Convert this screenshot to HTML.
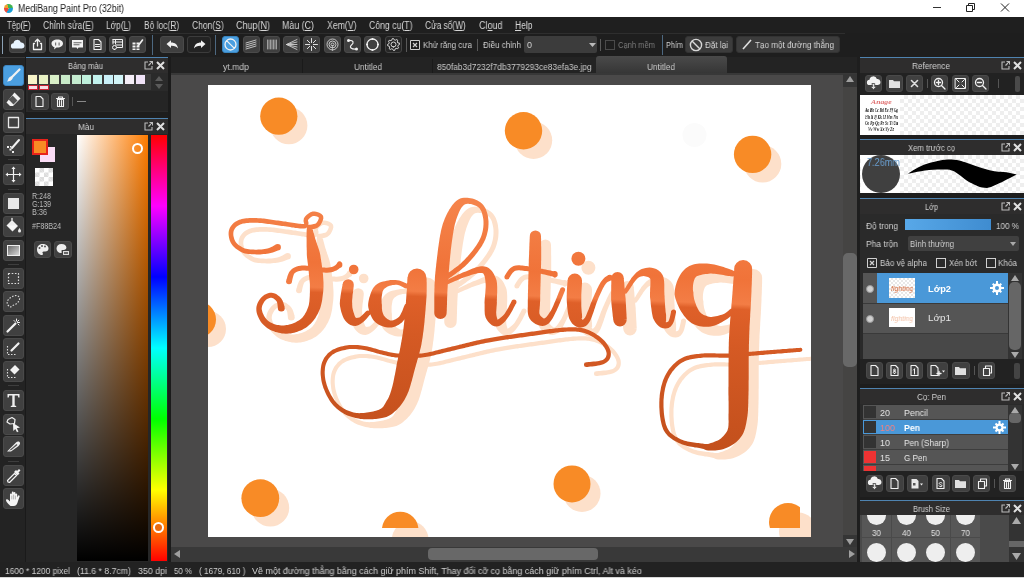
<!DOCTYPE html><html><head><meta charset="utf-8"><style>
html,body{margin:0;padding:0;width:1024px;height:578px;overflow:hidden;background:#232323}
body{position:relative;font-family:"Liberation Sans",sans-serif}
body>div,body>svg{position:absolute}
.tx{transform-origin:0 50%;will-change:transform}
</style></head><body>
<div style="left:0px;top:0px;width:1024px;height:17px;background:#ffffff;"></div>
<div style="left:4px;top:4px;width:9px;height:9px;border-radius:50%;background:conic-gradient(from 200deg,#e84c3d 0 22%,#f0a030 0 40%,#3fb34f 0 68%,#1b9fd6 0 100%)"></div>
<div id="t1" class="tx" style="transform:scaleX(0.883);left:18px;top:4.2px;font-size:10px;line-height:10px;color:#1a1a1a;font-weight:normal;white-space:nowrap;">MediBang Paint Pro (32bit)</div>
<div style="left:933px;top:7px;width:8px;height:1px;background:#333;"></div>
<svg style="left:966px;top:3px" width="9" height="9"><path d="M0.5 2.5H6.5V8.5H0.5Z M2.5 2.5V0.5H8.5V6.5H6.5" fill="none" stroke="#222" stroke-width="1"/></svg>
<svg style="left:1000px;top:3px" width="10" height="9"><path d="M1 0.5L9 8.5M9 0.5L1 8.5" stroke="#222" stroke-width="1"/></svg>
<div style="left:0px;top:17px;width:1024px;height:16px;background:#1f1f1f;"></div>
<div id="t2" class="tx" style="transform:scaleX(0.783);left:6.6px;top:21.4px;font-size:10px;line-height:10px;color:#d6d6d6;font-weight:normal;white-space:nowrap;">Tệp(<u>F</u>)</div>
<div id="t3" class="tx" style="transform:scaleX(0.852);left:43px;top:21.4px;font-size:10px;line-height:10px;color:#d6d6d6;font-weight:normal;white-space:nowrap;">Chỉnh sửa(<u>E</u>)</div>
<div id="t4" class="tx" style="transform:scaleX(0.836);left:105.5px;top:21.4px;font-size:10px;line-height:10px;color:#d6d6d6;font-weight:normal;white-space:nowrap;">Lớp(<u>L</u>)</div>
<div id="t5" class="tx" style="transform:scaleX(0.844);left:143.8px;top:21.4px;font-size:10px;line-height:10px;color:#d6d6d6;font-weight:normal;white-space:nowrap;">Bộ lọc(<u>R</u>)</div>
<div id="t6" class="tx" style="transform:scaleX(0.851);left:192px;top:21.4px;font-size:10px;line-height:10px;color:#d6d6d6;font-weight:normal;white-space:nowrap;">Chọn(<u>S</u>)</div>
<div id="t7" class="tx" style="transform:scaleX(0.899);left:236px;top:21.4px;font-size:10px;line-height:10px;color:#d6d6d6;font-weight:normal;white-space:nowrap;">Chụp(<u>N</u>)</div>
<div id="t8" class="tx" style="transform:scaleX(0.885);left:282px;top:21.4px;font-size:10px;line-height:10px;color:#d6d6d6;font-weight:normal;white-space:nowrap;">Màu (<u>C</u>)</div>
<div id="t9" class="tx" style="transform:scaleX(0.870);left:326.5px;top:21.4px;font-size:10px;line-height:10px;color:#d6d6d6;font-weight:normal;white-space:nowrap;">Xem(<u>V</u>)</div>
<div id="t10" class="tx" style="transform:scaleX(0.869);left:368.5px;top:21.4px;font-size:10px;line-height:10px;color:#d6d6d6;font-weight:normal;white-space:nowrap;">Công cụ(<u>T</u>)</div>
<div id="t11" class="tx" style="transform:scaleX(0.833);left:424.7px;top:21.4px;font-size:10px;line-height:10px;color:#d6d6d6;font-weight:normal;white-space:nowrap;">Cửa sổ(<u>W</u>)</div>
<div id="t12" class="tx" style="transform:scaleX(0.899);left:478.5px;top:21.4px;font-size:10px;line-height:10px;color:#d6d6d6;font-weight:normal;white-space:nowrap;">Cl<u>o</u>ud</div>
<div id="t13" class="tx" style="transform:scaleX(0.850);left:515px;top:21.4px;font-size:10px;line-height:10px;color:#d6d6d6;font-weight:normal;white-space:nowrap;"><u>H</u>elp</div>
<div style="left:0px;top:33px;width:1024px;height:24px;background:#1e1e1e;"></div>
<div style="left:0px;top:33px;width:845px;height:1px;background:#2e2e2e;"></div>
<div style="left:2px;top:36px;width:1px;height:18px;background:#8aa0b4;"></div>
<div style="left:9px;top:36px;width:15px;height:15px;background:#3f3f3f;border:1px solid #4a4a4a;border-radius:3px"></div>
<svg style="left:9px;top:36px" width="17" height="17" viewBox="0 0 17 17"><path d="M4.5 12.5a2.6 2.6 0 0 1 0-5.2 3.8 3.8 0 0 1 7.4-.8 2.9 2.9 0 0 1 1 6z" fill="#e8f4ff"/></svg>
<div style="left:29px;top:36px;width:15px;height:15px;background:#3f3f3f;border:1px solid #4a4a4a;border-radius:3px"></div>
<svg style="left:29px;top:36px" width="17" height="17" viewBox="0 0 17 17"><path d="M5.5 7.5H4.5V13.5H12.5V7.5H11.5" fill="none" stroke="#f2f2f2" stroke-width="1.3" stroke-linecap="round" stroke-linejoin="round"/><path d="M8.5 10V3.5M6.3 5.5L8.5 3.3 10.7 5.5" fill="none" stroke="#f2f2f2" stroke-width="1.3" stroke-linecap="round" stroke-linejoin="round"/></svg>
<div style="left:49px;top:36px;width:15px;height:15px;background:#3f3f3f;border:1px solid #4a4a4a;border-radius:3px"></div>
<svg style="left:49px;top:36px" width="17" height="17" viewBox="0 0 17 17"><path d="M8.5 3.5c3.3 0 5.5 1.8 5.5 4s-2.2 4-5.5 4l-1 .1-2.5 2 .5-2.3c-1.8-.6-3-2-3-3.8 0-2.2 2.2-4 6-4z" fill="#f2f2f2"/><path d="M6 6.5h1.2v3H6zM9.5 6.5h1.2v3H9.5z" fill="#777"/></svg>
<div style="left:69px;top:36px;width:15px;height:15px;background:#3f3f3f;border:1px solid #4a4a4a;border-radius:3px"></div>
<svg style="left:69px;top:36px" width="17" height="17" viewBox="0 0 17 17"><path d="M3 4h11v7.5H9.5L8.5 13 7.5 11.5H3z" fill="#f2f2f2"/><path d="M4.5 6.2h8v1h-8zM4.5 8.3h6v1h-6z" fill="#666"/></svg>
<div style="left:89px;top:36px;width:15px;height:15px;background:#3f3f3f;border:1px solid #4a4a4a;border-radius:3px"></div>
<svg style="left:89px;top:36px" width="17" height="17" viewBox="0 0 17 17"><path d="M5 3.5H9.5L12 6V13.5H5Z" fill="none" stroke="#f2f2f2" stroke-width="1.1" stroke-linecap="round" stroke-linejoin="round"/><path d="M6.5 8.5h4M6.5 10.5h4" fill="none" stroke="#f2f2f2" stroke-width="1.1" stroke-linecap="round" stroke-linejoin="round"/></svg>
<div style="left:109px;top:36px;width:15px;height:15px;background:#3f3f3f;border:1px solid #4a4a4a;border-radius:3px"></div>
<svg style="left:109px;top:36px" width="17" height="17" viewBox="0 0 17 17"><path d="M4 3.5H13.5V11.5H8M4 3.5V8M4 6H13.5M6.5 3.5V8M7 9H13.5" fill="none" stroke="#f2f2f2" stroke-width="1" stroke-linecap="round" stroke-linejoin="round"/><path d="M5.5 13.5a2 2 0 1 0 0-4 2 2 0 1 0 0 4z" fill="none" stroke="#f2f2f2" stroke-width="1" stroke-linecap="round" stroke-linejoin="round"/></svg>
<div style="left:129px;top:36px;width:15px;height:15px;background:#3f3f3f;border:1px solid #4a4a4a;border-radius:3px"></div>
<svg style="left:129px;top:36px" width="17" height="17" viewBox="0 0 17 17"><path d="M3.5 6.5h3v2h-3zM7.5 6.5h3v2h-3zM3.5 9.5h3v2h-3zM7.5 9.5h3v2h-3zM3.5 12.5h3v1.5h-3zM7.5 12.5h3v1.5h-3z" fill="#f2f2f2"/><path d="M9 10L13.5 4" fill="none" stroke="#f2f2f2" stroke-width="1.6" stroke-linecap="round" stroke-linejoin="round"/></svg>
<div style="left:152px;top:35px;width:1px;height:20px;background:#4d6880;"></div>
<div style="left:160px;top:36px;width:22px;height:15px;background:#3f3f3f;border:1px solid #4a4a4a;border-radius:3px"></div>
<svg style="left:163px;top:36px" width="19" height="17" viewBox="0 0 19 17"><path d="M3.5 8L8 4.2V6.5C12 6.5 14.5 8.5 15 12.5 13.5 10.3 11.5 9.6 8 9.7V12z" fill="#f2f2f2"/></svg>
<div style="left:187px;top:36px;width:22px;height:15px;background:#232323;border:1px solid #3c3c3c;border-radius:3px"></div>
<svg style="left:190px;top:36px" width="19" height="17" viewBox="0 0 19 17"><path d="M15.5 8L11 4.2V6.5C7 6.5 4.5 8.5 4 12.5 5.5 10.3 7.5 9.6 11 9.7V12z" fill="#f2f2f2"/></svg>
<div style="left:215px;top:35px;width:1px;height:20px;background:#4d6880;"></div>
<div style="left:222px;top:36px;width:15px;height:15px;background:#4b9fe0;border:1px solid #3a86c0;border-radius:3px"></div>
<svg style="left:222px;top:36px" width="17" height="17" viewBox="0 0 17 17"><path d="M8.5 14a5.5 5.5 0 1 0 0-11 5.5 5.5 0 1 0 0 11zM4.6 4.6L12.4 12.4" fill="none" stroke="#f2f2f2" stroke-width="1.3" stroke-linecap="round" stroke-linejoin="round"/></svg>
<div style="left:243px;top:36px;width:15px;height:15px;background:#3f3f3f;border:1px solid #4a4a4a;border-radius:3px"></div>
<svg style="left:243px;top:36px" width="17" height="17" viewBox="0 0 17 17"><path d="M3 7L13 4M3 9L13 6M3 11L13 8M3 13L13 10" fill="none" stroke="#cfcfcf" stroke-width="0.9" stroke-linecap="round" stroke-linejoin="round"/></svg>
<div style="left:263px;top:36px;width:15px;height:15px;background:#3f3f3f;border:1px solid #4a4a4a;border-radius:3px"></div>
<svg style="left:263px;top:36px" width="17" height="17" viewBox="0 0 17 17"><path d="M4.5 4V13M6 4V13M7.5 4V13M9 4V13M10.5 4V13M12 4V13M13.5 4V13" fill="none" stroke="#e0e0e0" stroke-width="0.6" stroke-linecap="round" stroke-linejoin="round"/></svg>
<div style="left:283px;top:36px;width:15px;height:15px;background:#3f3f3f;border:1px solid #4a4a4a;border-radius:3px"></div>
<svg style="left:283px;top:36px" width="17" height="17" viewBox="0 0 17 17"><path d="M3.5 8.5L14 3.5M3.5 8.5L14 6M3.5 8.5L14 8.5M3.5 8.5L14 11M3.5 8.5L14 13.5" fill="none" stroke="#d0d0d0" stroke-width="0.9" stroke-linecap="round" stroke-linejoin="round"/></svg>
<div style="left:303px;top:36px;width:15px;height:15px;background:#3f3f3f;border:1px solid #4a4a4a;border-radius:3px"></div>
<svg style="left:303px;top:36px" width="17" height="17" viewBox="0 0 17 17"><path d="M8.5 2.5V14.5M2.5 8.5H14.5M4.3 4.3L12.7 12.7M12.7 4.3L4.3 12.7" fill="none" stroke="#e0e0e0" stroke-width="1" stroke-linecap="round" stroke-linejoin="round"/><path d="M7 7h3v3H7z" fill="#404040"/></svg>
<div style="left:324px;top:36px;width:15px;height:15px;background:#3f3f3f;border:1px solid #4a4a4a;border-radius:3px"></div>
<svg style="left:324px;top:36px" width="17" height="17" viewBox="0 0 17 17"><path d="M8.5 14a5.5 5.5 0 1 0 0-11 5.5 5.5 0 1 0 0 11zM8.5 12a3.5 3.5 0 1 0 0-7 3.5 3.5 0 1 0 0 7zM8.5 10a1.5 1.5 0 1 0 0-3 1.5 1.5 0 1 0 0 3z" fill="none" stroke="#d8d8d8" stroke-width="0.9" stroke-linecap="round" stroke-linejoin="round"/></svg>
<div style="left:344px;top:36px;width:15px;height:15px;background:#3f3f3f;border:1px solid #4a4a4a;border-radius:3px"></div>
<svg style="left:344px;top:36px" width="17" height="17" viewBox="0 0 17 17"><path d="M4.5 4.5C10 4 10 7 7.5 9S7 13.5 12.5 13" fill="none" stroke="#f2f2f2" stroke-width="1.2" stroke-linecap="round" stroke-linejoin="round"/><path d="M3 4.5a1.5 1.5 0 1 0 3 0 1.5 1.5 0 1 0-3 0zM11 13a1.5 1.5 0 1 0 3 0 1.5 1.5 0 1 0-3 0z" fill="#f2f2f2"/></svg>
<div style="left:364px;top:36px;width:15px;height:15px;background:#3f3f3f;border:1px solid #4a4a4a;border-radius:3px"></div>
<svg style="left:364px;top:36px" width="17" height="17" viewBox="0 0 17 17"><path d="M8.5 14a5.5 5.5 0 1 0 0-11 5.5 5.5 0 1 0 0 11z" fill="none" stroke="#f2f2f2" stroke-width="1.3" stroke-linecap="round" stroke-linejoin="round"/><path d="M7.5 3a1 1 0 1 0 2 0 1 1 0 1 0-2 0zM13 8.5a1 1 0 1 0 2 0 1 1 0 1 0-2 0zM2 8.5a1 1 0 1 0 2 0 1 1 0 1 0-2 0zM7.5 14a1 1 0 1 0 2 0 1 1 0 1 0-2 0z" fill="#f2f2f2"/></svg>
<div style="left:385px;top:36px;width:15px;height:15px;background:#262626;border:1px solid #444;border-radius:3px"></div>
<svg style="left:385px;top:36px" width="17" height="17" viewBox="0 0 17 17"><path d="M14.38,7.31 14.50,8.48 13.01,9.38 12.76,10.24 13.50,11.82 12.76,12.73 11.07,12.32 10.28,12.74 9.69,14.38 8.52,14.50 7.62,13.01 6.76,12.76 5.18,13.50 4.27,12.76 4.68,11.07 4.26,10.28 2.62,9.69 2.50,8.52 3.99,7.62 4.24,6.76 3.50,5.18 4.24,4.27 5.93,4.68 6.72,4.26 7.31,2.62 8.48,2.50 9.38,3.99 10.24,4.24 11.82,3.50 12.73,4.24 12.32,5.93 12.74,6.72Z" fill="none" stroke="#d8d8d8" stroke-width="1" stroke-linecap="round" stroke-linejoin="round"/><path d="M8.5 11a2.5 2.5 0 1 0 0-5 2.5 2.5 0 1 0 0 5z" fill="none" stroke="#d8d8d8" stroke-width="1" stroke-linecap="round" stroke-linejoin="round"/></svg>
<div style="left:406px;top:38px;width:1px;height:14px;background:#5a5a5a;"></div>
<div style="left:477px;top:39px;width:1px;height:12px;background:#5a5a5a;"></div>
<div style="left:600px;top:39px;width:1px;height:12px;background:#5a5a5a;"></div>
<div style="left:662px;top:35px;width:1px;height:20px;background:#4d6880;"></div>
<svg style="left:410px;top:40px" width="10" height="10"><path d="M0.5 0.5H9.5V9.5H0.5Z" fill="none" stroke="#d0d0d0"/><path d="M3 3L7 7M7 3L3 7" stroke="#d0d0d0" stroke-width="1.2"/></svg>
<div id="t14" class="tx" style="transform:scaleX(0.882);left:423px;top:41.3px;font-size:9px;line-height:9px;color:#cfcfcf;font-weight:normal;white-space:nowrap;">Khử răng cưa</div>
<div id="t15" class="tx" style="transform:scaleX(0.893);left:483px;top:41.3px;font-size:9px;line-height:9px;color:#cfcfcf;font-weight:normal;white-space:nowrap;">Điều chỉnh</div>
<div style="left:524px;top:36px;width:73px;height:17px;background:#3c3c3c;border-radius:2px"></div>
<div id="t16" class="tx" style="transform:scaleX(0.997);left:527px;top:41.3px;font-size:9px;line-height:9px;color:#cfcfcf;font-weight:normal;white-space:nowrap;">0</div>
<svg style="left:589px;top:43px" width="7" height="4"><path d="M0 0H7L3.5 4Z" fill="#bbb"/></svg>
<div style="left:605px;top:40px;width:8px;height:8px;border:1px solid #4a4a4a"></div>
<div id="t17" class="tx" style="transform:scaleX(0.841);left:618px;top:41.3px;font-size:9px;line-height:9px;color:#7a7a7a;font-weight:normal;white-space:nowrap;">Cạnh mềm</div>
<div id="t18" class="tx" style="transform:scaleX(0.809);left:666px;top:41.3px;font-size:9px;line-height:9px;color:#d0d0d0;font-weight:normal;white-space:nowrap;">Phím</div>
<div style="left:685px;top:36px;width:46px;height:15px;background:#3c3c3c;border:1px solid #333;border-radius:3px"></div>
<svg style="left:689px;top:38px" width="14" height="14"><circle cx="7" cy="7" r="5.6" fill="none" stroke="#d8d8d8" stroke-width="1.4"/><path d="M3 3L11 11" stroke="#d8d8d8" stroke-width="1.4"/></svg>
<div id="t19" class="tx" style="transform:scaleX(0.901);left:705px;top:41.3px;font-size:9px;line-height:9px;color:#d6d6d6;font-weight:normal;white-space:nowrap;">Đặt lại</div>
<div style="left:736px;top:36px;width:102px;height:15px;background:#3c3c3c;border:1px solid #333;border-radius:3px"></div>
<svg style="left:742px;top:39px" width="10" height="11"><path d="M1 10L9 1" stroke="#e0e0e0" stroke-width="1.6"/></svg>
<div id="t20" class="tx" style="transform:scaleX(0.903);left:755px;top:41.3px;font-size:9px;line-height:9px;color:#d6d6d6;font-weight:normal;white-space:nowrap;">Tạo một đường thẳng</div>
<div style="left:0px;top:57px;width:26px;height:505px;background:#232323;"></div>
<div style="left:0px;top:57px;width:26px;height:1px;background:#3a3a3a;"></div>
<div style="left:25px;top:57px;width:1px;height:505px;background:#1a1a1a;"></div>
<div style="left:3px;top:65px;width:19px;height:19px;background:#4b9fe0;border:1px solid #3d86c2;border-radius:3px"></div>
<svg style="left:3px;top:65px" width="21" height="21" viewBox="0 0 21 21"><path d="M16.5 4.5L8.5 12.5" fill="none" stroke="#f2f2f2" stroke-width="2.2" stroke-linecap="round" stroke-linejoin="round"/><path d="M8.8 11.5C7 11.2 5.5 12.5 5 15L4 16.5C6.5 16.5 9.2 15.5 9.8 13z" fill="#f2f2f2"/></svg>
<div style="left:3px;top:89px;width:19px;height:19px;background:#404040;border:1px solid #4a4a4a;border-radius:3px"></div>
<svg style="left:3px;top:89px" width="21" height="21" viewBox="0 0 21 21"><path d="M11.5 3.5L17.5 9.5 10 17H7L3.5 13.5z" fill="#f2f2f2"/><path d="M9.6 6.5L14.5 11.4 10.5 15.4 5.6 10.5z" fill="#555"/></svg>
<div style="left:3px;top:112px;width:19px;height:19px;background:#404040;border:1px solid #4a4a4a;border-radius:3px"></div>
<svg style="left:3px;top:112px" width="21" height="21" viewBox="0 0 21 21"><path d="M5.5 5.5H15.5V15.5H5.5Z" fill="none" stroke="#e8e8e8" stroke-width="1.3" stroke-linecap="round" stroke-linejoin="round"/></svg>
<div style="left:3px;top:135px;width:19px;height:19px;background:#404040;border:1px solid #4a4a4a;border-radius:3px"></div>
<svg style="left:3px;top:135px" width="21" height="21" viewBox="0 0 21 21"><path d="M16 5L9 13" fill="none" stroke="#f2f2f2" stroke-width="2" stroke-linecap="round" stroke-linejoin="round"/><path d="M4 11h2v2H4zM6.5 13.5h2v2h-2zM9 16h2v2H9zM7 11h1.5v1.5H7z" fill="#eee"/></svg>
<div style="left:3px;top:164px;width:19px;height:19px;background:#404040;border:1px solid #4a4a4a;border-radius:3px"></div>
<svg style="left:3px;top:164px" width="21" height="21" viewBox="0 0 21 21"><path d="M10.5 3.5V17.5M3.5 10.5H17.5" fill="none" stroke="#f2f2f2" stroke-width="1.2" stroke-linecap="round" stroke-linejoin="round"/><path d="M10.5 2.5L12.5 5H8.5zM10.5 18.5L12.5 16H8.5zM2.5 10.5L5 8.5V12.5zM18.5 10.5L16 8.5V12.5z" fill="#f2f2f2"/></svg>
<div style="left:3px;top:193px;width:19px;height:19px;background:#404040;border:1px solid #4a4a4a;border-radius:3px"></div>
<svg style="left:3px;top:193px" width="21" height="21" viewBox="0 0 21 21"><path d="M5 5h11v11H5z" fill="#e8e8e8"/></svg>
<div style="left:3px;top:216px;width:19px;height:19px;background:#404040;border:1px solid #4a4a4a;border-radius:3px"></div>
<svg style="left:3px;top:216px" width="21" height="21" viewBox="0 0 21 21"><path d="M3.5 9.5L9 4 15 10l-5.5 5.5z" fill="#eee"/><path d="M4 9.5h10l-4.5 4.5z" fill="#f8f8f8"/><path d="M16.5 12c1 1.5 1.5 2.3 1.5 3a1.5 1.5 0 0 1-3 0c0-.7.5-1.5 1.5-3z" fill="#eee"/><path d="M9 4V2.5" fill="none" stroke="#f2f2f2" stroke-width="1.3" stroke-linecap="round" stroke-linejoin="round"/></svg>
<div style="left:3px;top:240px;width:19px;height:19px;background:#404040;border:1px solid #4a4a4a;border-radius:3px"></div>
<svg style="left:3px;top:240px" width="21" height="21" viewBox="0 0 21 21"><defs><linearGradient id="gg" x1="0" y1="0" x2="1" y2="1"><stop offset="0" stop-color="#666"/><stop offset="1" stop-color="#ddd"/></linearGradient></defs><rect x="4.5" y="5.5" width="12" height="10" fill="url(#gg)" stroke="#eee" stroke-width="1"/></svg>
<div style="left:3px;top:268px;width:19px;height:19px;background:#404040;border:1px solid #4a4a4a;border-radius:3px"></div>
<svg style="left:3px;top:268px" width="21" height="21" viewBox="0 0 21 21"><path d="M5.5 5.5H15.5V15.5H5.5Z" fill="none" stroke="#ddd" stroke-width="1.2" stroke-dasharray="1.6 1.6" stroke-linejoin="round"/></svg>
<div style="left:3px;top:291px;width:19px;height:19px;background:#404040;border:1px solid #4a4a4a;border-radius:3px"></div>
<svg style="left:3px;top:291px" width="21" height="21" viewBox="0 0 21 21"><path d="M6 15C3 13 4 9 7 7S14 3 16 6 14 13 11 14 8 17 6 15Z" fill="none" stroke="#ddd" stroke-width="1.1" stroke-dasharray="1.5 1.5" stroke-linejoin="round"/></svg>
<div style="left:3px;top:315px;width:19px;height:19px;background:#404040;border:1px solid #4a4a4a;border-radius:3px"></div>
<svg style="left:3px;top:315px" width="21" height="21" viewBox="0 0 21 21"><path d="M4.5 16.5L12.5 8.5" fill="none" stroke="#f2f2f2" stroke-width="2.2" stroke-linecap="round" stroke-linejoin="round"/><path d="M13.5 4V6M16.5 7.5H14.5M15.8 5.2L14.5 6.5M11 5.5L12 6.5M16 10L15 9" fill="none" stroke="#f2f2f2" stroke-width="1" stroke-linecap="round" stroke-linejoin="round"/></svg>
<div style="left:3px;top:338px;width:19px;height:19px;background:#404040;border:1px solid #4a4a4a;border-radius:3px"></div>
<svg style="left:3px;top:338px" width="21" height="21" viewBox="0 0 21 21"><path d="M4.5 8V16.5H13" fill="none" stroke="#ddd" stroke-width="1.1" stroke-dasharray="1.5 1.5" stroke-linejoin="round"/><path d="M8.5 12.5L15.5 5.5" fill="none" stroke="#f2f2f2" stroke-width="2.2" stroke-linecap="round" stroke-linejoin="round"/></svg>
<div style="left:3px;top:361px;width:19px;height:19px;background:#404040;border:1px solid #4a4a4a;border-radius:3px"></div>
<svg style="left:3px;top:361px" width="21" height="21" viewBox="0 0 21 21"><path d="M4.5 8V16.5H13" fill="none" stroke="#ddd" stroke-width="1.1" stroke-dasharray="1.5 1.5" stroke-linejoin="round"/><path d="M12 4l4.5 4.5-5 5-4.5-4.5z" fill="#f2f2f2"/></svg>
<div style="left:3px;top:390px;width:19px;height:19px;background:#404040;border:1px solid #4a4a4a;border-radius:3px"></div>
<svg style="left:3px;top:390px" width="21" height="21" viewBox="0 0 21 21"><path d="M4.5 4H16.5V7.5H15.3L14.8 5.5H11.7V15.5L13.2 16V17H7.8V16L9.3 15.5V5.5H6.2L5.7 7.5H4.5z" fill="#eee"/></svg>
<div style="left:3px;top:414px;width:19px;height:19px;background:#404040;border:1px solid #4a4a4a;border-radius:3px"></div>
<svg style="left:3px;top:414px" width="21" height="21" viewBox="0 0 21 21"><path d="M5 5.5L9 3.5 12 5.5 11.5 9.5 7 10 4 8Z" fill="none" stroke="#f2f2f2" stroke-width="1.2" stroke-linecap="round" stroke-linejoin="round"/><path d="M10 9L17 13.5 13.8 14.3 15.5 17.5 14 18.3 12.3 15 10.3 17z" fill="#f2f2f2"/></svg>
<div style="left:3px;top:436px;width:19px;height:19px;background:#404040;border:1px solid #4a4a4a;border-radius:3px"></div>
<svg style="left:3px;top:436px" width="21" height="21" viewBox="0 0 21 21"><path d="M4 15.5L13 6.5C14.5 5 16.5 5.5 17 6.8S16 9.5 15 10.5L8 15.5z" fill="#eee"/><path d="M6 14.5L13.5 8 14.5 9 8.5 14z" fill="#555"/></svg>
<div style="left:3px;top:465px;width:19px;height:19px;background:#404040;border:1px solid #4a4a4a;border-radius:3px"></div>
<svg style="left:3px;top:465px" width="21" height="21" viewBox="0 0 21 21"><path d="M5 17L4.5 15.5 11.5 8.5 13.5 10.5 6.5 17.5Z" fill="none" stroke="#f2f2f2" stroke-width="1.2" stroke-linecap="round" stroke-linejoin="round"/><path d="M11 7l2-2 1 1 2-2 1.5 1.5-2 2 1 1-2 2z" fill="#f2f2f2"/></svg>
<div style="left:3px;top:488px;width:19px;height:19px;background:#404040;border:1px solid #4a4a4a;border-radius:3px"></div>
<svg style="left:3px;top:488px" width="21" height="21" viewBox="0 0 21 21"><path d="M7.5 18C5.5 16.5 3 13.5 3 12.3S4.5 11 5.5 12L7 13.5V6.5a.9.9 0 0 1 1.8 0V11V4.5a.9.9 0 0 1 1.8 0V11V4.8a.9.9 0 0 1 1.8 0V11.2V6.5a.9.9 0 0 1 1.8 0V9.5L15 7.8a.9.9 0 0 1 1.6.8L15 13c-.6 3-2 5-4.5 5z" fill="#f5f5f5"/><path d="M8.8 11V8M10.6 11V7M12.4 11V8" fill="none" stroke="#777" stroke-width="0.5" stroke-linecap="round" stroke-linejoin="round"/></svg>
<div style="left:8px;top:159px;width:11px;height:1px;background:#3e3e3e;"></div>
<div style="left:8px;top:189px;width:11px;height:1px;background:#3e3e3e;"></div>
<div style="left:8px;top:264px;width:11px;height:1px;background:#3e3e3e;"></div>
<div style="left:8px;top:385px;width:11px;height:1px;background:#3e3e3e;"></div>
<div style="left:8px;top:461px;width:11px;height:1px;background:#3e3e3e;"></div>
<div style="left:26px;top:57px;width:145px;height:505px;background:#262626;"></div>
<div style="left:168px;top:57px;width:3px;height:505px;background:#1b1b1b;"></div>
<div style="left:26px;top:57px;width:142px;height:1px;background:#4f83b0;"></div>
<div style="left:26px;top:58px;width:142px;height:15px;background:#2e2d2d;"></div>
<div id="t21" class="tx" style="left:68.0px;transform:scaleX(0.853);top:61.8px;font-size:9px;line-height:9px;color:#cfcfcf;font-weight:normal;white-space:nowrap;">Bảng màu</div>
<svg style="left:144px;top:61px" width="9" height="9"><path d="M4 1H1V8H8V5" fill="none" stroke="#bbb" stroke-width="1.1"/><path d="M4.5 4.5L8.5 0.5M5.5 0.5H8.5V3.5" fill="none" stroke="#bbb" stroke-width="1.1"/></svg>
<svg style="left:156px;top:61px" width="9" height="9"><path d="M1 1L8 8M8 1L1 8" stroke="#e0e0e0" stroke-width="2"/></svg>
<div style="left:26px;top:73px;width:142px;height:39px;background:#2a2a2a;"></div>
<div style="left:28px;top:74px;width:123px;height:16px;background:#3a3a3a;"></div>
<div style="left:28px;top:75px;width:9px;height:9px;background:#f7f3c8;"></div>
<div style="left:39px;top:75px;width:9px;height:9px;background:#e9f2c4;"></div>
<div style="left:50px;top:75px;width:9px;height:9px;background:#d9f0c8;"></div>
<div style="left:61px;top:75px;width:9px;height:9px;background:#c9ebc9;"></div>
<div style="left:72px;top:75px;width:9px;height:9px;background:#c5ecd0;"></div>
<div style="left:82px;top:75px;width:9px;height:9px;background:#bff0dc;"></div>
<div style="left:93px;top:75px;width:9px;height:9px;background:#c2f2ee;"></div>
<div style="left:104px;top:75px;width:9px;height:9px;background:#c9f0f8;"></div>
<div style="left:114px;top:75px;width:9px;height:9px;background:#d2f5f8;"></div>
<div style="left:125px;top:75px;width:9px;height:9px;background:#f5eff8;"></div>
<div style="left:136px;top:75px;width:9px;height:9px;background:#f0e3f8;"></div>
<div style="left:28px;top:85px;width:10px;height:5px;background:#cc2233;"></div>
<div style="left:39px;top:85px;width:10px;height:5px;background:#cc2233;"></div>
<div style="left:29px;top:86px;width:8px;height:3px;background:#f6dde4;"></div>
<div style="left:40px;top:86px;width:8px;height:3px;background:#f6dde4;"></div>
<svg style="left:155px;top:76px" width="8" height="13"><path d="M0 5L4 0L8 5Z M0 8L4 13L8 8Z" fill="#5a5a5a"/></svg>
<div style="left:28px;top:91px;width:140px;height:20px;background:#252525;"></div>
<div style="left:31px;top:93px;width:16px;height:15px;background:#404040;border:1px solid #4a4a4a;border-radius:3px"></div>
<svg style="left:31px;top:93px" width="17" height="17" viewBox="0 0 17 17"><path d="M5 3.5H9.5L12 6V13.5H5Z" fill="none" stroke="#f2f2f2" stroke-width="1.1" stroke-linecap="round" stroke-linejoin="round"/></svg>
<div style="left:51px;top:93px;width:16px;height:15px;background:#404040;border:1px solid #4a4a4a;border-radius:3px"></div>
<svg style="left:52px;top:93px" width="17" height="17" viewBox="0 0 17 17"><path d="M4.5 5.5H12.5M6.5 5.5V4H10.5V5.5M5.5 6.5H11.5V13.5H5.5ZM7.5 7.5V12.5M9.5 7.5V12.5" fill="none" stroke="#f2f2f2" stroke-width="1.1" stroke-linecap="round" stroke-linejoin="round"/></svg>
<div style="left:72px;top:97px;width:1px;height:9px;background:#555;"></div>
<div style="left:77px;top:101px;width:9px;height:1px;background:#888;"></div>
<div style="left:26px;top:112px;width:142px;height:6px;background:#1d1d1d;"></div>
<div style="left:26px;top:118px;width:142px;height:1px;background:#4f83b0;"></div>
<div style="left:26px;top:119px;width:142px;height:15px;background:#2e2d2d;"></div>
<div id="t22" class="tx" style="left:77.5px;transform:scaleX(0.913);top:122.8px;font-size:9px;line-height:9px;color:#cfcfcf;font-weight:normal;white-space:nowrap;">Màu</div>
<svg style="left:144px;top:122px" width="9" height="9"><path d="M4 1H1V8H8V5" fill="none" stroke="#bbb" stroke-width="1.1"/><path d="M4.5 4.5L8.5 0.5M5.5 0.5H8.5V3.5" fill="none" stroke="#bbb" stroke-width="1.1"/></svg>
<svg style="left:156px;top:122px" width="9" height="9"><path d="M1 1L8 8M8 1L1 8" stroke="#e0e0e0" stroke-width="2"/></svg>
<div style="left:26px;top:135px;width:142px;height:427px;background:#262626;"></div>
<div style="left:40px;top:147px;width:15px;height:15px;background:#fadcf5;"></div>
<div style="left:32px;top:139px;width:12px;height:12px;background:#f88b24;border:2px solid #e8221a"></div>
<div style="left:35px;top:168px;width:18px;height:18px;background:#fff;background-image:linear-gradient(45deg,#ddd 25%,transparent 25%,transparent 75%,#ddd 75%),linear-gradient(45deg,#ddd 25%,transparent 25%,transparent 75%,#ddd 75%);background-size:9px 9px;background-position:0 0,4.5px 4.5px"></div>
<div id="t23" class="tx" style="transform:scaleX(0.791);left:32px;top:192.3px;font-size:9px;line-height:9px;color:#bdbdbd;font-weight:normal;white-space:nowrap;">R:248</div>
<div id="t24" class="tx" style="transform:scaleX(0.775);left:32px;top:200.3px;font-size:9px;line-height:9px;color:#bdbdbd;font-weight:normal;white-space:nowrap;">G:139</div>
<div id="t25" class="tx" style="transform:scaleX(0.810);left:32px;top:208.3px;font-size:9px;line-height:9px;color:#bdbdbd;font-weight:normal;white-space:nowrap;">B:36</div>
<div id="t26" class="tx" style="transform:scaleX(0.794);left:32px;top:222.3px;font-size:9px;line-height:9px;color:#bdbdbd;font-weight:normal;white-space:nowrap;">#F88B24</div>
<div style="left:34px;top:241px;width:15px;height:15px;background:#404040;border:1px solid #4a4a4a;border-radius:3px"></div>
<svg style="left:34px;top:241px" width="17" height="17" viewBox="0 0 17 17"><path d="M8.5 3C5 3 3 5.5 3 8.5S5 14 8 14c1.2 0 1.2-1.2.7-1.8-.6-.7 0-1.7 1-1.7h1.5c2 0 3.3-1.2 3.3-3C14.5 5 12 3 8.5 3z" fill="#eee"/><path d="M5.5 8a1 1 0 1 0 0-2 1 1 0 1 0 0 2zM8 6a1 1 0 1 0 0-2 1 1 0 1 0 0 2zM11 6.5a1 1 0 1 0 0-2 1 1 0 1 0 0 2z" fill="#555"/></svg>
<div style="left:54px;top:241px;width:16px;height:15px;background:#404040;border:1px solid #4a4a4a;border-radius:3px"></div>
<svg style="left:54px;top:241px" width="17" height="17" viewBox="0 0 17 17"><path d="M7.5 3C4.5 3 2.5 5 2.5 7.5S4.5 12 7 12c1 0 1-1 .6-1.5-.5-.6 0-1.4.8-1.4h1.2c1.7 0 2.8-1 2.8-2.5C12.4 4.8 10.5 3 7.5 3z" fill="#eee"/><path d="M9 10h6v4H9z" fill="#ddd"/><path d="M10 11h4v2h-4z" fill="#666"/></svg>
<div style="left:77px;top:135px;width:71px;height:426px;background:linear-gradient(to bottom,rgba(0,0,0,0),#000),linear-gradient(to right,#fff,#ff7c00)"></div>
<div style="left:151px;top:135px;width:16px;height:426px;background:linear-gradient(to bottom,#ff0000 0%,#ff00ff 16.67%,#0000ff 33.33%,#00ffff 50%,#00ff00 66.67%,#ffff00 83.33%,#ff0000 100%)"></div>
<div style="left:132px;top:143px;width:7px;height:7px;border:2px solid #fff;border-radius:50%"></div>
<div style="left:153px;top:522px;width:7px;height:7px;border:2px solid #fff;border-radius:50%;background:#e86a10"></div>
<div style="left:171px;top:57px;width:689px;height:17px;background:#232323;"></div>
<div style="left:171px;top:73px;width:686px;height:2px;background:#383838;"></div>
<div style="left:171px;top:75px;width:672px;height:472px;background:#4a4949;"></div>
<div style="left:302px;top:59px;width:1px;height:14px;background:#1a1a1a;"></div>
<div style="left:432px;top:59px;width:1px;height:14px;background:#1a1a1a;"></div>
<div style="left:596px;top:56px;width:131px;height:17px;background:linear-gradient(#4a4a4a,#363636);border-radius:3px 3px 0 0"></div>
<div id="t27" class="tx" style="left:223.0px;transform:scaleX(0.962);top:62.8px;font-size:9px;line-height:9px;color:#c8c8c8;font-weight:normal;white-space:nowrap;">yt.mdp</div>
<div id="t28" class="tx" style="left:354.0px;transform:scaleX(0.918);top:62.8px;font-size:9px;line-height:9px;color:#c8c8c8;font-weight:normal;white-space:nowrap;">Untitled</div>
<div id="t29" class="tx" style="left:436.8px;transform:scaleX(0.927);top:62.8px;font-size:9px;line-height:9px;color:#c8c8c8;font-weight:normal;white-space:nowrap;">850fab3d7232f7db3779293ce83efa3e.jpg</div>
<div id="t30" class="tx" style="left:647.0px;transform:scaleX(0.918);top:62.8px;font-size:9px;line-height:9px;color:#c8c8c8;font-weight:normal;white-space:nowrap;">Untitled</div>
<div style="left:208px;top:85px;width:603px;height:452px;background:#ffffff;"></div>
<svg style="left:208px;top:85px" width="603" height="452" viewBox="208 85 603 452"><defs><linearGradient id="lg" gradientUnits="userSpaceOnUse" x1="316" y1="200" x2="305.6" y2="460"><stop offset="0" stop-color="#f5834a"/><stop offset="0.24" stop-color="#f07339"/><stop offset="0.335" stop-color="#f37d45"/><stop offset="0.355" stop-color="#df6029"/><stop offset="0.5" stop-color="#d55a24"/><stop offset="0.8" stop-color="#c7521e"/><stop offset="1" stop-color="#bf4e1b"/></linearGradient><clipPath id="c5"><rect x="370" y="500" width="60" height="28"/></clipPath><clipPath id="c7"><rect x="760" y="490" width="40" height="38"/></clipPath></defs><circle cx="694.5" cy="135" r="12" fill="#fbfbfb"/><circle cx="288.8" cy="125.7" r="18.6" fill="#fde0ca"/><circle cx="533.5" cy="140.3" r="18.7" fill="#fde0ca"/><circle cx="762.6" cy="163.9" r="18.7" fill="#fde0ca"/><circle cx="270.3" cy="507.7" r="18.9" fill="#fde0ca"/><circle cx="582" cy="493.4" r="18.5" fill="#fde0ca"/><circle cx="208" cy="329.0" r="18" fill="#fde0ca"/><circle cx="410.2" cy="539.5" r="18.3" fill="#fde0ca"/><circle cx="798" cy="531.5" r="19" fill="#fde0ca"/><path transform="translate(10,9)" d="M276.4,244.2 275.4,244.8 274.1,245.6 272.5,246.4 270.8,247.2 269.1,248.0 267.4,248.6 266.1,248.8 264.6,249.1 263.1,249.3 261.5,249.4 259.9,249.6 258.2,249.6 256.6,249.7 255.1,249.7 253.5,249.6 251.9,249.5 250.4,249.4 248.9,249.3 247.4,249.1 246.1,248.8 244.8,248.4 243.6,248.0 242.3,247.3 241.1,246.6 239.8,245.8 238.6,244.9 237.5,243.9 236.5,242.9 235.7,241.9 235.1,240.9 234.5,239.8 234.1,238.5 233.7,237.1 233.4,235.7 233.3,234.3 233.3,232.9 233.5,231.8 233.7,230.8 234.2,229.7 234.9,228.6 235.7,227.5 236.7,226.6 237.9,225.7 239.2,224.9 240.8,224.2 241.8,223.9 242.9,223.6 244.1,223.4 245.3,223.2 246.7,223.0 248.1,222.9 249.6,222.8 251.1,222.8 252.7,222.7 254.4,222.7 256.1,222.8 257.9,222.8 259.2,222.9 260.5,223.0 261.9,223.1 263.3,223.3 264.8,223.5 266.3,223.7 267.9,223.9 269.5,224.1 271.1,224.3 272.7,224.6 274.2,224.8 275.8,225.0 277.4,225.3 278.9,225.5 280.4,225.7 281.9,225.9 283.3,226.1 285.0,226.3 286.7,226.5 288.4,226.8 290.2,227.1 291.9,227.4 293.6,227.6 295.3,227.9 297.0,228.1 298.5,228.3 300.0,228.5 301.5,228.6 302.8,228.6 304.0,228.6 305.8,228.2 308.4,226.0 308.5,222.7 308.0,220.7 308.1,219.8 308.7,219.2 309.8,218.1 311.1,217.1 312.3,216.3 313.2,216.0 314.4,216.0 316.1,216.3 317.6,216.8 318.7,217.4 318.9,217.6 318.9,217.9 318.6,219.1 317.9,220.7 316.9,222.2 316.1,223.2 315.2,223.7 313.7,224.1 311.9,224.4 310.2,224.7 308.9,224.8 309.9,229.8 311.0,229.5 312.8,229.2 314.9,228.7 317.1,227.9 319.1,226.6 320.6,224.9 321.8,222.8 322.8,220.6 323.4,218.3 323.1,215.8 321.5,213.9 319.4,212.7 317.2,211.9 314.8,211.5 312.6,211.6 310.4,212.2 308.5,213.4 306.8,214.7 305.3,216.2 303.9,218.2 303.5,221.0 304.0,223.3 304.2,223.9 303.6,224.0 303.6,223.9 302.8,223.9 301.7,223.9 300.5,223.8 299.1,223.7 297.6,223.5 296.0,223.2 294.4,223.0 292.7,222.7 290.9,222.4 289.1,222.2 287.4,221.9 285.6,221.6 283.9,221.4 282.5,221.2 281.1,221.1 279.6,220.8 278.1,220.6 276.5,220.4 274.9,220.2 273.3,219.9 271.7,219.7 270.1,219.4 268.5,219.2 267.0,219.0 265.4,218.8 263.9,218.6 262.4,218.5 260.9,218.3 259.5,218.2 258.1,218.2 256.3,218.1 254.5,218.1 252.7,218.0 251.0,218.1 249.4,218.1 247.8,218.2 246.2,218.3 244.7,218.5 243.2,218.7 241.8,219.0 240.5,219.4 239.2,219.8 237.2,220.7 235.3,221.7 233.6,223.0 232.2,224.4 231.0,225.9 230.0,227.5 229.3,229.2 228.8,230.9 228.6,232.7 228.6,234.5 228.8,236.3 229.1,238.1 229.6,239.9 230.2,241.6 230.9,243.1 231.9,244.6 233.0,246.0 234.3,247.3 235.6,248.5 237.1,249.6 238.6,250.6 240.1,251.5 241.6,252.2 243.3,252.9 244.9,253.4 246.6,253.7 248.3,254.0 250.0,254.1 251.7,254.2 253.3,254.3 254.9,254.3 256.6,254.4 258.3,254.4 260.1,254.4 261.9,254.3 263.6,254.1 265.3,254.0 266.9,253.7 268.6,253.4 270.7,253.0 272.8,252.4 274.8,251.7 276.6,251.0 278.0,250.5 279.0,250.2ZM274.4,247.2a3.2,3.2 0 1,0 6.5,0a3.2,3.2 0 1,0 -6.5,0ZM306.9,227.3a2.5,2.5 0 1,0 5.0,0a2.5,2.5 0 1,0 -5.0,0ZM306.9,227.6 306.8,228.6 306.7,229.9 306.6,231.4 306.6,233.1 306.6,235.0 306.5,236.9 306.6,238.8 306.6,240.7 306.6,242.1 306.6,243.6 306.6,245.1 306.6,246.5 306.7,248.0 306.7,249.5 306.8,251.1 306.8,252.6 306.8,254.3 306.9,256.0 307.0,257.3 307.2,258.8 307.4,260.3 307.6,261.9 307.8,263.5 308.0,265.1 308.2,266.7 308.3,268.3 308.5,269.9 308.7,271.4 308.8,272.9 308.9,274.3 309.0,275.6 309.2,277.3 309.4,278.9 309.5,280.3 309.7,281.7 309.8,283.0 309.9,284.3 309.9,285.5 309.9,286.8 309.9,288.2 309.9,289.6 309.9,291.0 309.9,292.5 309.8,293.9 309.8,295.4 309.7,296.9 309.6,298.3 309.5,299.8 309.4,301.2 309.2,302.5 309.0,303.7 308.8,304.9 308.5,306.0 308.1,307.3 307.6,308.5 307.1,309.8 306.6,311.0 306.0,312.2 305.3,313.3 304.7,314.4 304.0,315.5 303.2,316.5 302.5,317.4 301.7,318.2 300.8,319.0 299.9,319.7 298.8,320.4 297.7,321.1 296.5,321.8 295.3,322.4 294.0,323.0 292.8,323.5 291.5,323.9 290.3,324.3 289.2,324.6 287.9,324.9 286.6,325.1 285.3,325.3 283.9,325.4 282.6,325.4 281.2,325.4 279.8,325.3 278.5,325.1 277.2,324.9 276.1,324.7 274.6,324.2 273.2,323.7 271.9,323.1 270.6,322.4 269.4,321.7 268.3,320.9 267.2,320.0 266.3,319.1 265.5,318.0 264.6,316.8 263.9,315.5 263.2,314.1 262.6,312.7 262.2,311.3 261.9,310.0 261.7,309.0 261.8,307.8 262.0,306.5 262.4,305.2 263.0,304.0 263.7,302.7 264.4,301.6 265.1,300.7 266.0,299.8 267.1,299.1 268.3,298.4 269.5,298.0 270.6,297.7 271.4,297.7 272.4,298.0 273.6,298.6 274.8,299.5 275.9,300.6 276.7,301.6 277.1,302.6 277.4,304.1 277.6,305.8 277.8,307.5 277.9,308.7 284.7,307.3 284.4,306.3 283.9,304.6 283.3,302.6 282.5,300.4 281.3,298.4 279.8,296.8 278.1,295.4 276.2,294.1 274.1,293.2 271.8,292.7 269.9,292.8 268.0,293.2 266.2,293.9 264.5,294.8 262.9,296.0 261.5,297.3 260.4,298.5 259.3,300.0 258.4,301.5 257.5,303.2 256.9,305.1 256.4,307.0 256.3,309.0 256.4,310.9 256.7,312.7 257.2,314.5 257.9,316.3 258.7,318.1 259.6,319.8 260.6,321.4 261.7,322.9 262.9,324.3 264.2,325.6 265.6,326.8 267.1,327.9 268.7,328.9 270.4,329.9 272.2,330.7 273.9,331.3 275.4,331.9 277.0,332.3 278.6,332.7 280.2,333.1 281.9,333.4 283.7,333.5 285.4,333.7 287.2,333.7 289.1,333.6 290.8,333.4 292.5,333.1 294.1,332.7 295.7,332.3 297.4,331.7 299.0,331.1 300.7,330.4 302.3,329.7 303.9,328.8 305.4,327.9 306.9,326.9 308.3,325.8 309.7,324.6 310.9,323.4 312.2,322.1 313.3,320.7 314.4,319.3 315.4,317.9 316.3,316.3 317.2,314.8 318.1,313.2 318.8,311.6 319.5,310.0 320.2,308.3 320.7,306.6 321.1,304.9 321.5,303.2 321.9,301.5 322.2,299.8 322.4,298.1 322.6,296.5 322.8,294.8 323.0,293.3 323.2,291.8 323.3,290.4 323.4,288.7 323.5,287.0 323.5,285.4 323.5,283.8 323.5,282.3 323.4,280.7 323.3,279.2 323.2,277.7 323.1,276.1 323.0,274.4 322.8,272.9 322.6,271.4 322.4,269.8 322.2,268.2 322.0,266.6 321.8,265.0 321.6,263.3 321.3,261.7 321.1,260.0 320.8,258.4 320.6,256.9 320.4,255.4 320.1,254.0 319.7,252.3 319.2,250.6 318.7,249.0 318.2,247.5 317.7,246.1 317.2,244.7 316.8,243.3 316.3,242.0 315.9,240.6 315.4,239.3 314.9,237.6 314.5,235.9 314.0,234.0 313.5,232.3 313.1,230.6 312.6,229.2 312.2,227.9 311.9,227.0ZM306.9,227.3a2.5,2.5 0 1,0 5.0,0a2.5,2.5 0 1,0 -5.0,0ZM277.8,308.0a3.5,3.5 0 1,0 7.0,0a3.5,3.5 0 1,0 -7.0,0ZM291.9,282.1 292.1,281.0 292.4,279.4 292.8,277.7 293.3,276.0 293.8,274.6 294.3,273.6 295.0,272.9 295.9,272.3 297.0,271.8 298.2,271.3 299.6,271.0 301.1,270.7 302.2,270.6 303.4,270.5 304.8,270.6 306.3,270.7 307.8,270.8 309.5,271.0 311.1,271.1 312.8,271.3 314.3,271.4 315.8,271.6 317.4,271.8 319.1,272.0 320.8,272.2 322.4,272.4 324.0,272.6 325.6,272.7 327.1,272.7 329.4,272.5 331.5,272.2 333.3,271.7 334.9,271.1 336.5,270.4 338.7,269.1 340.4,267.6 341.5,266.6 337.5,262.8 336.7,263.8 335.6,265.0 334.1,266.0 333.1,266.4 331.8,266.9 330.4,267.3 328.8,267.6 326.9,267.7 325.8,267.7 324.4,267.6 323.0,267.5 321.4,267.3 319.7,267.1 318.1,266.9 316.4,266.6 314.8,266.5 313.2,266.3 311.6,266.2 310.0,266.0 308.3,265.8 306.7,265.7 305.1,265.6 303.5,265.5 301.9,265.6 300.3,265.7 298.5,266.1 296.7,266.6 295.0,267.2 293.4,268.0 291.9,269.1 290.5,270.4 289.2,272.1 288.3,274.1 287.5,276.1 287.0,278.0 286.5,279.5 286.1,280.5ZM286.0,281.3a3.0,3.0 0 1,0 6.0,0a3.0,3.0 0 1,0 -6.0,0ZM336.8,264.7a2.8,2.8 0 1,0 5.5,0a2.8,2.8 0 1,0 -5.5,0ZM342.6,284.1 342.5,284.9 342.3,286.1 342.0,287.4 341.7,289.0 341.4,290.7 341.1,292.5 340.8,294.4 340.5,296.3 340.3,298.2 340.0,300.1 339.9,301.9 339.8,303.7 340.0,305.9 340.4,308.1 340.8,310.1 341.3,312.0 341.9,313.8 342.5,315.4 343.1,316.9 343.8,318.4 345.1,320.4 346.7,322.2 348.4,323.8 350.4,325.0 352.8,325.8 355.6,325.9 358.2,325.2 360.5,324.0 362.6,322.6 364.1,321.3 365.6,319.8 367.0,318.3 368.2,316.8 369.2,315.6 369.8,314.7 366.2,311.3 365.3,312.1 364.2,313.2 362.9,314.5 361.6,315.8 360.4,316.8 359.4,317.4 357.9,317.8 356.5,317.9 355.7,317.6 355.2,317.2 355.2,316.9 355.0,316.5 354.7,315.8 354.4,314.9 354.0,313.6 353.7,312.7 353.3,311.6 353.0,310.4 352.7,309.1 352.4,307.8 352.3,306.4 352.2,304.9 352.2,303.3 352.1,302.3 352.1,301.0 352.2,299.4 352.4,297.7 352.5,296.0 352.7,294.2 353.0,292.4 353.2,290.8 353.4,289.2 353.5,287.8 353.7,286.5 353.8,285.5ZM342.6,284.8a5.6,5.6 0 1,0 11.2,0a5.6,5.6 0 1,0 -11.2,0ZM365.5,313.0a2.5,2.5 0 1,0 5.0,0a2.5,2.5 0 1,0 -5.0,0ZM407.0,283.7 406.1,283.3 404.8,282.7 403.2,282.0 401.3,281.2 399.3,280.6 397.3,280.3 395.6,280.1 393.8,280.0 392.0,280.0 390.2,280.1 388.4,280.4 386.6,280.7 384.9,281.2 383.1,281.6 381.2,282.1 379.3,282.8 377.2,283.9 375.3,285.6 373.6,287.5 372.6,289.1 371.8,290.7 371.1,292.3 370.5,294.1 369.9,295.9 369.3,297.7 368.9,299.6 368.5,301.5 368.2,303.4 368.1,305.2 368.3,307.2 368.7,309.1 369.2,311.0 369.8,312.9 370.5,314.8 371.3,316.5 372.2,318.3 373.3,319.9 374.6,321.5 376.3,322.9 378.1,324.2 379.9,325.2 381.9,326.1 383.9,326.8 385.9,327.3 387.9,327.5 389.8,327.5 391.8,327.4 393.6,327.0 395.4,326.4 397.2,325.6 398.8,324.7 400.4,323.6 401.9,322.4 403.2,321.0 404.3,319.5 405.3,317.8 406.2,316.0 406.9,314.1 407.6,312.3 408.1,310.6 408.6,309.1 409.0,307.8 409.3,306.9 404.7,305.1 404.2,306.0 403.7,307.3 403.1,308.8 402.5,310.4 401.8,312.0 401.0,313.6 400.3,315.0 399.5,316.2 398.8,317.0 397.9,317.8 396.8,318.5 395.6,319.2 394.4,319.7 393.3,320.2 392.1,320.4 391.1,320.5 390.2,320.5 389.3,320.1 388.3,319.6 387.3,318.9 386.2,318.1 385.3,317.2 384.5,316.3 383.8,315.4 383.4,314.5 383.1,313.8 382.8,313.0 382.5,312.0 382.2,310.9 382.1,309.7 381.9,308.5 381.9,307.2 381.9,306.0 381.9,304.8 381.7,303.7 381.6,302.5 381.6,301.1 381.6,299.7 381.6,298.2 381.7,296.8 381.9,295.5 382.1,294.2 382.3,293.2 382.4,292.5 382.7,291.3 383.1,290.4 383.7,289.5 384.6,288.6 385.8,287.7 387.1,286.8 388.3,286.3 389.6,285.8 391.0,285.4 392.5,285.1 394.0,284.9 395.5,284.8 396.7,284.7 398.1,285.0 399.7,285.6 401.2,286.3 402.7,287.1 404.0,287.8 405.0,288.3ZM403.5,286.0a2.5,2.5 0 1,0 5.0,0a2.5,2.5 0 1,0 -5.0,0ZM404.5,306.0a2.5,2.5 0 1,0 5.0,0a2.5,2.5 0 1,0 -5.0,0ZM407.5,277.8 407.4,278.7 407.3,279.8 407.3,281.0 407.2,282.3 407.1,283.7 407.1,285.2 407.0,286.9 406.9,288.6 406.8,290.5 406.6,292.4 406.4,294.4 406.4,295.6 406.3,296.8 406.2,298.2 406.1,299.6 406.0,301.1 405.9,302.6 405.7,304.2 405.6,305.8 405.5,307.4 405.4,309.0 405.2,310.6 405.1,312.2 404.9,313.8 404.8,315.4 404.7,317.0 404.5,318.5 404.4,319.9 404.3,321.3 404.1,322.7 404.0,323.9 403.8,325.7 403.6,327.4 403.4,329.1 403.2,330.6 403.0,332.1 402.8,333.5 402.5,334.9 402.3,336.3 402.1,337.6 401.9,339.0 401.6,340.3 401.4,341.7 401.1,343.1 400.9,344.5 400.6,345.9 400.4,347.2 400.1,348.5 399.9,349.9 399.6,351.2 399.3,352.6 399.0,354.0 398.6,355.5 398.2,357.1 397.9,358.9 397.5,360.7 397.2,362.1 396.9,363.6 396.6,365.1 396.4,366.6 396.1,368.2 395.8,369.8 395.5,371.4 395.2,373.0 394.9,374.7 394.5,376.3 394.2,377.9 393.9,379.4 393.6,380.9 393.3,382.4 393.0,383.7 392.7,385.0 392.4,386.2 392.1,387.2 391.6,388.9 391.2,390.5 390.7,391.9 390.3,393.2 389.9,394.5 389.4,395.6 389.0,396.7 388.5,397.7 388.0,398.7 387.4,399.7 386.7,400.8 385.9,402.2 385.2,403.5 384.6,404.6 384.0,405.6 383.4,406.4 382.7,407.2 381.9,408.0 380.8,408.8 379.4,409.5 378.4,409.9 377.3,410.3 376.0,410.7 374.7,411.1 373.2,411.4 371.7,411.8 370.2,412.1 368.6,412.3 367.0,412.6 365.4,412.8 363.8,412.9 362.2,413.1 360.7,413.1 359.2,413.2 357.8,413.1 356.5,413.0 355.0,412.8 353.5,412.4 352.0,412.0 350.6,411.6 349.2,411.1 347.8,410.5 346.4,409.9 345.1,409.2 343.7,408.4 342.5,407.7 341.2,406.8 340.0,406.0 338.9,405.1 337.8,404.1 336.9,403.2 335.9,402.1 335.0,401.0 334.2,399.9 333.3,398.6 332.5,397.3 331.7,396.0 330.9,394.7 330.2,393.3 329.6,391.9 328.9,390.6 328.3,389.2 327.8,387.9 327.3,386.5 326.8,385.3 326.4,383.8 326.0,382.3 325.6,380.8 325.3,379.3 325.1,377.7 324.9,376.2 324.8,374.7 324.7,373.2 324.7,371.8 324.8,370.4 324.9,369.1 325.0,367.8 325.2,366.6 325.6,365.1 326.0,363.7 326.5,362.4 327.2,361.1 327.9,359.8 328.7,358.6 329.6,357.5 330.5,356.5 331.6,355.5 332.6,354.6 333.7,353.9 334.9,353.2 336.2,352.6 337.5,352.0 339.0,351.5 340.5,351.0 342.1,350.6 343.6,350.2 345.2,349.9 346.7,349.6 348.2,349.3 349.7,349.1 351.3,349.0 352.8,349.0 354.4,349.0 356.0,349.1 357.6,349.2 359.2,349.4 360.8,349.6 362.4,349.8 364.0,350.0 365.4,350.3 366.8,350.6 368.3,350.9 369.7,351.3 371.2,351.7 372.7,352.1 374.2,352.6 375.7,353.0 377.2,353.4 378.7,353.8 380.2,354.2 381.7,354.5 383.1,354.9 384.5,355.2 385.9,355.6 387.3,355.9 388.7,356.3 390.2,356.6 391.8,356.9 393.4,357.1 395.2,357.4 397.0,357.5 398.4,357.6 399.8,357.7 401.2,357.8 402.7,357.9 404.3,358.0 405.8,358.0 407.5,358.0 409.1,358.1 410.7,358.1 412.4,358.1 414.0,358.0 415.7,358.0 417.3,357.9 418.9,357.8 420.5,357.7 422.0,357.5 423.7,357.3 425.3,357.1 427.0,356.8 428.7,356.5 430.3,356.2 432.0,355.8 433.6,355.4 435.2,355.0 436.8,354.6 438.3,354.3 439.8,353.9 441.3,353.5 442.7,353.2 444.0,352.8 445.3,352.5 447.2,352.1 448.8,351.7 450.2,351.4 451.5,351.1 452.8,350.8 454.2,350.4 455.8,350.0 457.6,349.6 459.8,349.1 460.9,348.8 462.1,348.5 463.3,348.2 464.6,347.9 465.9,347.6 467.2,347.3 468.6,346.9 470.0,346.6 471.4,346.2 472.9,345.9 474.4,345.5 476.0,345.2 477.5,344.8 479.1,344.4 480.7,344.1 482.3,343.7 484.0,343.4 485.6,343.1 487.3,342.7 489.0,342.4 490.3,342.2 491.7,341.9 493.0,341.7 494.4,341.5 495.9,341.2 497.3,341.0 498.8,340.8 500.2,340.5 501.7,340.3 503.3,340.1 504.8,339.8 506.3,339.6 507.9,339.4 509.4,339.1 511.0,338.9 512.5,338.7 514.1,338.5 515.7,338.2 517.2,338.0 518.8,337.8 520.3,337.6 521.9,337.4 523.4,337.2 525.0,336.9 526.5,336.7 528.0,336.5 529.5,336.3 531.1,336.1 532.6,335.9 534.2,335.7 535.8,335.4 537.4,335.2 539.0,335.0 540.7,334.7 542.3,334.5 543.9,334.3 545.5,334.0 547.1,333.8 548.7,333.6 550.3,333.4 551.9,333.2 553.4,333.0 554.9,332.8 556.4,332.6 557.8,332.4 559.3,332.3 560.6,332.1 562.0,332.0 563.3,331.9 564.5,331.8 565.7,331.7 566.8,331.6 568.9,331.6 570.9,331.5 572.6,331.5 574.2,331.5 575.7,331.6 577.1,331.7 578.3,331.8 579.5,332.0 580.7,332.2 581.9,332.5 583.1,332.8 584.3,333.1 585.5,333.5 586.9,334.0 588.3,334.6 589.7,335.3 591.0,336.0 592.4,336.8 593.7,337.6 595.0,338.4 596.2,339.3 597.4,340.2 598.5,341.1 599.5,341.9 600.4,342.8 601.5,343.9 602.6,345.1 603.5,346.4 604.3,347.6 605.1,348.9 605.7,350.1 606.1,351.2 606.4,352.3 606.6,353.1 606.6,354.5 606.3,355.8 605.9,356.9 605.2,358.0 604.2,359.0 602.8,359.9 601.9,360.2 600.6,360.6 599.0,360.9 597.3,361.2 595.4,361.4 593.5,361.6 591.6,361.8 589.9,361.9 588.3,362.1 586.9,362.2 585.9,362.3 586.6,367.1 587.5,366.9 588.8,366.8 590.3,366.6 592.1,366.4 594.0,366.2 596.0,365.9 598.0,365.6 599.9,365.2 601.7,364.8 603.3,364.3 604.8,363.6 606.8,362.3 608.5,360.8 609.7,358.9 610.5,357.0 610.8,354.9 610.8,352.9 610.6,351.3 610.2,349.9 609.6,348.4 608.9,346.9 608.0,345.4 607.0,343.9 605.9,342.4 604.7,341.0 603.4,339.7 602.3,338.7 601.2,337.8 600.0,336.8 598.8,335.8 597.4,334.9 596.0,334.0 594.6,333.1 593.1,332.2 591.6,331.4 590.1,330.7 588.5,330.0 587.0,329.5 585.6,329.0 584.2,328.6 582.9,328.3 581.6,328.0 580.3,327.7 578.9,327.5 577.4,327.4 575.9,327.3 574.3,327.2 572.6,327.2 570.8,327.2 568.8,327.3 566.6,327.4 565.4,327.4 564.2,327.5 562.9,327.6 561.6,327.7 560.2,327.9 558.8,328.0 557.4,328.2 555.9,328.3 554.4,328.5 552.9,328.7 551.3,328.9 549.7,329.1 548.1,329.3 546.5,329.5 544.9,329.8 543.3,330.0 541.7,330.2 540.0,330.5 538.4,330.7 536.8,330.9 535.2,331.2 533.6,331.4 532.0,331.6 530.5,331.8 528.9,332.1 527.4,332.3 525.9,332.5 524.4,332.7 522.8,332.9 521.3,333.1 519.7,333.3 518.2,333.5 516.6,333.8 515.1,334.0 513.5,334.2 511.9,334.4 510.4,334.7 508.8,334.9 507.2,335.1 505.7,335.3 504.1,335.6 502.6,335.8 501.1,336.0 499.6,336.3 498.1,336.5 496.6,336.7 495.2,337.0 493.7,337.2 492.3,337.5 490.9,337.7 489.5,337.9 488.2,338.2 486.5,338.5 484.8,338.8 483.1,339.2 481.4,339.5 479.8,339.9 478.2,340.3 476.6,340.6 475.0,341.0 473.4,341.3 471.9,341.7 470.4,342.1 469.0,342.4 467.6,342.8 466.2,343.1 464.8,343.4 463.5,343.8 462.3,344.1 461.1,344.4 459.9,344.6 458.8,344.9 456.6,345.4 454.7,345.9 453.2,346.3 451.8,346.6 450.5,347.0 449.2,347.3 447.8,347.6 446.2,348.0 444.3,348.5 443.0,348.8 441.7,349.1 440.3,349.5 438.8,349.8 437.3,350.2 435.8,350.6 434.2,351.0 432.7,351.4 431.1,351.8 429.5,352.1 427.9,352.5 426.3,352.8 424.7,353.0 423.1,353.3 421.6,353.5 420.1,353.6 418.6,353.7 417.1,353.8 415.5,353.9 413.9,353.9 412.3,354.0 410.7,354.0 409.1,354.0 407.5,353.9 406.0,353.9 404.4,353.9 402.9,353.8 401.4,353.7 400.0,353.6 398.7,353.6 397.4,353.5 395.6,353.3 394.0,353.1 392.5,352.8 391.0,352.6 389.6,352.3 388.2,352.0 386.9,351.6 385.5,351.3 384.1,350.9 382.6,350.6 381.2,350.2 379.7,349.9 378.3,349.5 376.8,349.1 375.3,348.6 373.8,348.2 372.3,347.8 370.8,347.3 369.3,346.9 367.7,346.6 366.2,346.2 364.6,346.0 362.9,345.7 361.3,345.5 359.6,345.3 357.9,345.1 356.2,345.0 354.5,344.9 352.8,344.9 351.1,344.9 349.3,345.1 347.6,345.3 346.0,345.5 344.4,345.8 342.7,346.2 341.0,346.6 339.4,347.1 337.7,347.6 336.0,348.2 334.5,348.9 332.9,349.6 331.5,350.4 330.2,351.4 328.8,352.4 327.6,353.6 326.5,354.9 325.4,356.2 324.4,357.6 323.6,359.1 322.8,360.7 322.1,362.3 321.6,364.0 321.2,365.8 321.0,367.2 320.8,368.7 320.7,370.2 320.6,371.8 320.6,373.4 320.7,375.0 320.9,376.6 321.1,378.3 321.3,380.0 321.6,381.6 322.0,383.3 322.5,384.9 323.0,386.5 323.4,387.9 324.0,389.3 324.6,390.8 325.2,392.2 325.9,393.7 326.6,395.2 327.3,396.6 328.2,398.1 329.0,399.5 329.9,400.9 330.8,402.2 331.8,403.6 332.8,404.8 333.9,406.0 335.0,407.1 336.2,408.2 337.4,409.3 338.7,410.3 340.0,411.3 341.4,412.2 342.9,413.1 344.3,413.9 345.9,414.7 347.4,415.4 349.0,416.0 350.6,416.6 352.2,417.1 353.9,417.6 355.5,418.0 357.1,418.3 358.7,418.6 360.4,418.9 362.1,419.1 363.8,419.2 365.6,419.3 367.4,419.3 369.2,419.3 370.9,419.3 372.7,419.2 374.4,419.1 376.0,418.9 377.6,418.8 379.1,418.6 380.6,418.3 382.0,418.1 384.3,417.6 386.4,416.9 388.4,416.0 390.3,415.0 391.9,413.9 393.4,412.7 394.7,411.5 396.0,410.4 397.3,409.2 398.3,408.1 399.4,406.9 400.4,405.7 401.5,404.3 402.4,403.0 403.4,401.5 404.4,400.0 405.3,398.3 406.2,396.6 407.1,394.7 407.9,392.8 408.5,391.4 409.0,389.9 409.5,388.4 410.0,386.9 410.5,385.3 410.9,383.7 411.4,382.0 411.9,380.4 412.3,378.7 412.8,377.0 413.2,375.4 413.6,373.8 414.0,372.2 414.4,370.7 414.8,369.2 415.2,367.8 415.6,366.5 415.9,365.3 416.4,363.5 416.9,361.9 417.3,360.3 417.8,358.8 418.2,357.4 418.6,355.9 419.0,354.5 419.4,353.1 419.8,351.6 420.1,350.1 420.5,348.5 420.9,346.9 421.2,345.4 421.5,343.9 421.7,342.5 422.0,341.0 422.2,339.5 422.5,338.0 422.7,336.5 422.9,334.9 423.1,333.3 423.4,331.6 423.6,329.9 423.8,328.0 424.0,326.1 424.2,324.8 424.3,323.4 424.5,321.9 424.6,320.4 424.7,318.8 424.9,317.2 425.0,315.6 425.2,314.0 425.3,312.3 425.5,310.6 425.6,309.0 425.7,307.3 425.8,305.7 426.0,304.1 426.1,302.6 426.2,301.1 426.3,299.6 426.4,298.2 426.5,296.9 426.6,295.6 426.6,293.4 426.7,291.3 426.7,289.3 426.7,287.4 426.7,285.6 426.7,284.0 426.7,282.5 426.6,281.2 426.6,280.0 426.6,279.0 426.5,278.2ZM407.5,278.0a9.5,9.5 0 1,0 19.0,0a9.5,9.5 0 1,0 -19.0,0ZM583.9,364.7a2.4,2.4 0 1,0 4.8,0a2.4,2.4 0 1,0 -4.8,0ZM446.7,312.2 446.7,311.3 446.8,310.4 446.8,309.3 446.8,308.2 446.9,307.0 446.9,305.7 447.0,304.3 447.0,302.9 447.0,301.4 447.1,299.9 447.1,298.3 447.2,296.6 447.3,295.0 447.3,293.2 447.4,291.5 447.5,289.7 447.6,288.0 447.7,286.2 447.8,284.4 447.9,282.6 448.1,280.9 448.2,279.1 448.4,277.4 448.5,276.0 448.6,274.6 448.7,273.2 448.8,271.8 448.9,270.3 449.1,268.7 449.2,267.2 449.3,265.6 449.5,264.0 449.6,262.4 449.8,260.8 449.9,259.1 450.1,257.5 450.2,255.9 450.4,254.2 450.6,252.6 450.7,251.0 450.9,249.3 451.1,247.7 451.3,246.2 451.5,244.6 451.7,243.1 451.9,241.6 452.1,240.2 452.3,238.7 452.5,237.4 452.7,236.0 452.9,234.8 453.1,233.5 453.3,232.4 453.5,231.3 453.9,229.3 454.2,227.4 454.6,225.5 455.0,223.8 455.5,222.2 455.9,220.7 456.3,219.3 456.8,217.9 457.3,216.6 457.7,215.4 458.2,214.2 458.7,213.1 459.1,212.1 459.6,211.1 460.1,210.1 460.5,209.3 461.4,207.8 462.2,206.7 462.9,205.9 463.6,205.3 464.3,204.8 465.1,204.3 466.2,204.0 467.4,203.8 468.4,203.8 469.6,203.9 471.0,204.1 472.4,204.5 473.8,204.9 475.1,205.5 476.5,206.1 477.6,206.8 478.7,207.5 479.5,208.3 480.1,209.2 480.7,210.2 481.3,211.3 481.8,212.6 482.2,214.0 482.6,215.4 482.9,216.9 483.2,218.4 483.4,220.0 483.5,221.5 483.5,223.0 483.5,224.4 483.4,225.8 483.3,227.2 483.1,228.6 482.9,230.0 482.6,231.5 482.2,233.0 481.8,234.4 481.3,235.9 480.7,237.4 480.0,239.0 479.2,240.5 478.6,241.7 477.9,242.8 477.2,244.0 476.4,245.2 475.5,246.5 474.6,247.7 473.7,249.0 472.8,250.2 471.8,251.5 470.7,252.8 469.7,254.0 468.6,255.2 467.6,256.5 466.5,257.6 465.4,258.8 464.3,259.9 463.2,261.0 462.1,262.1 461.0,263.2 459.7,264.2 458.4,265.4 457.0,266.5 455.6,267.5 454.1,268.6 452.7,269.7 451.3,270.7 449.9,271.7 448.6,272.6 447.3,273.5 446.2,274.4 445.1,275.1 444.1,275.8 443.2,276.5 442.5,277.0 445.5,281.0 446.2,280.5 447.0,279.9 448.0,279.2 449.0,278.4 450.2,277.6 451.5,276.7 452.8,275.8 454.2,274.8 455.7,273.7 457.1,272.6 458.6,271.5 460.1,270.4 461.5,269.2 462.9,268.1 464.3,266.9 465.6,265.7 466.8,264.6 467.9,263.4 469.0,262.2 470.2,261.0 471.3,259.8 472.4,258.5 473.5,257.2 474.6,255.9 475.7,254.6 476.7,253.3 477.7,252.0 478.7,250.6 479.6,249.3 480.5,248.0 481.4,246.7 482.2,245.4 482.9,244.1 483.6,242.9 484.5,241.1 485.3,239.4 485.9,237.7 486.5,236.0 487.0,234.3 487.4,232.6 487.8,231.0 488.1,229.3 488.3,227.7 488.4,226.1 488.5,224.5 488.5,223.0 488.5,221.3 488.3,219.5 488.1,217.8 487.9,216.0 487.5,214.3 487.0,212.6 486.5,210.9 485.9,209.3 485.1,207.8 484.3,206.4 483.3,205.1 482.1,203.7 480.7,202.5 479.1,201.5 477.5,200.6 475.8,199.8 474.0,199.1 472.3,198.6 470.6,198.2 469.0,197.9 467.4,197.8 465.7,197.7 463.9,197.7 462.0,198.0 460.2,198.6 458.3,199.5 456.5,200.8 454.8,202.3 453.3,204.1 452.4,205.1 451.7,206.1 450.9,207.2 450.1,208.4 449.3,209.6 448.6,210.9 447.8,212.2 447.0,213.7 446.3,215.2 445.5,216.9 444.8,218.6 444.1,220.4 443.4,222.3 442.7,224.3 442.1,226.5 441.5,228.7 441.2,229.9 440.9,231.2 440.7,232.5 440.4,233.9 440.1,235.3 439.9,236.8 439.6,238.3 439.4,239.8 439.2,241.3 438.9,242.9 438.7,244.5 438.5,246.1 438.2,247.8 438.0,249.4 437.8,251.1 437.6,252.8 437.4,254.4 437.2,256.1 437.0,257.8 436.8,259.4 436.6,261.1 436.4,262.7 436.2,264.3 436.1,265.9 435.9,267.5 435.7,269.0 435.6,270.6 435.4,272.0 435.3,273.5 435.1,274.9 435.0,276.2 434.9,278.1 434.8,279.9 434.7,281.8 434.6,283.7 434.5,285.6 434.5,287.4 434.4,289.3 434.4,291.1 434.3,292.9 434.3,294.6 434.3,296.3 434.3,298.0 434.3,299.7 434.3,301.2 434.3,302.7 434.3,304.2 434.3,305.5 434.3,306.8 434.3,308.0 434.3,309.1 434.3,310.1 434.3,311.0 434.3,311.8ZM434.3,312.0a6.2,6.2 0 1,0 12.3,0a6.2,6.2 0 1,0 -12.3,0ZM441.5,279.0a2.5,2.5 0 1,0 5.0,0a2.5,2.5 0 1,0 -5.0,0ZM444.8,285.6 445.7,285.3 446.6,284.8 447.8,284.3 449.1,283.8 450.5,283.1 451.9,282.5 453.5,281.8 455.1,281.1 456.7,280.4 458.3,279.7 460.0,279.0 461.5,278.3 463.1,277.7 464.5,277.2 465.9,276.7 467.6,276.2 469.3,275.7 471.0,275.1 472.8,274.6 474.5,274.1 476.1,273.7 477.6,273.3 479.0,273.1 480.3,272.9 481.4,272.9 482.2,273.0 482.7,273.2 483.3,273.6 483.7,274.2 484.1,274.9 484.4,275.7 484.7,276.7 485.0,278.0 485.2,279.4 485.4,280.9 485.5,282.5 485.6,283.4 485.7,284.4 485.7,285.6 485.7,287.0 485.6,288.4 485.5,289.9 485.4,291.5 485.3,293.1 485.1,294.7 485.0,296.3 484.8,297.9 484.7,299.5 484.6,301.0 484.5,302.4 484.6,304.2 484.6,305.9 484.6,307.6 484.6,309.2 484.6,310.8 484.7,312.5 484.8,314.2 485.2,315.9 485.7,317.7 486.8,319.8 488.2,321.8 489.9,323.6 491.9,325.2 494.2,326.3 496.9,326.5 499.2,326.0 501.0,325.0 502.5,323.8 504.0,322.4 505.4,320.9 506.7,319.2 508.0,317.6 508.9,316.2 509.9,314.8 510.9,313.1 511.8,311.4 512.8,309.7 513.6,308.1 514.4,306.5 515.1,305.2 515.7,304.0 516.2,303.2 511.8,300.8 511.3,301.7 510.7,302.9 510.0,304.2 509.2,305.8 508.4,307.4 507.5,309.0 506.6,310.6 505.7,312.1 504.8,313.4 504.0,314.4 502.8,315.7 501.4,317.0 500.1,318.0 498.9,318.9 497.8,319.4 497.1,319.6 497.1,319.5 497.3,319.2 497.3,318.7 497.0,317.9 496.7,316.8 496.4,315.6 496.3,314.3 496.3,313.8 496.2,313.0 496.2,312.1 496.3,310.9 496.4,309.6 496.5,308.1 496.6,306.4 496.8,304.5 496.9,302.6 496.8,301.4 496.9,300.1 496.9,298.7 497.0,297.1 497.0,295.5 497.1,293.9 497.2,292.2 497.2,290.4 497.2,288.7 497.2,287.0 497.1,285.2 497.0,283.5 496.8,281.9 496.5,280.3 495.8,278.3 495.0,276.4 494.1,274.5 493.1,272.7 491.9,270.9 490.4,269.4 488.7,268.0 486.8,267.0 484.7,266.4 482.9,266.2 481.1,266.2 479.5,266.5 477.8,266.9 476.1,267.3 474.3,267.9 472.6,268.6 470.9,269.2 469.2,269.9 467.5,270.7 465.8,271.4 464.1,272.1 462.7,272.6 461.2,273.2 459.7,273.9 458.1,274.6 456.4,275.4 454.8,276.2 453.2,277.0 451.6,277.7 450.1,278.5 448.6,279.2 447.2,279.9 446.0,280.5 444.9,281.1 443.9,281.6 443.2,282.0ZM442.0,283.8a2.0,2.0 0 1,0 4.0,0a2.0,2.0 0 1,0 -4.0,0ZM511.5,302.0a2.5,2.5 0 1,0 5.0,0a2.5,2.5 0 1,0 -5.0,0ZM529.8,235.9 529.8,236.7 529.7,237.7 529.7,238.7 529.6,239.9 529.6,241.1 529.5,242.5 529.4,243.9 529.4,245.4 529.3,247.0 529.3,248.7 529.2,250.4 529.1,252.2 529.1,254.1 529.0,256.0 528.9,257.9 528.8,259.9 528.8,261.1 528.8,262.5 528.7,263.9 528.7,265.3 528.7,266.9 528.6,268.5 528.6,270.1 528.5,271.7 528.5,273.4 528.4,275.1 528.4,276.9 528.3,278.6 528.3,280.3 528.2,282.1 528.2,283.8 528.1,285.5 528.1,287.1 528.1,288.8 528.0,290.4 528.0,291.9 527.9,293.4 527.9,294.9 527.9,296.3 527.9,297.6 527.9,298.8 527.8,299.9 527.8,302.4 527.8,304.6 527.8,306.5 527.7,308.3 527.7,309.9 527.7,311.6 527.9,313.2 528.2,315.0 528.7,316.7 529.6,318.6 531.2,320.7 533.3,322.6 535.5,324.0 537.9,325.0 540.3,325.7 542.7,325.9 545.1,325.4 547.1,324.6 548.7,323.5 550.0,322.1 551.1,320.6 552.2,319.0 553.2,317.2 554.2,315.3 555.2,313.2 555.8,312.1 556.5,310.8 557.1,309.3 557.8,307.8 558.5,306.2 559.2,304.6 559.9,302.9 560.6,301.2 561.3,299.6 562.0,298.0 562.6,296.4 563.2,295.0 563.7,293.7 564.2,292.5 564.6,291.6 564.9,290.8 560.3,288.8 560.0,289.6 559.5,290.7 559.1,291.8 558.5,293.1 558.0,294.6 557.3,296.1 556.7,297.7 556.0,299.3 555.3,301.0 554.6,302.6 553.9,304.2 553.3,305.8 552.6,307.2 552.0,308.6 551.4,309.8 550.8,310.8 549.6,312.6 548.5,314.3 547.4,315.7 546.4,316.9 545.5,317.8 544.7,318.3 544.1,318.6 543.9,318.6 543.4,318.3 542.7,317.8 541.8,317.1 540.9,316.3 540.1,315.3 539.7,314.3 539.4,313.4 539.4,313.1 539.4,312.7 539.3,312.1 539.4,311.4 539.4,310.3 539.6,308.9 539.7,307.2 539.9,305.2 540.0,302.8 540.2,300.1 540.2,299.0 540.2,297.8 540.2,296.5 540.2,295.1 540.3,293.7 540.3,292.2 540.3,290.7 540.4,289.1 540.4,287.5 540.5,285.8 540.5,284.1 540.6,282.4 540.6,280.7 540.7,278.9 540.7,277.2 540.7,275.5 540.8,273.8 540.8,272.1 540.9,270.4 540.9,268.8 541.0,267.2 541.0,265.7 541.1,264.2 541.1,262.8 541.1,261.4 541.2,260.1 541.2,258.1 541.2,256.2 541.2,254.3 541.2,252.4 541.2,250.6 541.2,248.9 541.2,247.2 541.1,245.6 541.1,244.1 541.1,242.6 541.1,241.3 541.1,240.0 541.1,238.9 541.0,237.8 541.0,236.9 541.0,236.1ZM529.8,236.0a5.6,5.6 0 1,0 11.2,0a5.6,5.6 0 1,0 -11.2,0ZM560.1,289.8a2.5,2.5 0 1,0 5.0,0a2.5,2.5 0 1,0 -5.0,0ZM509.0,278.3 509.7,277.2 510.6,275.8 511.6,274.2 512.7,272.8 513.6,271.9 514.7,271.1 515.4,270.7 516.5,270.4 518.6,270.3 519.5,270.3 520.7,270.4 521.9,270.5 523.3,270.7 524.8,270.9 526.3,271.1 527.9,271.3 529.6,271.6 531.2,271.9 532.9,272.2 534.6,272.5 536.0,272.7 537.6,273.1 539.2,273.4 541.0,273.8 542.8,274.2 544.5,274.6 546.3,275.1 548.0,275.5 549.5,275.8 551.0,276.2 552.3,276.5 553.4,276.8 554.3,277.0 555.5,271.6 554.6,271.4 553.5,271.2 552.2,270.9 550.7,270.6 549.1,270.3 547.4,269.9 545.7,269.5 543.9,269.2 542.1,268.8 540.3,268.4 538.6,268.1 536.9,267.8 535.4,267.5 533.8,267.2 532.1,266.9 530.4,266.7 528.7,266.4 527.1,266.1 525.5,265.9 523.9,265.7 522.4,265.5 521.0,265.4 519.7,265.3 518.4,265.3 515.8,265.5 513.6,266.0 511.9,266.9 510.4,268.1 508.9,269.6 507.6,271.3 506.4,273.0 505.5,274.5 504.8,275.5ZM504.4,276.9a2.5,2.5 0 1,0 5.0,0a2.5,2.5 0 1,0 -5.0,0ZM552.1,274.3a2.8,2.8 0 1,0 5.5,0a2.8,2.8 0 1,0 -5.5,0ZM567.5,280.4 567.5,281.3 567.4,282.4 567.3,283.7 567.2,285.3 567.1,286.9 567.0,288.7 566.9,290.5 566.8,292.4 566.8,294.3 566.7,296.1 566.7,297.9 566.7,299.6 566.8,301.4 566.9,303.1 567.1,304.9 567.2,306.7 567.4,308.5 567.6,310.3 567.8,312.0 568.1,313.7 568.4,315.3 568.7,316.8 569.2,318.5 570.5,321.0 572.1,323.4 574.1,325.3 576.5,326.7 578.8,327.3 581.0,327.4 583.4,327.1 585.9,326.0 588.0,324.0 589.7,321.4 590.4,320.2 590.9,318.9 591.5,317.6 592.1,316.1 592.6,314.6 593.2,313.0 593.8,311.3 594.3,309.6 594.9,308.0 595.4,306.3 596.0,304.6 596.5,303.1 597.1,301.6 597.6,300.2 598.1,298.9 598.8,297.2 599.6,295.6 600.3,294.0 601.0,292.4 601.7,290.9 602.4,289.5 603.1,288.1 603.8,286.9 604.4,285.7 605.1,284.7 605.6,283.9 606.9,282.5 608.0,281.7 609.2,281.2 610.3,280.7 611.3,280.3 608.3,275.1 607.6,275.6 606.5,276.3 604.9,277.3 603.2,278.9 601.6,280.9 600.8,282.0 600.1,283.2 599.4,284.5 598.7,285.8 598.0,287.2 597.2,288.7 596.5,290.3 595.8,291.9 595.0,293.5 594.3,295.2 593.5,296.9 592.9,298.2 592.3,299.7 591.7,301.2 591.0,302.8 590.4,304.5 589.8,306.2 589.2,307.8 588.6,309.4 587.9,311.0 587.3,312.6 586.7,314.0 586.2,315.3 585.6,316.4 585.1,317.4 584.7,318.0 583.3,319.4 582.5,319.7 582.1,319.4 581.9,319.1 581.6,318.7 581.7,318.3 582.0,318.0 582.1,317.4 582.1,316.4 582.0,314.7 582.0,314.1 581.8,313.0 581.7,311.8 581.6,310.5 581.5,309.0 581.4,307.4 581.3,305.8 581.3,304.2 581.3,302.6 581.3,300.9 581.3,299.4 581.3,297.9 581.3,296.4 581.3,294.7 581.4,293.0 581.5,291.2 581.6,289.5 581.7,287.8 581.8,286.2 581.9,284.7 582.0,283.3 582.0,282.1 582.1,281.2ZM567.5,280.8a7.3,7.3 0 1,0 14.6,0a7.3,7.3 0 1,0 -14.6,0ZM606.8,277.7a3.0,3.0 0 1,0 6.0,0a3.0,3.0 0 1,0 -6.0,0ZM611.4,279.2 611.4,280.1 611.3,281.2 611.3,282.5 611.3,284.0 611.2,285.6 611.2,287.3 611.2,289.1 611.2,291.0 611.1,292.8 611.1,294.7 611.1,296.5 611.1,298.3 611.1,299.9 611.3,301.6 611.4,303.3 611.6,305.1 611.8,307.0 612.0,308.8 612.2,310.6 612.4,312.3 612.6,314.0 612.7,315.6 612.9,317.0 613.1,318.3 613.2,319.4 613.3,320.2 626.7,319.2 626.7,318.2 626.6,317.1 626.5,315.8 626.5,314.4 626.4,312.8 626.3,311.2 626.2,309.4 626.1,307.6 626.0,305.8 625.9,304.1 625.8,302.3 625.7,300.6 625.7,299.1 625.5,297.5 625.3,295.8 625.2,294.1 625.0,292.3 624.8,290.4 624.7,288.6 624.5,286.9 624.4,285.2 624.3,283.6 624.1,282.1 624.0,280.8 623.9,279.7 623.8,278.8ZM611.4,279.0a6.2,6.2 0 1,0 12.3,0a6.2,6.2 0 1,0 -12.3,0ZM613.3,319.7a6.7,6.7 0 1,0 13.4,0a6.7,6.7 0 1,0 -13.4,0ZM627.1,292.8 627.6,292.0 628.4,291.0 629.2,289.7 630.1,288.4 631.0,286.9 632.1,285.4 633.1,283.8 634.2,282.3 635.2,281.0 636.2,279.7 637.2,278.7 637.9,278.0 639.5,277.1 640.9,276.6 642.3,276.2 643.6,276.1 644.8,276.2 645.9,276.4 646.9,276.7 647.9,277.1 648.9,277.6 649.7,278.2 650.2,278.8 650.4,279.4 650.4,279.8 650.4,280.5 650.3,280.5 650.4,281.1 650.4,282.0 650.4,283.1 650.4,284.5 650.3,286.0 650.2,287.6 650.1,289.4 650.1,291.2 650.0,293.1 650.0,295.0 650.0,296.9 650.2,298.5 650.4,300.1 650.6,301.8 650.7,303.5 650.9,305.2 651.1,307.0 651.4,308.7 651.6,310.4 651.8,312.1 652.1,313.7 652.4,315.3 652.7,316.8 653.1,318.3 654.4,320.7 655.8,322.9 657.3,324.8 658.9,326.3 660.7,327.4 662.9,328.2 665.7,328.6 668.5,327.9 670.8,326.4 672.5,324.3 673.4,322.6 674.1,320.7 674.6,318.8 675.1,316.8 675.5,315.0 675.8,313.5 676.0,312.5 671.2,311.3 670.9,312.4 670.6,314.0 670.2,315.7 669.8,317.5 669.3,319.3 668.8,320.6 668.5,321.3 667.5,322.0 666.5,322.3 665.9,322.2 665.7,321.8 666.1,321.3 666.1,320.6 666.1,319.6 666.1,318.4 666.1,316.9 666.1,314.9 666.0,314.1 665.8,313.0 665.6,311.7 665.5,310.3 665.4,308.8 665.2,307.3 665.1,305.6 665.0,304.0 664.9,302.3 664.8,300.6 664.7,299.0 664.6,297.4 664.6,295.9 664.4,294.5 664.4,293.0 664.3,291.4 664.3,289.8 664.3,288.0 664.3,286.3 664.3,284.5 664.2,282.7 664.1,280.9 663.8,279.0 663.4,277.1 662.6,274.9 660.9,272.4 658.6,270.4 656.2,269.0 653.8,268.2 651.6,267.8 649.5,267.6 647.5,267.7 645.6,268.0 643.7,268.4 641.7,269.1 639.8,270.0 638.0,271.2 636.3,272.6 634.7,274.2 633.6,275.4 632.5,276.7 631.4,278.1 630.4,279.7 629.3,281.3 628.3,282.9 627.3,284.5 626.4,286.1 625.6,287.5 624.8,288.8 624.2,289.8 623.7,290.6ZM623.4,291.7a2.0,2.0 0 1,0 4.0,0a2.0,2.0 0 1,0 -4.0,0ZM671.1,311.9a2.5,2.5 0 1,0 5.0,0a2.5,2.5 0 1,0 -5.0,0ZM732.9,270.5 732.1,270.1 731.1,269.8 729.9,269.3 728.5,268.8 727.0,268.3 725.3,267.7 723.6,267.1 721.8,266.6 719.9,266.0 718.1,265.5 716.2,265.0 714.3,264.5 712.5,264.2 710.7,263.9 709.0,263.7 707.0,263.5 705.2,263.4 703.2,263.4 701.3,263.4 699.3,263.5 697.3,263.7 695.3,264.1 693.3,264.5 691.3,265.2 689.3,266.1 687.3,267.2 685.5,268.6 684.0,270.0 682.6,271.5 681.4,273.0 680.3,274.7 679.3,276.4 678.4,278.2 677.6,280.1 676.8,282.0 676.2,284.0 675.6,286.0 675.2,288.0 674.8,290.1 674.6,292.2 674.5,294.3 674.9,296.4 675.4,298.4 676.0,300.3 676.7,302.3 677.5,304.2 678.3,306.0 679.2,307.9 680.1,309.7 681.1,311.4 682.2,313.1 683.3,314.7 684.4,316.2 685.5,317.6 686.7,319.0 688.0,320.3 689.8,321.8 691.7,323.2 693.7,324.2 695.7,325.1 697.7,325.8 699.7,326.2 701.6,326.6 703.5,326.7 705.3,326.8 707.0,326.8 708.8,326.7 710.8,326.5 712.9,326.1 714.8,325.5 716.7,324.7 718.5,323.9 720.2,323.1 721.8,322.2 723.3,321.3 724.6,320.5 725.9,319.7 727.9,318.4 729.7,317.0 731.2,315.6 732.4,314.3 733.3,313.3 734.0,312.5 730.6,308.9 729.7,309.6 728.7,310.5 727.5,311.5 726.2,312.6 724.8,313.5 723.1,314.3 721.9,314.7 720.5,315.1 719.0,315.6 717.4,316.0 715.8,316.3 714.3,316.6 712.8,316.8 711.4,316.9 710.2,316.9 709.0,316.7 707.9,316.4 706.7,316.0 705.5,315.6 704.4,315.2 703.3,314.7 702.3,314.1 701.4,313.5 700.6,312.8 699.9,312.1 699.4,311.4 698.8,310.5 698.4,309.8 697.9,308.9 697.4,307.8 696.8,306.7 696.3,305.4 695.8,304.1 695.3,302.7 694.8,301.3 694.4,299.9 694.0,298.5 693.8,297.1 693.6,295.9 693.5,294.7 693.4,293.7 693.5,292.9 693.3,291.9 693.1,290.9 692.9,289.7 692.9,288.5 692.9,287.3 693.0,286.0 693.1,284.8 693.3,283.6 693.5,282.4 693.8,281.3 694.1,280.3 694.4,279.5 694.7,278.7 694.9,278.2 695.3,277.7 695.8,277.2 696.5,276.6 697.4,276.1 698.4,275.7 699.6,275.3 701.0,274.9 702.4,274.6 704.0,274.3 705.6,274.1 707.2,273.9 708.8,273.7 710.1,273.6 711.4,273.6 713.0,273.7 714.6,273.8 716.4,274.0 718.1,274.3 719.9,274.5 721.7,274.8 723.5,275.1 725.1,275.4 726.7,275.7 728.2,275.9 729.5,276.1 730.7,276.3 731.7,276.3ZM729.3,273.4a3.0,3.0 0 1,0 6.0,0a3.0,3.0 0 1,0 -6.0,0ZM729.8,310.7a2.5,2.5 0 1,0 5.0,0a2.5,2.5 0 1,0 -5.0,0ZM734.3,269.5 734.2,270.4 734.1,271.3 734.0,272.4 733.9,273.6 733.8,274.9 733.7,276.3 733.6,277.8 733.5,279.3 733.3,281.0 733.2,282.7 733.1,284.5 732.9,286.3 732.8,288.2 732.7,290.1 732.5,292.1 732.4,294.1 732.2,296.1 732.1,297.4 732.0,298.6 731.9,300.0 731.8,301.3 731.7,302.7 731.5,304.1 731.4,305.5 731.3,307.0 731.2,308.5 731.0,310.0 730.9,311.5 730.8,313.0 730.6,314.6 730.5,316.2 730.4,317.8 730.2,319.4 730.1,321.1 730.0,322.7 729.9,324.4 729.7,326.1 729.6,327.7 729.5,329.4 729.4,331.1 729.3,332.8 729.2,334.5 729.1,336.2 729.0,337.9 728.9,339.7 728.9,341.1 728.8,342.6 728.8,344.1 728.8,345.7 728.7,347.3 728.7,348.8 728.7,350.5 728.6,352.1 728.6,353.7 728.6,355.4 728.6,357.0 728.6,358.7 728.6,360.3 728.6,362.0 728.5,363.6 728.5,365.3 728.5,366.9 728.5,368.6 728.5,370.2 728.5,371.8 728.5,373.4 728.5,374.9 728.5,376.4 728.5,378.0 728.5,379.4 728.5,380.9 728.5,382.3 728.5,383.7 728.5,385.0 728.5,386.3 728.4,387.5 728.4,388.7 728.4,389.9 728.4,392.2 728.4,394.3 728.5,396.3 728.5,398.2 728.5,399.9 728.6,401.5 728.6,403.0 728.6,404.5 728.6,405.8 728.6,407.1 728.6,408.4 728.6,409.5 728.6,410.7 728.6,411.9 728.6,413.0 728.5,414.3 728.5,416.1 728.5,417.9 728.5,419.6 728.6,421.1 728.6,422.5 728.5,423.8 728.5,424.9 728.4,425.9 728.3,426.9 728.2,427.7 728.0,428.5 727.7,429.4 727.4,430.4 726.9,431.4 726.2,432.4 725.5,433.5 724.7,434.5 723.9,435.5 723.0,436.4 722.1,437.3 721.2,438.2 720.2,438.9 719.1,439.7 717.8,440.4 716.4,441.0 715.0,441.6 713.5,442.2 712.1,442.7 710.8,443.1 709.6,443.5 708.1,443.9 707.3,444.0 706.4,444.1 704.8,443.9 702.4,443.5 701.2,443.4 699.9,443.2 698.5,443.1 697.0,442.9 695.5,442.7 693.9,442.5 692.3,442.3 690.7,442.1 689.1,441.8 687.5,441.5 686.0,441.1 684.6,440.7 683.2,440.3 682.0,439.8 680.6,439.2 679.2,438.5 677.9,437.8 676.6,437.1 675.3,436.4 674.1,435.6 673.0,434.7 671.9,433.8 670.8,432.9 669.9,431.9 669.0,430.8 668.2,429.6 667.5,428.2 667.0,427.2 666.6,426.1 666.1,424.9 665.7,423.6 665.4,422.2 665.1,420.8 664.8,419.3 664.5,417.8 664.3,416.2 664.1,414.7 663.9,413.1 663.8,411.5 663.7,409.9 663.6,408.3 663.5,406.8 663.5,405.3 663.5,403.8 663.5,402.3 663.5,400.8 663.6,399.2 663.8,397.6 663.9,396.0 664.1,394.4 664.3,392.8 664.6,391.2 664.9,389.6 665.2,388.1 665.6,386.6 666.0,385.1 666.4,383.6 666.9,382.2 667.4,380.9 667.9,379.6 668.5,378.3 669.2,376.9 669.9,375.5 670.8,374.2 671.6,372.9 672.5,371.6 673.5,370.4 674.5,369.2 675.5,368.1 676.5,367.0 677.6,366.0 678.7,365.0 679.9,364.1 681.0,363.3 682.2,362.5 683.4,361.9 684.6,361.3 685.8,360.7 687.1,360.3 688.4,359.9 689.8,359.5 691.2,359.2 692.6,358.9 694.1,358.7 695.6,358.4 697.2,358.2 698.8,358.1 700.4,357.9 702.1,357.7 703.4,357.6 704.7,357.5 706.1,357.4 707.4,357.4 708.8,357.4 710.3,357.4 711.7,357.4 713.2,357.5 714.7,357.5 716.2,357.6 717.7,357.6 719.3,357.7 720.9,357.7 722.5,357.8 724.1,357.8 725.7,357.8 727.3,357.8 729.0,357.7 730.5,357.6 731.9,357.5 733.4,357.5 734.9,357.4 736.3,357.2 737.8,357.1 739.3,357.0 740.8,356.9 742.3,356.7 743.8,356.6 745.3,356.4 746.9,356.3 748.5,356.1 750.1,356.0 751.7,355.8 753.3,355.7 755.0,355.5 756.7,355.4 758.4,355.2 760.2,355.1 761.5,355.0 763.0,354.9 764.5,354.7 766.0,354.6 767.6,354.5 769.3,354.3 771.0,354.2 772.7,354.1 774.4,353.9 776.2,353.8 777.9,353.6 779.7,353.5 781.4,353.4 783.2,353.2 784.9,353.1 786.5,352.9 788.2,352.8 789.7,352.7 791.3,352.6 792.7,352.4 794.1,352.3 795.4,352.2 796.7,352.1 797.8,352.0 798.8,351.9 799.7,351.9 800.6,351.8 800.2,347.8 799.4,347.9 798.5,347.9 797.5,348.0 796.3,348.1 795.1,348.2 793.8,348.3 792.4,348.4 790.9,348.5 789.4,348.6 787.8,348.7 786.2,348.9 784.5,349.0 782.8,349.1 781.1,349.3 779.4,349.4 777.6,349.5 775.9,349.7 774.1,349.8 772.4,349.9 770.7,350.1 769.0,350.2 767.3,350.3 765.7,350.4 764.1,350.6 762.6,350.7 761.2,350.8 759.8,350.9 758.1,351.1 756.3,351.2 754.6,351.4 752.9,351.5 751.3,351.7 749.7,351.8 748.1,352.0 746.5,352.1 744.9,352.3 743.4,352.4 741.9,352.5 740.4,352.7 738.9,352.8 737.5,352.9 736.0,353.1 734.6,353.2 733.1,353.3 731.7,353.4 730.2,353.4 728.8,353.5 727.2,353.6 725.7,353.6 724.1,353.6 722.5,353.6 721.0,353.5 719.4,353.5 717.9,353.5 716.4,353.4 714.8,353.3 713.3,353.3 711.8,353.2 710.3,353.2 708.8,353.2 707.4,353.2 705.9,353.2 704.5,353.3 703.1,353.4 701.7,353.5 700.0,353.7 698.3,353.9 696.7,354.1 695.0,354.3 693.4,354.5 691.8,354.8 690.3,355.1 688.7,355.4 687.2,355.8 685.7,356.3 684.3,356.8 682.8,357.5 681.4,358.2 680.0,359.0 678.7,359.8 677.4,360.8 676.1,361.8 674.8,362.9 673.6,364.0 672.4,365.2 671.3,366.5 670.2,367.8 669.1,369.1 668.1,370.5 667.2,372.0 666.3,373.4 665.5,375.0 664.7,376.5 664.1,377.9 663.5,379.3 662.9,380.8 662.4,382.4 662.0,383.9 661.5,385.5 661.1,387.1 660.8,388.8 660.5,390.5 660.2,392.1 659.9,393.8 659.7,395.5 659.6,397.2 659.4,398.9 659.4,400.6 659.3,402.3 659.3,403.8 659.3,405.3 659.3,406.9 659.4,408.5 659.5,410.2 659.6,411.8 659.7,413.5 659.9,415.2 660.1,416.8 660.4,418.5 660.6,420.1 661.0,421.7 661.3,423.2 661.7,424.7 662.1,426.2 662.6,427.6 663.1,428.9 663.7,430.2 664.6,431.8 665.6,433.2 666.7,434.6 667.9,435.9 669.1,437.0 670.4,438.1 671.8,439.0 673.1,439.9 674.5,440.8 676.0,441.5 677.4,442.3 678.8,442.9 680.2,443.6 681.7,444.3 683.2,444.8 684.9,445.3 686.5,445.8 688.2,446.2 689.9,446.5 691.6,446.8 693.3,447.1 694.9,447.4 696.4,447.6 697.9,447.8 699.2,448.0 700.4,448.3 701.4,448.5 703.6,449.1 705.1,449.7 706.6,450.2 708.3,450.5 710.4,450.5 711.9,450.5 713.4,450.5 715.2,450.4 717.0,450.3 718.9,450.0 720.8,449.7 722.9,449.2 724.9,448.6 726.8,447.8 728.5,447.1 730.0,446.3 731.7,445.3 733.3,444.3 734.8,443.2 736.4,441.9 737.9,440.5 739.4,439.0 740.7,437.3 742.0,435.5 743.0,433.7 743.8,431.9 744.5,430.1 745.1,428.3 745.5,426.5 745.9,424.7 746.3,422.9 746.6,421.1 746.9,419.4 747.2,417.6 747.5,415.7 747.6,414.4 747.8,413.0 747.9,411.6 748.0,410.2 748.0,408.9 748.1,407.5 748.2,406.1 748.2,404.6 748.3,403.2 748.3,401.6 748.3,400.0 748.4,398.2 748.4,396.4 748.5,394.5 748.5,392.4 748.6,390.1 748.6,389.0 748.6,387.7 748.6,386.4 748.6,385.1 748.6,383.8 748.6,382.4 748.6,381.0 748.7,379.5 748.7,378.0 748.7,376.5 748.7,375.0 748.7,373.4 748.7,371.8 748.7,370.2 748.7,368.6 748.7,367.0 748.7,365.4 748.7,363.7 748.7,362.1 748.7,360.5 748.7,358.8 748.7,357.2 748.8,355.6 748.8,354.0 748.8,352.3 748.8,350.8 748.9,349.2 748.9,347.7 748.9,346.1 748.9,344.6 749.0,343.2 749.0,341.7 749.1,340.3 749.1,338.7 749.2,337.1 749.2,335.4 749.3,333.8 749.3,332.2 749.4,330.5 749.5,328.9 749.5,327.3 749.6,325.6 749.7,324.0 749.8,322.4 749.9,320.8 750.0,319.2 750.1,317.6 750.2,316.0 750.2,314.4 750.3,312.9 750.4,311.4 750.5,309.9 750.6,308.4 750.7,306.9 750.8,305.4 750.9,304.0 750.9,302.6 751.0,301.2 751.1,299.9 751.1,298.6 751.2,297.3 751.3,295.2 751.4,293.2 751.5,291.2 751.5,289.2 751.6,287.3 751.7,285.5 751.8,283.7 751.8,282.0 751.9,280.3 751.9,278.8 752.0,277.3 752.0,275.9 752.1,274.6 752.1,273.4 752.1,272.3 752.1,271.3 752.1,270.5ZM734.2,270.0a9.0,9.0 0 1,0 17.9,0a9.0,9.0 0 1,0 -17.9,0ZM798.4,349.8a2.0,2.0 0 1,0 4.0,0a2.0,2.0 0 1,0 -4.0,0ZM348.9,269.5a4.8,4.8 0 1,0 9.6,0a4.8,4.8 0 1,0 -9.6,0ZM571.4,258.7a7,7 0 1,0 14,0a7,7 0 1,0 -14,0Z" fill="#fde0ca"/><circle cx="278.8" cy="116.2" r="18.6" fill="#f88b26"/><circle cx="523.5" cy="130.8" r="18.7" fill="#f88b26"/><circle cx="752.6" cy="154.4" r="18.7" fill="#f88b26"/><circle cx="260.3" cy="498.2" r="18.9" fill="#f88b26"/><circle cx="572" cy="483.9" r="18.5" fill="#f88b26"/><circle cx="198" cy="319.5" r="18" fill="#f88b26"/><circle cx="400.2" cy="530" r="18.3" fill="#f88b26" clip-path="url(#c5)"/><circle cx="788" cy="522" r="19" fill="#f88b26" clip-path="url(#c7)"/><path d="M276.4,244.2 275.4,244.8 274.1,245.6 272.5,246.4 270.8,247.2 269.1,248.0 267.4,248.6 266.1,248.8 264.6,249.1 263.1,249.3 261.5,249.4 259.9,249.6 258.2,249.6 256.6,249.7 255.1,249.7 253.5,249.6 251.9,249.5 250.4,249.4 248.9,249.3 247.4,249.1 246.1,248.8 244.8,248.4 243.6,248.0 242.3,247.3 241.1,246.6 239.8,245.8 238.6,244.9 237.5,243.9 236.5,242.9 235.7,241.9 235.1,240.9 234.5,239.8 234.1,238.5 233.7,237.1 233.4,235.7 233.3,234.3 233.3,232.9 233.5,231.8 233.7,230.8 234.2,229.7 234.9,228.6 235.7,227.5 236.7,226.6 237.9,225.7 239.2,224.9 240.8,224.2 241.8,223.9 242.9,223.6 244.1,223.4 245.3,223.2 246.7,223.0 248.1,222.9 249.6,222.8 251.1,222.8 252.7,222.7 254.4,222.7 256.1,222.8 257.9,222.8 259.2,222.9 260.5,223.0 261.9,223.1 263.3,223.3 264.8,223.5 266.3,223.7 267.9,223.9 269.5,224.1 271.1,224.3 272.7,224.6 274.2,224.8 275.8,225.0 277.4,225.3 278.9,225.5 280.4,225.7 281.9,225.9 283.3,226.1 285.0,226.3 286.7,226.5 288.4,226.8 290.2,227.1 291.9,227.4 293.6,227.6 295.3,227.9 297.0,228.1 298.5,228.3 300.0,228.5 301.5,228.6 302.8,228.6 304.0,228.6 305.8,228.2 308.4,226.0 308.5,222.7 308.0,220.7 308.1,219.8 308.7,219.2 309.8,218.1 311.1,217.1 312.3,216.3 313.2,216.0 314.4,216.0 316.1,216.3 317.6,216.8 318.7,217.4 318.9,217.6 318.9,217.9 318.6,219.1 317.9,220.7 316.9,222.2 316.1,223.2 315.2,223.7 313.7,224.1 311.9,224.4 310.2,224.7 308.9,224.8 309.9,229.8 311.0,229.5 312.8,229.2 314.9,228.7 317.1,227.9 319.1,226.6 320.6,224.9 321.8,222.8 322.8,220.6 323.4,218.3 323.1,215.8 321.5,213.9 319.4,212.7 317.2,211.9 314.8,211.5 312.6,211.6 310.4,212.2 308.5,213.4 306.8,214.7 305.3,216.2 303.9,218.2 303.5,221.0 304.0,223.3 304.2,223.9 303.6,224.0 303.6,223.9 302.8,223.9 301.7,223.9 300.5,223.8 299.1,223.7 297.6,223.5 296.0,223.2 294.4,223.0 292.7,222.7 290.9,222.4 289.1,222.2 287.4,221.9 285.6,221.6 283.9,221.4 282.5,221.2 281.1,221.1 279.6,220.8 278.1,220.6 276.5,220.4 274.9,220.2 273.3,219.9 271.7,219.7 270.1,219.4 268.5,219.2 267.0,219.0 265.4,218.8 263.9,218.6 262.4,218.5 260.9,218.3 259.5,218.2 258.1,218.2 256.3,218.1 254.5,218.1 252.7,218.0 251.0,218.1 249.4,218.1 247.8,218.2 246.2,218.3 244.7,218.5 243.2,218.7 241.8,219.0 240.5,219.4 239.2,219.8 237.2,220.7 235.3,221.7 233.6,223.0 232.2,224.4 231.0,225.9 230.0,227.5 229.3,229.2 228.8,230.9 228.6,232.7 228.6,234.5 228.8,236.3 229.1,238.1 229.6,239.9 230.2,241.6 230.9,243.1 231.9,244.6 233.0,246.0 234.3,247.3 235.6,248.5 237.1,249.6 238.6,250.6 240.1,251.5 241.6,252.2 243.3,252.9 244.9,253.4 246.6,253.7 248.3,254.0 250.0,254.1 251.7,254.2 253.3,254.3 254.9,254.3 256.6,254.4 258.3,254.4 260.1,254.4 261.9,254.3 263.6,254.1 265.3,254.0 266.9,253.7 268.6,253.4 270.7,253.0 272.8,252.4 274.8,251.7 276.6,251.0 278.0,250.5 279.0,250.2ZM274.4,247.2a3.2,3.2 0 1,0 6.5,0a3.2,3.2 0 1,0 -6.5,0ZM306.9,227.3a2.5,2.5 0 1,0 5.0,0a2.5,2.5 0 1,0 -5.0,0ZM306.9,227.6 306.8,228.6 306.7,229.9 306.6,231.4 306.6,233.1 306.6,235.0 306.5,236.9 306.6,238.8 306.6,240.7 306.6,242.1 306.6,243.6 306.6,245.1 306.6,246.5 306.7,248.0 306.7,249.5 306.8,251.1 306.8,252.6 306.8,254.3 306.9,256.0 307.0,257.3 307.2,258.8 307.4,260.3 307.6,261.9 307.8,263.5 308.0,265.1 308.2,266.7 308.3,268.3 308.5,269.9 308.7,271.4 308.8,272.9 308.9,274.3 309.0,275.6 309.2,277.3 309.4,278.9 309.5,280.3 309.7,281.7 309.8,283.0 309.9,284.3 309.9,285.5 309.9,286.8 309.9,288.2 309.9,289.6 309.9,291.0 309.9,292.5 309.8,293.9 309.8,295.4 309.7,296.9 309.6,298.3 309.5,299.8 309.4,301.2 309.2,302.5 309.0,303.7 308.8,304.9 308.5,306.0 308.1,307.3 307.6,308.5 307.1,309.8 306.6,311.0 306.0,312.2 305.3,313.3 304.7,314.4 304.0,315.5 303.2,316.5 302.5,317.4 301.7,318.2 300.8,319.0 299.9,319.7 298.8,320.4 297.7,321.1 296.5,321.8 295.3,322.4 294.0,323.0 292.8,323.5 291.5,323.9 290.3,324.3 289.2,324.6 287.9,324.9 286.6,325.1 285.3,325.3 283.9,325.4 282.6,325.4 281.2,325.4 279.8,325.3 278.5,325.1 277.2,324.9 276.1,324.7 274.6,324.2 273.2,323.7 271.9,323.1 270.6,322.4 269.4,321.7 268.3,320.9 267.2,320.0 266.3,319.1 265.5,318.0 264.6,316.8 263.9,315.5 263.2,314.1 262.6,312.7 262.2,311.3 261.9,310.0 261.7,309.0 261.8,307.8 262.0,306.5 262.4,305.2 263.0,304.0 263.7,302.7 264.4,301.6 265.1,300.7 266.0,299.8 267.1,299.1 268.3,298.4 269.5,298.0 270.6,297.7 271.4,297.7 272.4,298.0 273.6,298.6 274.8,299.5 275.9,300.6 276.7,301.6 277.1,302.6 277.4,304.1 277.6,305.8 277.8,307.5 277.9,308.7 284.7,307.3 284.4,306.3 283.9,304.6 283.3,302.6 282.5,300.4 281.3,298.4 279.8,296.8 278.1,295.4 276.2,294.1 274.1,293.2 271.8,292.7 269.9,292.8 268.0,293.2 266.2,293.9 264.5,294.8 262.9,296.0 261.5,297.3 260.4,298.5 259.3,300.0 258.4,301.5 257.5,303.2 256.9,305.1 256.4,307.0 256.3,309.0 256.4,310.9 256.7,312.7 257.2,314.5 257.9,316.3 258.7,318.1 259.6,319.8 260.6,321.4 261.7,322.9 262.9,324.3 264.2,325.6 265.6,326.8 267.1,327.9 268.7,328.9 270.4,329.9 272.2,330.7 273.9,331.3 275.4,331.9 277.0,332.3 278.6,332.7 280.2,333.1 281.9,333.4 283.7,333.5 285.4,333.7 287.2,333.7 289.1,333.6 290.8,333.4 292.5,333.1 294.1,332.7 295.7,332.3 297.4,331.7 299.0,331.1 300.7,330.4 302.3,329.7 303.9,328.8 305.4,327.9 306.9,326.9 308.3,325.8 309.7,324.6 310.9,323.4 312.2,322.1 313.3,320.7 314.4,319.3 315.4,317.9 316.3,316.3 317.2,314.8 318.1,313.2 318.8,311.6 319.5,310.0 320.2,308.3 320.7,306.6 321.1,304.9 321.5,303.2 321.9,301.5 322.2,299.8 322.4,298.1 322.6,296.5 322.8,294.8 323.0,293.3 323.2,291.8 323.3,290.4 323.4,288.7 323.5,287.0 323.5,285.4 323.5,283.8 323.5,282.3 323.4,280.7 323.3,279.2 323.2,277.7 323.1,276.1 323.0,274.4 322.8,272.9 322.6,271.4 322.4,269.8 322.2,268.2 322.0,266.6 321.8,265.0 321.6,263.3 321.3,261.7 321.1,260.0 320.8,258.4 320.6,256.9 320.4,255.4 320.1,254.0 319.7,252.3 319.2,250.6 318.7,249.0 318.2,247.5 317.7,246.1 317.2,244.7 316.8,243.3 316.3,242.0 315.9,240.6 315.4,239.3 314.9,237.6 314.5,235.9 314.0,234.0 313.5,232.3 313.1,230.6 312.6,229.2 312.2,227.9 311.9,227.0ZM306.9,227.3a2.5,2.5 0 1,0 5.0,0a2.5,2.5 0 1,0 -5.0,0ZM277.8,308.0a3.5,3.5 0 1,0 7.0,0a3.5,3.5 0 1,0 -7.0,0ZM291.9,282.1 292.1,281.0 292.4,279.4 292.8,277.7 293.3,276.0 293.8,274.6 294.3,273.6 295.0,272.9 295.9,272.3 297.0,271.8 298.2,271.3 299.6,271.0 301.1,270.7 302.2,270.6 303.4,270.5 304.8,270.6 306.3,270.7 307.8,270.8 309.5,271.0 311.1,271.1 312.8,271.3 314.3,271.4 315.8,271.6 317.4,271.8 319.1,272.0 320.8,272.2 322.4,272.4 324.0,272.6 325.6,272.7 327.1,272.7 329.4,272.5 331.5,272.2 333.3,271.7 334.9,271.1 336.5,270.4 338.7,269.1 340.4,267.6 341.5,266.6 337.5,262.8 336.7,263.8 335.6,265.0 334.1,266.0 333.1,266.4 331.8,266.9 330.4,267.3 328.8,267.6 326.9,267.7 325.8,267.7 324.4,267.6 323.0,267.5 321.4,267.3 319.7,267.1 318.1,266.9 316.4,266.6 314.8,266.5 313.2,266.3 311.6,266.2 310.0,266.0 308.3,265.8 306.7,265.7 305.1,265.6 303.5,265.5 301.9,265.6 300.3,265.7 298.5,266.1 296.7,266.6 295.0,267.2 293.4,268.0 291.9,269.1 290.5,270.4 289.2,272.1 288.3,274.1 287.5,276.1 287.0,278.0 286.5,279.5 286.1,280.5ZM286.0,281.3a3.0,3.0 0 1,0 6.0,0a3.0,3.0 0 1,0 -6.0,0ZM336.8,264.7a2.8,2.8 0 1,0 5.5,0a2.8,2.8 0 1,0 -5.5,0ZM342.6,284.1 342.5,284.9 342.3,286.1 342.0,287.4 341.7,289.0 341.4,290.7 341.1,292.5 340.8,294.4 340.5,296.3 340.3,298.2 340.0,300.1 339.9,301.9 339.8,303.7 340.0,305.9 340.4,308.1 340.8,310.1 341.3,312.0 341.9,313.8 342.5,315.4 343.1,316.9 343.8,318.4 345.1,320.4 346.7,322.2 348.4,323.8 350.4,325.0 352.8,325.8 355.6,325.9 358.2,325.2 360.5,324.0 362.6,322.6 364.1,321.3 365.6,319.8 367.0,318.3 368.2,316.8 369.2,315.6 369.8,314.7 366.2,311.3 365.3,312.1 364.2,313.2 362.9,314.5 361.6,315.8 360.4,316.8 359.4,317.4 357.9,317.8 356.5,317.9 355.7,317.6 355.2,317.2 355.2,316.9 355.0,316.5 354.7,315.8 354.4,314.9 354.0,313.6 353.7,312.7 353.3,311.6 353.0,310.4 352.7,309.1 352.4,307.8 352.3,306.4 352.2,304.9 352.2,303.3 352.1,302.3 352.1,301.0 352.2,299.4 352.4,297.7 352.5,296.0 352.7,294.2 353.0,292.4 353.2,290.8 353.4,289.2 353.5,287.8 353.7,286.5 353.8,285.5ZM342.6,284.8a5.6,5.6 0 1,0 11.2,0a5.6,5.6 0 1,0 -11.2,0ZM365.5,313.0a2.5,2.5 0 1,0 5.0,0a2.5,2.5 0 1,0 -5.0,0ZM407.0,283.7 406.1,283.3 404.8,282.7 403.2,282.0 401.3,281.2 399.3,280.6 397.3,280.3 395.6,280.1 393.8,280.0 392.0,280.0 390.2,280.1 388.4,280.4 386.6,280.7 384.9,281.2 383.1,281.6 381.2,282.1 379.3,282.8 377.2,283.9 375.3,285.6 373.6,287.5 372.6,289.1 371.8,290.7 371.1,292.3 370.5,294.1 369.9,295.9 369.3,297.7 368.9,299.6 368.5,301.5 368.2,303.4 368.1,305.2 368.3,307.2 368.7,309.1 369.2,311.0 369.8,312.9 370.5,314.8 371.3,316.5 372.2,318.3 373.3,319.9 374.6,321.5 376.3,322.9 378.1,324.2 379.9,325.2 381.9,326.1 383.9,326.8 385.9,327.3 387.9,327.5 389.8,327.5 391.8,327.4 393.6,327.0 395.4,326.4 397.2,325.6 398.8,324.7 400.4,323.6 401.9,322.4 403.2,321.0 404.3,319.5 405.3,317.8 406.2,316.0 406.9,314.1 407.6,312.3 408.1,310.6 408.6,309.1 409.0,307.8 409.3,306.9 404.7,305.1 404.2,306.0 403.7,307.3 403.1,308.8 402.5,310.4 401.8,312.0 401.0,313.6 400.3,315.0 399.5,316.2 398.8,317.0 397.9,317.8 396.8,318.5 395.6,319.2 394.4,319.7 393.3,320.2 392.1,320.4 391.1,320.5 390.2,320.5 389.3,320.1 388.3,319.6 387.3,318.9 386.2,318.1 385.3,317.2 384.5,316.3 383.8,315.4 383.4,314.5 383.1,313.8 382.8,313.0 382.5,312.0 382.2,310.9 382.1,309.7 381.9,308.5 381.9,307.2 381.9,306.0 381.9,304.8 381.7,303.7 381.6,302.5 381.6,301.1 381.6,299.7 381.6,298.2 381.7,296.8 381.9,295.5 382.1,294.2 382.3,293.2 382.4,292.5 382.7,291.3 383.1,290.4 383.7,289.5 384.6,288.6 385.8,287.7 387.1,286.8 388.3,286.3 389.6,285.8 391.0,285.4 392.5,285.1 394.0,284.9 395.5,284.8 396.7,284.7 398.1,285.0 399.7,285.6 401.2,286.3 402.7,287.1 404.0,287.8 405.0,288.3ZM403.5,286.0a2.5,2.5 0 1,0 5.0,0a2.5,2.5 0 1,0 -5.0,0ZM404.5,306.0a2.5,2.5 0 1,0 5.0,0a2.5,2.5 0 1,0 -5.0,0ZM407.5,277.8 407.4,278.7 407.3,279.8 407.3,281.0 407.2,282.3 407.1,283.7 407.1,285.2 407.0,286.9 406.9,288.6 406.8,290.5 406.6,292.4 406.4,294.4 406.4,295.6 406.3,296.8 406.2,298.2 406.1,299.6 406.0,301.1 405.9,302.6 405.7,304.2 405.6,305.8 405.5,307.4 405.4,309.0 405.2,310.6 405.1,312.2 404.9,313.8 404.8,315.4 404.7,317.0 404.5,318.5 404.4,319.9 404.3,321.3 404.1,322.7 404.0,323.9 403.8,325.7 403.6,327.4 403.4,329.1 403.2,330.6 403.0,332.1 402.8,333.5 402.5,334.9 402.3,336.3 402.1,337.6 401.9,339.0 401.6,340.3 401.4,341.7 401.1,343.1 400.9,344.5 400.6,345.9 400.4,347.2 400.1,348.5 399.9,349.9 399.6,351.2 399.3,352.6 399.0,354.0 398.6,355.5 398.2,357.1 397.9,358.9 397.5,360.7 397.2,362.1 396.9,363.6 396.6,365.1 396.4,366.6 396.1,368.2 395.8,369.8 395.5,371.4 395.2,373.0 394.9,374.7 394.5,376.3 394.2,377.9 393.9,379.4 393.6,380.9 393.3,382.4 393.0,383.7 392.7,385.0 392.4,386.2 392.1,387.2 391.6,388.9 391.2,390.5 390.7,391.9 390.3,393.2 389.9,394.5 389.4,395.6 389.0,396.7 388.5,397.7 388.0,398.7 387.4,399.7 386.7,400.8 385.9,402.2 385.2,403.5 384.6,404.6 384.0,405.6 383.4,406.4 382.7,407.2 381.9,408.0 380.8,408.8 379.4,409.5 378.4,409.9 377.3,410.3 376.0,410.7 374.7,411.1 373.2,411.4 371.7,411.8 370.2,412.1 368.6,412.3 367.0,412.6 365.4,412.8 363.8,412.9 362.2,413.1 360.7,413.1 359.2,413.2 357.8,413.1 356.5,413.0 355.0,412.8 353.5,412.4 352.0,412.0 350.6,411.6 349.2,411.1 347.8,410.5 346.4,409.9 345.1,409.2 343.7,408.4 342.5,407.7 341.2,406.8 340.0,406.0 338.9,405.1 337.8,404.1 336.9,403.2 335.9,402.1 335.0,401.0 334.2,399.9 333.3,398.6 332.5,397.3 331.7,396.0 330.9,394.7 330.2,393.3 329.6,391.9 328.9,390.6 328.3,389.2 327.8,387.9 327.3,386.5 326.8,385.3 326.4,383.8 326.0,382.3 325.6,380.8 325.3,379.3 325.1,377.7 324.9,376.2 324.8,374.7 324.7,373.2 324.7,371.8 324.8,370.4 324.9,369.1 325.0,367.8 325.2,366.6 325.6,365.1 326.0,363.7 326.5,362.4 327.2,361.1 327.9,359.8 328.7,358.6 329.6,357.5 330.5,356.5 331.6,355.5 332.6,354.6 333.7,353.9 334.9,353.2 336.2,352.6 337.5,352.0 339.0,351.5 340.5,351.0 342.1,350.6 343.6,350.2 345.2,349.9 346.7,349.6 348.2,349.3 349.7,349.1 351.3,349.0 352.8,349.0 354.4,349.0 356.0,349.1 357.6,349.2 359.2,349.4 360.8,349.6 362.4,349.8 364.0,350.0 365.4,350.3 366.8,350.6 368.3,350.9 369.7,351.3 371.2,351.7 372.7,352.1 374.2,352.6 375.7,353.0 377.2,353.4 378.7,353.8 380.2,354.2 381.7,354.5 383.1,354.9 384.5,355.2 385.9,355.6 387.3,355.9 388.7,356.3 390.2,356.6 391.8,356.9 393.4,357.1 395.2,357.4 397.0,357.5 398.4,357.6 399.8,357.7 401.2,357.8 402.7,357.9 404.3,358.0 405.8,358.0 407.5,358.0 409.1,358.1 410.7,358.1 412.4,358.1 414.0,358.0 415.7,358.0 417.3,357.9 418.9,357.8 420.5,357.7 422.0,357.5 423.7,357.3 425.3,357.1 427.0,356.8 428.7,356.5 430.3,356.2 432.0,355.8 433.6,355.4 435.2,355.0 436.8,354.6 438.3,354.3 439.8,353.9 441.3,353.5 442.7,353.2 444.0,352.8 445.3,352.5 447.2,352.1 448.8,351.7 450.2,351.4 451.5,351.1 452.8,350.8 454.2,350.4 455.8,350.0 457.6,349.6 459.8,349.1 460.9,348.8 462.1,348.5 463.3,348.2 464.6,347.9 465.9,347.6 467.2,347.3 468.6,346.9 470.0,346.6 471.4,346.2 472.9,345.9 474.4,345.5 476.0,345.2 477.5,344.8 479.1,344.4 480.7,344.1 482.3,343.7 484.0,343.4 485.6,343.1 487.3,342.7 489.0,342.4 490.3,342.2 491.7,341.9 493.0,341.7 494.4,341.5 495.9,341.2 497.3,341.0 498.8,340.8 500.2,340.5 501.7,340.3 503.3,340.1 504.8,339.8 506.3,339.6 507.9,339.4 509.4,339.1 511.0,338.9 512.5,338.7 514.1,338.5 515.7,338.2 517.2,338.0 518.8,337.8 520.3,337.6 521.9,337.4 523.4,337.2 525.0,336.9 526.5,336.7 528.0,336.5 529.5,336.3 531.1,336.1 532.6,335.9 534.2,335.7 535.8,335.4 537.4,335.2 539.0,335.0 540.7,334.7 542.3,334.5 543.9,334.3 545.5,334.0 547.1,333.8 548.7,333.6 550.3,333.4 551.9,333.2 553.4,333.0 554.9,332.8 556.4,332.6 557.8,332.4 559.3,332.3 560.6,332.1 562.0,332.0 563.3,331.9 564.5,331.8 565.7,331.7 566.8,331.6 568.9,331.6 570.9,331.5 572.6,331.5 574.2,331.5 575.7,331.6 577.1,331.7 578.3,331.8 579.5,332.0 580.7,332.2 581.9,332.5 583.1,332.8 584.3,333.1 585.5,333.5 586.9,334.0 588.3,334.6 589.7,335.3 591.0,336.0 592.4,336.8 593.7,337.6 595.0,338.4 596.2,339.3 597.4,340.2 598.5,341.1 599.5,341.9 600.4,342.8 601.5,343.9 602.6,345.1 603.5,346.4 604.3,347.6 605.1,348.9 605.7,350.1 606.1,351.2 606.4,352.3 606.6,353.1 606.6,354.5 606.3,355.8 605.9,356.9 605.2,358.0 604.2,359.0 602.8,359.9 601.9,360.2 600.6,360.6 599.0,360.9 597.3,361.2 595.4,361.4 593.5,361.6 591.6,361.8 589.9,361.9 588.3,362.1 586.9,362.2 585.9,362.3 586.6,367.1 587.5,366.9 588.8,366.8 590.3,366.6 592.1,366.4 594.0,366.2 596.0,365.9 598.0,365.6 599.9,365.2 601.7,364.8 603.3,364.3 604.8,363.6 606.8,362.3 608.5,360.8 609.7,358.9 610.5,357.0 610.8,354.9 610.8,352.9 610.6,351.3 610.2,349.9 609.6,348.4 608.9,346.9 608.0,345.4 607.0,343.9 605.9,342.4 604.7,341.0 603.4,339.7 602.3,338.7 601.2,337.8 600.0,336.8 598.8,335.8 597.4,334.9 596.0,334.0 594.6,333.1 593.1,332.2 591.6,331.4 590.1,330.7 588.5,330.0 587.0,329.5 585.6,329.0 584.2,328.6 582.9,328.3 581.6,328.0 580.3,327.7 578.9,327.5 577.4,327.4 575.9,327.3 574.3,327.2 572.6,327.2 570.8,327.2 568.8,327.3 566.6,327.4 565.4,327.4 564.2,327.5 562.9,327.6 561.6,327.7 560.2,327.9 558.8,328.0 557.4,328.2 555.9,328.3 554.4,328.5 552.9,328.7 551.3,328.9 549.7,329.1 548.1,329.3 546.5,329.5 544.9,329.8 543.3,330.0 541.7,330.2 540.0,330.5 538.4,330.7 536.8,330.9 535.2,331.2 533.6,331.4 532.0,331.6 530.5,331.8 528.9,332.1 527.4,332.3 525.9,332.5 524.4,332.7 522.8,332.9 521.3,333.1 519.7,333.3 518.2,333.5 516.6,333.8 515.1,334.0 513.5,334.2 511.9,334.4 510.4,334.7 508.8,334.9 507.2,335.1 505.7,335.3 504.1,335.6 502.6,335.8 501.1,336.0 499.6,336.3 498.1,336.5 496.6,336.7 495.2,337.0 493.7,337.2 492.3,337.5 490.9,337.7 489.5,337.9 488.2,338.2 486.5,338.5 484.8,338.8 483.1,339.2 481.4,339.5 479.8,339.9 478.2,340.3 476.6,340.6 475.0,341.0 473.4,341.3 471.9,341.7 470.4,342.1 469.0,342.4 467.6,342.8 466.2,343.1 464.8,343.4 463.5,343.8 462.3,344.1 461.1,344.4 459.9,344.6 458.8,344.9 456.6,345.4 454.7,345.9 453.2,346.3 451.8,346.6 450.5,347.0 449.2,347.3 447.8,347.6 446.2,348.0 444.3,348.5 443.0,348.8 441.7,349.1 440.3,349.5 438.8,349.8 437.3,350.2 435.8,350.6 434.2,351.0 432.7,351.4 431.1,351.8 429.5,352.1 427.9,352.5 426.3,352.8 424.7,353.0 423.1,353.3 421.6,353.5 420.1,353.6 418.6,353.7 417.1,353.8 415.5,353.9 413.9,353.9 412.3,354.0 410.7,354.0 409.1,354.0 407.5,353.9 406.0,353.9 404.4,353.9 402.9,353.8 401.4,353.7 400.0,353.6 398.7,353.6 397.4,353.5 395.6,353.3 394.0,353.1 392.5,352.8 391.0,352.6 389.6,352.3 388.2,352.0 386.9,351.6 385.5,351.3 384.1,350.9 382.6,350.6 381.2,350.2 379.7,349.9 378.3,349.5 376.8,349.1 375.3,348.6 373.8,348.2 372.3,347.8 370.8,347.3 369.3,346.9 367.7,346.6 366.2,346.2 364.6,346.0 362.9,345.7 361.3,345.5 359.6,345.3 357.9,345.1 356.2,345.0 354.5,344.9 352.8,344.9 351.1,344.9 349.3,345.1 347.6,345.3 346.0,345.5 344.4,345.8 342.7,346.2 341.0,346.6 339.4,347.1 337.7,347.6 336.0,348.2 334.5,348.9 332.9,349.6 331.5,350.4 330.2,351.4 328.8,352.4 327.6,353.6 326.5,354.9 325.4,356.2 324.4,357.6 323.6,359.1 322.8,360.7 322.1,362.3 321.6,364.0 321.2,365.8 321.0,367.2 320.8,368.7 320.7,370.2 320.6,371.8 320.6,373.4 320.7,375.0 320.9,376.6 321.1,378.3 321.3,380.0 321.6,381.6 322.0,383.3 322.5,384.9 323.0,386.5 323.4,387.9 324.0,389.3 324.6,390.8 325.2,392.2 325.9,393.7 326.6,395.2 327.3,396.6 328.2,398.1 329.0,399.5 329.9,400.9 330.8,402.2 331.8,403.6 332.8,404.8 333.9,406.0 335.0,407.1 336.2,408.2 337.4,409.3 338.7,410.3 340.0,411.3 341.4,412.2 342.9,413.1 344.3,413.9 345.9,414.7 347.4,415.4 349.0,416.0 350.6,416.6 352.2,417.1 353.9,417.6 355.5,418.0 357.1,418.3 358.7,418.6 360.4,418.9 362.1,419.1 363.8,419.2 365.6,419.3 367.4,419.3 369.2,419.3 370.9,419.3 372.7,419.2 374.4,419.1 376.0,418.9 377.6,418.8 379.1,418.6 380.6,418.3 382.0,418.1 384.3,417.6 386.4,416.9 388.4,416.0 390.3,415.0 391.9,413.9 393.4,412.7 394.7,411.5 396.0,410.4 397.3,409.2 398.3,408.1 399.4,406.9 400.4,405.7 401.5,404.3 402.4,403.0 403.4,401.5 404.4,400.0 405.3,398.3 406.2,396.6 407.1,394.7 407.9,392.8 408.5,391.4 409.0,389.9 409.5,388.4 410.0,386.9 410.5,385.3 410.9,383.7 411.4,382.0 411.9,380.4 412.3,378.7 412.8,377.0 413.2,375.4 413.6,373.8 414.0,372.2 414.4,370.7 414.8,369.2 415.2,367.8 415.6,366.5 415.9,365.3 416.4,363.5 416.9,361.9 417.3,360.3 417.8,358.8 418.2,357.4 418.6,355.9 419.0,354.5 419.4,353.1 419.8,351.6 420.1,350.1 420.5,348.5 420.9,346.9 421.2,345.4 421.5,343.9 421.7,342.5 422.0,341.0 422.2,339.5 422.5,338.0 422.7,336.5 422.9,334.9 423.1,333.3 423.4,331.6 423.6,329.9 423.8,328.0 424.0,326.1 424.2,324.8 424.3,323.4 424.5,321.9 424.6,320.4 424.7,318.8 424.9,317.2 425.0,315.6 425.2,314.0 425.3,312.3 425.5,310.6 425.6,309.0 425.7,307.3 425.8,305.7 426.0,304.1 426.1,302.6 426.2,301.1 426.3,299.6 426.4,298.2 426.5,296.9 426.6,295.6 426.6,293.4 426.7,291.3 426.7,289.3 426.7,287.4 426.7,285.6 426.7,284.0 426.7,282.5 426.6,281.2 426.6,280.0 426.6,279.0 426.5,278.2ZM407.5,278.0a9.5,9.5 0 1,0 19.0,0a9.5,9.5 0 1,0 -19.0,0ZM583.9,364.7a2.4,2.4 0 1,0 4.8,0a2.4,2.4 0 1,0 -4.8,0ZM446.7,312.2 446.7,311.3 446.8,310.4 446.8,309.3 446.8,308.2 446.9,307.0 446.9,305.7 447.0,304.3 447.0,302.9 447.0,301.4 447.1,299.9 447.1,298.3 447.2,296.6 447.3,295.0 447.3,293.2 447.4,291.5 447.5,289.7 447.6,288.0 447.7,286.2 447.8,284.4 447.9,282.6 448.1,280.9 448.2,279.1 448.4,277.4 448.5,276.0 448.6,274.6 448.7,273.2 448.8,271.8 448.9,270.3 449.1,268.7 449.2,267.2 449.3,265.6 449.5,264.0 449.6,262.4 449.8,260.8 449.9,259.1 450.1,257.5 450.2,255.9 450.4,254.2 450.6,252.6 450.7,251.0 450.9,249.3 451.1,247.7 451.3,246.2 451.5,244.6 451.7,243.1 451.9,241.6 452.1,240.2 452.3,238.7 452.5,237.4 452.7,236.0 452.9,234.8 453.1,233.5 453.3,232.4 453.5,231.3 453.9,229.3 454.2,227.4 454.6,225.5 455.0,223.8 455.5,222.2 455.9,220.7 456.3,219.3 456.8,217.9 457.3,216.6 457.7,215.4 458.2,214.2 458.7,213.1 459.1,212.1 459.6,211.1 460.1,210.1 460.5,209.3 461.4,207.8 462.2,206.7 462.9,205.9 463.6,205.3 464.3,204.8 465.1,204.3 466.2,204.0 467.4,203.8 468.4,203.8 469.6,203.9 471.0,204.1 472.4,204.5 473.8,204.9 475.1,205.5 476.5,206.1 477.6,206.8 478.7,207.5 479.5,208.3 480.1,209.2 480.7,210.2 481.3,211.3 481.8,212.6 482.2,214.0 482.6,215.4 482.9,216.9 483.2,218.4 483.4,220.0 483.5,221.5 483.5,223.0 483.5,224.4 483.4,225.8 483.3,227.2 483.1,228.6 482.9,230.0 482.6,231.5 482.2,233.0 481.8,234.4 481.3,235.9 480.7,237.4 480.0,239.0 479.2,240.5 478.6,241.7 477.9,242.8 477.2,244.0 476.4,245.2 475.5,246.5 474.6,247.7 473.7,249.0 472.8,250.2 471.8,251.5 470.7,252.8 469.7,254.0 468.6,255.2 467.6,256.5 466.5,257.6 465.4,258.8 464.3,259.9 463.2,261.0 462.1,262.1 461.0,263.2 459.7,264.2 458.4,265.4 457.0,266.5 455.6,267.5 454.1,268.6 452.7,269.7 451.3,270.7 449.9,271.7 448.6,272.6 447.3,273.5 446.2,274.4 445.1,275.1 444.1,275.8 443.2,276.5 442.5,277.0 445.5,281.0 446.2,280.5 447.0,279.9 448.0,279.2 449.0,278.4 450.2,277.6 451.5,276.7 452.8,275.8 454.2,274.8 455.7,273.7 457.1,272.6 458.6,271.5 460.1,270.4 461.5,269.2 462.9,268.1 464.3,266.9 465.6,265.7 466.8,264.6 467.9,263.4 469.0,262.2 470.2,261.0 471.3,259.8 472.4,258.5 473.5,257.2 474.6,255.9 475.7,254.6 476.7,253.3 477.7,252.0 478.7,250.6 479.6,249.3 480.5,248.0 481.4,246.7 482.2,245.4 482.9,244.1 483.6,242.9 484.5,241.1 485.3,239.4 485.9,237.7 486.5,236.0 487.0,234.3 487.4,232.6 487.8,231.0 488.1,229.3 488.3,227.7 488.4,226.1 488.5,224.5 488.5,223.0 488.5,221.3 488.3,219.5 488.1,217.8 487.9,216.0 487.5,214.3 487.0,212.6 486.5,210.9 485.9,209.3 485.1,207.8 484.3,206.4 483.3,205.1 482.1,203.7 480.7,202.5 479.1,201.5 477.5,200.6 475.8,199.8 474.0,199.1 472.3,198.6 470.6,198.2 469.0,197.9 467.4,197.8 465.7,197.7 463.9,197.7 462.0,198.0 460.2,198.6 458.3,199.5 456.5,200.8 454.8,202.3 453.3,204.1 452.4,205.1 451.7,206.1 450.9,207.2 450.1,208.4 449.3,209.6 448.6,210.9 447.8,212.2 447.0,213.7 446.3,215.2 445.5,216.9 444.8,218.6 444.1,220.4 443.4,222.3 442.7,224.3 442.1,226.5 441.5,228.7 441.2,229.9 440.9,231.2 440.7,232.5 440.4,233.9 440.1,235.3 439.9,236.8 439.6,238.3 439.4,239.8 439.2,241.3 438.9,242.9 438.7,244.5 438.5,246.1 438.2,247.8 438.0,249.4 437.8,251.1 437.6,252.8 437.4,254.4 437.2,256.1 437.0,257.8 436.8,259.4 436.6,261.1 436.4,262.7 436.2,264.3 436.1,265.9 435.9,267.5 435.7,269.0 435.6,270.6 435.4,272.0 435.3,273.5 435.1,274.9 435.0,276.2 434.9,278.1 434.8,279.9 434.7,281.8 434.6,283.7 434.5,285.6 434.5,287.4 434.4,289.3 434.4,291.1 434.3,292.9 434.3,294.6 434.3,296.3 434.3,298.0 434.3,299.7 434.3,301.2 434.3,302.7 434.3,304.2 434.3,305.5 434.3,306.8 434.3,308.0 434.3,309.1 434.3,310.1 434.3,311.0 434.3,311.8ZM434.3,312.0a6.2,6.2 0 1,0 12.3,0a6.2,6.2 0 1,0 -12.3,0ZM441.5,279.0a2.5,2.5 0 1,0 5.0,0a2.5,2.5 0 1,0 -5.0,0ZM444.8,285.6 445.7,285.3 446.6,284.8 447.8,284.3 449.1,283.8 450.5,283.1 451.9,282.5 453.5,281.8 455.1,281.1 456.7,280.4 458.3,279.7 460.0,279.0 461.5,278.3 463.1,277.7 464.5,277.2 465.9,276.7 467.6,276.2 469.3,275.7 471.0,275.1 472.8,274.6 474.5,274.1 476.1,273.7 477.6,273.3 479.0,273.1 480.3,272.9 481.4,272.9 482.2,273.0 482.7,273.2 483.3,273.6 483.7,274.2 484.1,274.9 484.4,275.7 484.7,276.7 485.0,278.0 485.2,279.4 485.4,280.9 485.5,282.5 485.6,283.4 485.7,284.4 485.7,285.6 485.7,287.0 485.6,288.4 485.5,289.9 485.4,291.5 485.3,293.1 485.1,294.7 485.0,296.3 484.8,297.9 484.7,299.5 484.6,301.0 484.5,302.4 484.6,304.2 484.6,305.9 484.6,307.6 484.6,309.2 484.6,310.8 484.7,312.5 484.8,314.2 485.2,315.9 485.7,317.7 486.8,319.8 488.2,321.8 489.9,323.6 491.9,325.2 494.2,326.3 496.9,326.5 499.2,326.0 501.0,325.0 502.5,323.8 504.0,322.4 505.4,320.9 506.7,319.2 508.0,317.6 508.9,316.2 509.9,314.8 510.9,313.1 511.8,311.4 512.8,309.7 513.6,308.1 514.4,306.5 515.1,305.2 515.7,304.0 516.2,303.2 511.8,300.8 511.3,301.7 510.7,302.9 510.0,304.2 509.2,305.8 508.4,307.4 507.5,309.0 506.6,310.6 505.7,312.1 504.8,313.4 504.0,314.4 502.8,315.7 501.4,317.0 500.1,318.0 498.9,318.9 497.8,319.4 497.1,319.6 497.1,319.5 497.3,319.2 497.3,318.7 497.0,317.9 496.7,316.8 496.4,315.6 496.3,314.3 496.3,313.8 496.2,313.0 496.2,312.1 496.3,310.9 496.4,309.6 496.5,308.1 496.6,306.4 496.8,304.5 496.9,302.6 496.8,301.4 496.9,300.1 496.9,298.7 497.0,297.1 497.0,295.5 497.1,293.9 497.2,292.2 497.2,290.4 497.2,288.7 497.2,287.0 497.1,285.2 497.0,283.5 496.8,281.9 496.5,280.3 495.8,278.3 495.0,276.4 494.1,274.5 493.1,272.7 491.9,270.9 490.4,269.4 488.7,268.0 486.8,267.0 484.7,266.4 482.9,266.2 481.1,266.2 479.5,266.5 477.8,266.9 476.1,267.3 474.3,267.9 472.6,268.6 470.9,269.2 469.2,269.9 467.5,270.7 465.8,271.4 464.1,272.1 462.7,272.6 461.2,273.2 459.7,273.9 458.1,274.6 456.4,275.4 454.8,276.2 453.2,277.0 451.6,277.7 450.1,278.5 448.6,279.2 447.2,279.9 446.0,280.5 444.9,281.1 443.9,281.6 443.2,282.0ZM442.0,283.8a2.0,2.0 0 1,0 4.0,0a2.0,2.0 0 1,0 -4.0,0ZM511.5,302.0a2.5,2.5 0 1,0 5.0,0a2.5,2.5 0 1,0 -5.0,0ZM529.8,235.9 529.8,236.7 529.7,237.7 529.7,238.7 529.6,239.9 529.6,241.1 529.5,242.5 529.4,243.9 529.4,245.4 529.3,247.0 529.3,248.7 529.2,250.4 529.1,252.2 529.1,254.1 529.0,256.0 528.9,257.9 528.8,259.9 528.8,261.1 528.8,262.5 528.7,263.9 528.7,265.3 528.7,266.9 528.6,268.5 528.6,270.1 528.5,271.7 528.5,273.4 528.4,275.1 528.4,276.9 528.3,278.6 528.3,280.3 528.2,282.1 528.2,283.8 528.1,285.5 528.1,287.1 528.1,288.8 528.0,290.4 528.0,291.9 527.9,293.4 527.9,294.9 527.9,296.3 527.9,297.6 527.9,298.8 527.8,299.9 527.8,302.4 527.8,304.6 527.8,306.5 527.7,308.3 527.7,309.9 527.7,311.6 527.9,313.2 528.2,315.0 528.7,316.7 529.6,318.6 531.2,320.7 533.3,322.6 535.5,324.0 537.9,325.0 540.3,325.7 542.7,325.9 545.1,325.4 547.1,324.6 548.7,323.5 550.0,322.1 551.1,320.6 552.2,319.0 553.2,317.2 554.2,315.3 555.2,313.2 555.8,312.1 556.5,310.8 557.1,309.3 557.8,307.8 558.5,306.2 559.2,304.6 559.9,302.9 560.6,301.2 561.3,299.6 562.0,298.0 562.6,296.4 563.2,295.0 563.7,293.7 564.2,292.5 564.6,291.6 564.9,290.8 560.3,288.8 560.0,289.6 559.5,290.7 559.1,291.8 558.5,293.1 558.0,294.6 557.3,296.1 556.7,297.7 556.0,299.3 555.3,301.0 554.6,302.6 553.9,304.2 553.3,305.8 552.6,307.2 552.0,308.6 551.4,309.8 550.8,310.8 549.6,312.6 548.5,314.3 547.4,315.7 546.4,316.9 545.5,317.8 544.7,318.3 544.1,318.6 543.9,318.6 543.4,318.3 542.7,317.8 541.8,317.1 540.9,316.3 540.1,315.3 539.7,314.3 539.4,313.4 539.4,313.1 539.4,312.7 539.3,312.1 539.4,311.4 539.4,310.3 539.6,308.9 539.7,307.2 539.9,305.2 540.0,302.8 540.2,300.1 540.2,299.0 540.2,297.8 540.2,296.5 540.2,295.1 540.3,293.7 540.3,292.2 540.3,290.7 540.4,289.1 540.4,287.5 540.5,285.8 540.5,284.1 540.6,282.4 540.6,280.7 540.7,278.9 540.7,277.2 540.7,275.5 540.8,273.8 540.8,272.1 540.9,270.4 540.9,268.8 541.0,267.2 541.0,265.7 541.1,264.2 541.1,262.8 541.1,261.4 541.2,260.1 541.2,258.1 541.2,256.2 541.2,254.3 541.2,252.4 541.2,250.6 541.2,248.9 541.2,247.2 541.1,245.6 541.1,244.1 541.1,242.6 541.1,241.3 541.1,240.0 541.1,238.9 541.0,237.8 541.0,236.9 541.0,236.1ZM529.8,236.0a5.6,5.6 0 1,0 11.2,0a5.6,5.6 0 1,0 -11.2,0ZM560.1,289.8a2.5,2.5 0 1,0 5.0,0a2.5,2.5 0 1,0 -5.0,0ZM509.0,278.3 509.7,277.2 510.6,275.8 511.6,274.2 512.7,272.8 513.6,271.9 514.7,271.1 515.4,270.7 516.5,270.4 518.6,270.3 519.5,270.3 520.7,270.4 521.9,270.5 523.3,270.7 524.8,270.9 526.3,271.1 527.9,271.3 529.6,271.6 531.2,271.9 532.9,272.2 534.6,272.5 536.0,272.7 537.6,273.1 539.2,273.4 541.0,273.8 542.8,274.2 544.5,274.6 546.3,275.1 548.0,275.5 549.5,275.8 551.0,276.2 552.3,276.5 553.4,276.8 554.3,277.0 555.5,271.6 554.6,271.4 553.5,271.2 552.2,270.9 550.7,270.6 549.1,270.3 547.4,269.9 545.7,269.5 543.9,269.2 542.1,268.8 540.3,268.4 538.6,268.1 536.9,267.8 535.4,267.5 533.8,267.2 532.1,266.9 530.4,266.7 528.7,266.4 527.1,266.1 525.5,265.9 523.9,265.7 522.4,265.5 521.0,265.4 519.7,265.3 518.4,265.3 515.8,265.5 513.6,266.0 511.9,266.9 510.4,268.1 508.9,269.6 507.6,271.3 506.4,273.0 505.5,274.5 504.8,275.5ZM504.4,276.9a2.5,2.5 0 1,0 5.0,0a2.5,2.5 0 1,0 -5.0,0ZM552.1,274.3a2.8,2.8 0 1,0 5.5,0a2.8,2.8 0 1,0 -5.5,0ZM567.5,280.4 567.5,281.3 567.4,282.4 567.3,283.7 567.2,285.3 567.1,286.9 567.0,288.7 566.9,290.5 566.8,292.4 566.8,294.3 566.7,296.1 566.7,297.9 566.7,299.6 566.8,301.4 566.9,303.1 567.1,304.9 567.2,306.7 567.4,308.5 567.6,310.3 567.8,312.0 568.1,313.7 568.4,315.3 568.7,316.8 569.2,318.5 570.5,321.0 572.1,323.4 574.1,325.3 576.5,326.7 578.8,327.3 581.0,327.4 583.4,327.1 585.9,326.0 588.0,324.0 589.7,321.4 590.4,320.2 590.9,318.9 591.5,317.6 592.1,316.1 592.6,314.6 593.2,313.0 593.8,311.3 594.3,309.6 594.9,308.0 595.4,306.3 596.0,304.6 596.5,303.1 597.1,301.6 597.6,300.2 598.1,298.9 598.8,297.2 599.6,295.6 600.3,294.0 601.0,292.4 601.7,290.9 602.4,289.5 603.1,288.1 603.8,286.9 604.4,285.7 605.1,284.7 605.6,283.9 606.9,282.5 608.0,281.7 609.2,281.2 610.3,280.7 611.3,280.3 608.3,275.1 607.6,275.6 606.5,276.3 604.9,277.3 603.2,278.9 601.6,280.9 600.8,282.0 600.1,283.2 599.4,284.5 598.7,285.8 598.0,287.2 597.2,288.7 596.5,290.3 595.8,291.9 595.0,293.5 594.3,295.2 593.5,296.9 592.9,298.2 592.3,299.7 591.7,301.2 591.0,302.8 590.4,304.5 589.8,306.2 589.2,307.8 588.6,309.4 587.9,311.0 587.3,312.6 586.7,314.0 586.2,315.3 585.6,316.4 585.1,317.4 584.7,318.0 583.3,319.4 582.5,319.7 582.1,319.4 581.9,319.1 581.6,318.7 581.7,318.3 582.0,318.0 582.1,317.4 582.1,316.4 582.0,314.7 582.0,314.1 581.8,313.0 581.7,311.8 581.6,310.5 581.5,309.0 581.4,307.4 581.3,305.8 581.3,304.2 581.3,302.6 581.3,300.9 581.3,299.4 581.3,297.9 581.3,296.4 581.3,294.7 581.4,293.0 581.5,291.2 581.6,289.5 581.7,287.8 581.8,286.2 581.9,284.7 582.0,283.3 582.0,282.1 582.1,281.2ZM567.5,280.8a7.3,7.3 0 1,0 14.6,0a7.3,7.3 0 1,0 -14.6,0ZM606.8,277.7a3.0,3.0 0 1,0 6.0,0a3.0,3.0 0 1,0 -6.0,0ZM611.4,279.2 611.4,280.1 611.3,281.2 611.3,282.5 611.3,284.0 611.2,285.6 611.2,287.3 611.2,289.1 611.2,291.0 611.1,292.8 611.1,294.7 611.1,296.5 611.1,298.3 611.1,299.9 611.3,301.6 611.4,303.3 611.6,305.1 611.8,307.0 612.0,308.8 612.2,310.6 612.4,312.3 612.6,314.0 612.7,315.6 612.9,317.0 613.1,318.3 613.2,319.4 613.3,320.2 626.7,319.2 626.7,318.2 626.6,317.1 626.5,315.8 626.5,314.4 626.4,312.8 626.3,311.2 626.2,309.4 626.1,307.6 626.0,305.8 625.9,304.1 625.8,302.3 625.7,300.6 625.7,299.1 625.5,297.5 625.3,295.8 625.2,294.1 625.0,292.3 624.8,290.4 624.7,288.6 624.5,286.9 624.4,285.2 624.3,283.6 624.1,282.1 624.0,280.8 623.9,279.7 623.8,278.8ZM611.4,279.0a6.2,6.2 0 1,0 12.3,0a6.2,6.2 0 1,0 -12.3,0ZM613.3,319.7a6.7,6.7 0 1,0 13.4,0a6.7,6.7 0 1,0 -13.4,0ZM627.1,292.8 627.6,292.0 628.4,291.0 629.2,289.7 630.1,288.4 631.0,286.9 632.1,285.4 633.1,283.8 634.2,282.3 635.2,281.0 636.2,279.7 637.2,278.7 637.9,278.0 639.5,277.1 640.9,276.6 642.3,276.2 643.6,276.1 644.8,276.2 645.9,276.4 646.9,276.7 647.9,277.1 648.9,277.6 649.7,278.2 650.2,278.8 650.4,279.4 650.4,279.8 650.4,280.5 650.3,280.5 650.4,281.1 650.4,282.0 650.4,283.1 650.4,284.5 650.3,286.0 650.2,287.6 650.1,289.4 650.1,291.2 650.0,293.1 650.0,295.0 650.0,296.9 650.2,298.5 650.4,300.1 650.6,301.8 650.7,303.5 650.9,305.2 651.1,307.0 651.4,308.7 651.6,310.4 651.8,312.1 652.1,313.7 652.4,315.3 652.7,316.8 653.1,318.3 654.4,320.7 655.8,322.9 657.3,324.8 658.9,326.3 660.7,327.4 662.9,328.2 665.7,328.6 668.5,327.9 670.8,326.4 672.5,324.3 673.4,322.6 674.1,320.7 674.6,318.8 675.1,316.8 675.5,315.0 675.8,313.5 676.0,312.5 671.2,311.3 670.9,312.4 670.6,314.0 670.2,315.7 669.8,317.5 669.3,319.3 668.8,320.6 668.5,321.3 667.5,322.0 666.5,322.3 665.9,322.2 665.7,321.8 666.1,321.3 666.1,320.6 666.1,319.6 666.1,318.4 666.1,316.9 666.1,314.9 666.0,314.1 665.8,313.0 665.6,311.7 665.5,310.3 665.4,308.8 665.2,307.3 665.1,305.6 665.0,304.0 664.9,302.3 664.8,300.6 664.7,299.0 664.6,297.4 664.6,295.9 664.4,294.5 664.4,293.0 664.3,291.4 664.3,289.8 664.3,288.0 664.3,286.3 664.3,284.5 664.2,282.7 664.1,280.9 663.8,279.0 663.4,277.1 662.6,274.9 660.9,272.4 658.6,270.4 656.2,269.0 653.8,268.2 651.6,267.8 649.5,267.6 647.5,267.7 645.6,268.0 643.7,268.4 641.7,269.1 639.8,270.0 638.0,271.2 636.3,272.6 634.7,274.2 633.6,275.4 632.5,276.7 631.4,278.1 630.4,279.7 629.3,281.3 628.3,282.9 627.3,284.5 626.4,286.1 625.6,287.5 624.8,288.8 624.2,289.8 623.7,290.6ZM623.4,291.7a2.0,2.0 0 1,0 4.0,0a2.0,2.0 0 1,0 -4.0,0ZM671.1,311.9a2.5,2.5 0 1,0 5.0,0a2.5,2.5 0 1,0 -5.0,0ZM732.9,270.5 732.1,270.1 731.1,269.8 729.9,269.3 728.5,268.8 727.0,268.3 725.3,267.7 723.6,267.1 721.8,266.6 719.9,266.0 718.1,265.5 716.2,265.0 714.3,264.5 712.5,264.2 710.7,263.9 709.0,263.7 707.0,263.5 705.2,263.4 703.2,263.4 701.3,263.4 699.3,263.5 697.3,263.7 695.3,264.1 693.3,264.5 691.3,265.2 689.3,266.1 687.3,267.2 685.5,268.6 684.0,270.0 682.6,271.5 681.4,273.0 680.3,274.7 679.3,276.4 678.4,278.2 677.6,280.1 676.8,282.0 676.2,284.0 675.6,286.0 675.2,288.0 674.8,290.1 674.6,292.2 674.5,294.3 674.9,296.4 675.4,298.4 676.0,300.3 676.7,302.3 677.5,304.2 678.3,306.0 679.2,307.9 680.1,309.7 681.1,311.4 682.2,313.1 683.3,314.7 684.4,316.2 685.5,317.6 686.7,319.0 688.0,320.3 689.8,321.8 691.7,323.2 693.7,324.2 695.7,325.1 697.7,325.8 699.7,326.2 701.6,326.6 703.5,326.7 705.3,326.8 707.0,326.8 708.8,326.7 710.8,326.5 712.9,326.1 714.8,325.5 716.7,324.7 718.5,323.9 720.2,323.1 721.8,322.2 723.3,321.3 724.6,320.5 725.9,319.7 727.9,318.4 729.7,317.0 731.2,315.6 732.4,314.3 733.3,313.3 734.0,312.5 730.6,308.9 729.7,309.6 728.7,310.5 727.5,311.5 726.2,312.6 724.8,313.5 723.1,314.3 721.9,314.7 720.5,315.1 719.0,315.6 717.4,316.0 715.8,316.3 714.3,316.6 712.8,316.8 711.4,316.9 710.2,316.9 709.0,316.7 707.9,316.4 706.7,316.0 705.5,315.6 704.4,315.2 703.3,314.7 702.3,314.1 701.4,313.5 700.6,312.8 699.9,312.1 699.4,311.4 698.8,310.5 698.4,309.8 697.9,308.9 697.4,307.8 696.8,306.7 696.3,305.4 695.8,304.1 695.3,302.7 694.8,301.3 694.4,299.9 694.0,298.5 693.8,297.1 693.6,295.9 693.5,294.7 693.4,293.7 693.5,292.9 693.3,291.9 693.1,290.9 692.9,289.7 692.9,288.5 692.9,287.3 693.0,286.0 693.1,284.8 693.3,283.6 693.5,282.4 693.8,281.3 694.1,280.3 694.4,279.5 694.7,278.7 694.9,278.2 695.3,277.7 695.8,277.2 696.5,276.6 697.4,276.1 698.4,275.7 699.6,275.3 701.0,274.9 702.4,274.6 704.0,274.3 705.6,274.1 707.2,273.9 708.8,273.7 710.1,273.6 711.4,273.6 713.0,273.7 714.6,273.8 716.4,274.0 718.1,274.3 719.9,274.5 721.7,274.8 723.5,275.1 725.1,275.4 726.7,275.7 728.2,275.9 729.5,276.1 730.7,276.3 731.7,276.3ZM729.3,273.4a3.0,3.0 0 1,0 6.0,0a3.0,3.0 0 1,0 -6.0,0ZM729.8,310.7a2.5,2.5 0 1,0 5.0,0a2.5,2.5 0 1,0 -5.0,0ZM734.3,269.5 734.2,270.4 734.1,271.3 734.0,272.4 733.9,273.6 733.8,274.9 733.7,276.3 733.6,277.8 733.5,279.3 733.3,281.0 733.2,282.7 733.1,284.5 732.9,286.3 732.8,288.2 732.7,290.1 732.5,292.1 732.4,294.1 732.2,296.1 732.1,297.4 732.0,298.6 731.9,300.0 731.8,301.3 731.7,302.7 731.5,304.1 731.4,305.5 731.3,307.0 731.2,308.5 731.0,310.0 730.9,311.5 730.8,313.0 730.6,314.6 730.5,316.2 730.4,317.8 730.2,319.4 730.1,321.1 730.0,322.7 729.9,324.4 729.7,326.1 729.6,327.7 729.5,329.4 729.4,331.1 729.3,332.8 729.2,334.5 729.1,336.2 729.0,337.9 728.9,339.7 728.9,341.1 728.8,342.6 728.8,344.1 728.8,345.7 728.7,347.3 728.7,348.8 728.7,350.5 728.6,352.1 728.6,353.7 728.6,355.4 728.6,357.0 728.6,358.7 728.6,360.3 728.6,362.0 728.5,363.6 728.5,365.3 728.5,366.9 728.5,368.6 728.5,370.2 728.5,371.8 728.5,373.4 728.5,374.9 728.5,376.4 728.5,378.0 728.5,379.4 728.5,380.9 728.5,382.3 728.5,383.7 728.5,385.0 728.5,386.3 728.4,387.5 728.4,388.7 728.4,389.9 728.4,392.2 728.4,394.3 728.5,396.3 728.5,398.2 728.5,399.9 728.6,401.5 728.6,403.0 728.6,404.5 728.6,405.8 728.6,407.1 728.6,408.4 728.6,409.5 728.6,410.7 728.6,411.9 728.6,413.0 728.5,414.3 728.5,416.1 728.5,417.9 728.5,419.6 728.6,421.1 728.6,422.5 728.5,423.8 728.5,424.9 728.4,425.9 728.3,426.9 728.2,427.7 728.0,428.5 727.7,429.4 727.4,430.4 726.9,431.4 726.2,432.4 725.5,433.5 724.7,434.5 723.9,435.5 723.0,436.4 722.1,437.3 721.2,438.2 720.2,438.9 719.1,439.7 717.8,440.4 716.4,441.0 715.0,441.6 713.5,442.2 712.1,442.7 710.8,443.1 709.6,443.5 708.1,443.9 707.3,444.0 706.4,444.1 704.8,443.9 702.4,443.5 701.2,443.4 699.9,443.2 698.5,443.1 697.0,442.9 695.5,442.7 693.9,442.5 692.3,442.3 690.7,442.1 689.1,441.8 687.5,441.5 686.0,441.1 684.6,440.7 683.2,440.3 682.0,439.8 680.6,439.2 679.2,438.5 677.9,437.8 676.6,437.1 675.3,436.4 674.1,435.6 673.0,434.7 671.9,433.8 670.8,432.9 669.9,431.9 669.0,430.8 668.2,429.6 667.5,428.2 667.0,427.2 666.6,426.1 666.1,424.9 665.7,423.6 665.4,422.2 665.1,420.8 664.8,419.3 664.5,417.8 664.3,416.2 664.1,414.7 663.9,413.1 663.8,411.5 663.7,409.9 663.6,408.3 663.5,406.8 663.5,405.3 663.5,403.8 663.5,402.3 663.5,400.8 663.6,399.2 663.8,397.6 663.9,396.0 664.1,394.4 664.3,392.8 664.6,391.2 664.9,389.6 665.2,388.1 665.6,386.6 666.0,385.1 666.4,383.6 666.9,382.2 667.4,380.9 667.9,379.6 668.5,378.3 669.2,376.9 669.9,375.5 670.8,374.2 671.6,372.9 672.5,371.6 673.5,370.4 674.5,369.2 675.5,368.1 676.5,367.0 677.6,366.0 678.7,365.0 679.9,364.1 681.0,363.3 682.2,362.5 683.4,361.9 684.6,361.3 685.8,360.7 687.1,360.3 688.4,359.9 689.8,359.5 691.2,359.2 692.6,358.9 694.1,358.7 695.6,358.4 697.2,358.2 698.8,358.1 700.4,357.9 702.1,357.7 703.4,357.6 704.7,357.5 706.1,357.4 707.4,357.4 708.8,357.4 710.3,357.4 711.7,357.4 713.2,357.5 714.7,357.5 716.2,357.6 717.7,357.6 719.3,357.7 720.9,357.7 722.5,357.8 724.1,357.8 725.7,357.8 727.3,357.8 729.0,357.7 730.5,357.6 731.9,357.5 733.4,357.5 734.9,357.4 736.3,357.2 737.8,357.1 739.3,357.0 740.8,356.9 742.3,356.7 743.8,356.6 745.3,356.4 746.9,356.3 748.5,356.1 750.1,356.0 751.7,355.8 753.3,355.7 755.0,355.5 756.7,355.4 758.4,355.2 760.2,355.1 761.5,355.0 763.0,354.9 764.5,354.7 766.0,354.6 767.6,354.5 769.3,354.3 771.0,354.2 772.7,354.1 774.4,353.9 776.2,353.8 777.9,353.6 779.7,353.5 781.4,353.4 783.2,353.2 784.9,353.1 786.5,352.9 788.2,352.8 789.7,352.7 791.3,352.6 792.7,352.4 794.1,352.3 795.4,352.2 796.7,352.1 797.8,352.0 798.8,351.9 799.7,351.9 800.6,351.8 800.2,347.8 799.4,347.9 798.5,347.9 797.5,348.0 796.3,348.1 795.1,348.2 793.8,348.3 792.4,348.4 790.9,348.5 789.4,348.6 787.8,348.7 786.2,348.9 784.5,349.0 782.8,349.1 781.1,349.3 779.4,349.4 777.6,349.5 775.9,349.7 774.1,349.8 772.4,349.9 770.7,350.1 769.0,350.2 767.3,350.3 765.7,350.4 764.1,350.6 762.6,350.7 761.2,350.8 759.8,350.9 758.1,351.1 756.3,351.2 754.6,351.4 752.9,351.5 751.3,351.7 749.7,351.8 748.1,352.0 746.5,352.1 744.9,352.3 743.4,352.4 741.9,352.5 740.4,352.7 738.9,352.8 737.5,352.9 736.0,353.1 734.6,353.2 733.1,353.3 731.7,353.4 730.2,353.4 728.8,353.5 727.2,353.6 725.7,353.6 724.1,353.6 722.5,353.6 721.0,353.5 719.4,353.5 717.9,353.5 716.4,353.4 714.8,353.3 713.3,353.3 711.8,353.2 710.3,353.2 708.8,353.2 707.4,353.2 705.9,353.2 704.5,353.3 703.1,353.4 701.7,353.5 700.0,353.7 698.3,353.9 696.7,354.1 695.0,354.3 693.4,354.5 691.8,354.8 690.3,355.1 688.7,355.4 687.2,355.8 685.7,356.3 684.3,356.8 682.8,357.5 681.4,358.2 680.0,359.0 678.7,359.8 677.4,360.8 676.1,361.8 674.8,362.9 673.6,364.0 672.4,365.2 671.3,366.5 670.2,367.8 669.1,369.1 668.1,370.5 667.2,372.0 666.3,373.4 665.5,375.0 664.7,376.5 664.1,377.9 663.5,379.3 662.9,380.8 662.4,382.4 662.0,383.9 661.5,385.5 661.1,387.1 660.8,388.8 660.5,390.5 660.2,392.1 659.9,393.8 659.7,395.5 659.6,397.2 659.4,398.9 659.4,400.6 659.3,402.3 659.3,403.8 659.3,405.3 659.3,406.9 659.4,408.5 659.5,410.2 659.6,411.8 659.7,413.5 659.9,415.2 660.1,416.8 660.4,418.5 660.6,420.1 661.0,421.7 661.3,423.2 661.7,424.7 662.1,426.2 662.6,427.6 663.1,428.9 663.7,430.2 664.6,431.8 665.6,433.2 666.7,434.6 667.9,435.9 669.1,437.0 670.4,438.1 671.8,439.0 673.1,439.9 674.5,440.8 676.0,441.5 677.4,442.3 678.8,442.9 680.2,443.6 681.7,444.3 683.2,444.8 684.9,445.3 686.5,445.8 688.2,446.2 689.9,446.5 691.6,446.8 693.3,447.1 694.9,447.4 696.4,447.6 697.9,447.8 699.2,448.0 700.4,448.3 701.4,448.5 703.6,449.1 705.1,449.7 706.6,450.2 708.3,450.5 710.4,450.5 711.9,450.5 713.4,450.5 715.2,450.4 717.0,450.3 718.9,450.0 720.8,449.7 722.9,449.2 724.9,448.6 726.8,447.8 728.5,447.1 730.0,446.3 731.7,445.3 733.3,444.3 734.8,443.2 736.4,441.9 737.9,440.5 739.4,439.0 740.7,437.3 742.0,435.5 743.0,433.7 743.8,431.9 744.5,430.1 745.1,428.3 745.5,426.5 745.9,424.7 746.3,422.9 746.6,421.1 746.9,419.4 747.2,417.6 747.5,415.7 747.6,414.4 747.8,413.0 747.9,411.6 748.0,410.2 748.0,408.9 748.1,407.5 748.2,406.1 748.2,404.6 748.3,403.2 748.3,401.6 748.3,400.0 748.4,398.2 748.4,396.4 748.5,394.5 748.5,392.4 748.6,390.1 748.6,389.0 748.6,387.7 748.6,386.4 748.6,385.1 748.6,383.8 748.6,382.4 748.6,381.0 748.7,379.5 748.7,378.0 748.7,376.5 748.7,375.0 748.7,373.4 748.7,371.8 748.7,370.2 748.7,368.6 748.7,367.0 748.7,365.4 748.7,363.7 748.7,362.1 748.7,360.5 748.7,358.8 748.7,357.2 748.8,355.6 748.8,354.0 748.8,352.3 748.8,350.8 748.9,349.2 748.9,347.7 748.9,346.1 748.9,344.6 749.0,343.2 749.0,341.7 749.1,340.3 749.1,338.7 749.2,337.1 749.2,335.4 749.3,333.8 749.3,332.2 749.4,330.5 749.5,328.9 749.5,327.3 749.6,325.6 749.7,324.0 749.8,322.4 749.9,320.8 750.0,319.2 750.1,317.6 750.2,316.0 750.2,314.4 750.3,312.9 750.4,311.4 750.5,309.9 750.6,308.4 750.7,306.9 750.8,305.4 750.9,304.0 750.9,302.6 751.0,301.2 751.1,299.9 751.1,298.6 751.2,297.3 751.3,295.2 751.4,293.2 751.5,291.2 751.5,289.2 751.6,287.3 751.7,285.5 751.8,283.7 751.8,282.0 751.9,280.3 751.9,278.8 752.0,277.3 752.0,275.9 752.1,274.6 752.1,273.4 752.1,272.3 752.1,271.3 752.1,270.5ZM734.2,270.0a9.0,9.0 0 1,0 17.9,0a9.0,9.0 0 1,0 -17.9,0ZM798.4,349.8a2.0,2.0 0 1,0 4.0,0a2.0,2.0 0 1,0 -4.0,0ZM348.9,269.5a4.8,4.8 0 1,0 9.6,0a4.8,4.8 0 1,0 -9.6,0ZM571.4,258.7a7,7 0 1,0 14,0a7,7 0 1,0 -14,0Z" fill="url(#lg)"/></svg>
<div style="left:843px;top:74px;width:15px;height:473px;background:#454443;"></div>
<div style="left:843px;top:74px;width:15px;height:13px;background:#353535;"></div>
<div style="left:843px;top:535px;width:15px;height:12px;background:#353535;"></div>
<svg style="left:846px;top:76px" width="8" height="6"><path d="M0 6L4 0L8 6Z" fill="#a0a0a0"/></svg>
<svg style="left:846px;top:539px" width="8" height="6"><path d="M0 0L4 6L8 0Z" fill="#a0a0a0"/></svg>
<div style="left:843px;top:253px;width:14px;height:114px;background:#686868;border-radius:5px"></div>
<div style="left:171px;top:547px;width:686px;height:15px;background:#393939;"></div>
<svg style="left:174px;top:550px" width="6" height="8"><path d="M6 0L0 4L6 8Z" fill="#a0a0a0"/></svg>
<svg style="left:849px;top:550px" width="6" height="8"><path d="M0 0L6 4L0 8Z" fill="#a0a0a0"/></svg>
<div style="left:428px;top:548px;width:170px;height:12px;background:#686868;border-radius:4px"></div>
<div style="left:857px;top:57px;width:3px;height:505px;background:#1e1e1e;"></div>
<div style="left:0px;top:562px;width:1024px;height:15px;background:#222222;"></div>
<div style="left:0px;top:577px;width:1024px;height:1px;background:#d8d8d8;"></div>
<div id="t31" class="tx" style="transform:scaleX(0.934);left:4.6px;top:566.8px;font-size:9px;line-height:9px;color:#d0d0d0;font-weight:normal;white-space:nowrap;">1600 * 1200 pixel</div>
<div id="t32" class="tx" style="transform:scaleX(0.967);left:77px;top:566.8px;font-size:9px;line-height:9px;color:#d0d0d0;font-weight:normal;white-space:nowrap;">(11.6 * 8.7cm)</div>
<div id="t33" class="tx" style="transform:scaleX(0.982);left:138px;top:566.8px;font-size:9px;line-height:9px;color:#d0d0d0;font-weight:normal;white-space:nowrap;">350 dpi</div>
<div id="t34" class="tx" style="transform:scaleX(0.877);left:173.8px;top:566.8px;font-size:9px;line-height:9px;color:#d0d0d0;font-weight:normal;white-space:nowrap;">50 %</div>
<div id="t35" class="tx" style="transform:scaleX(0.911);left:198.5px;top:566.8px;font-size:9px;line-height:9px;color:#d0d0d0;font-weight:normal;white-space:nowrap;">( 1679, 610 )</div>
<div id="t36" class="tx" style="transform:scaleX(0.993);left:251.5px;top:566.8px;font-size:9px;line-height:9px;color:#d0d0d0;font-weight:normal;white-space:nowrap;">Vẽ một đường thẳng bằng cách giữ phím Shift, Thay đổi cỡ cọ bằng cách giữ phím Ctrl, Alt và kéo</div>
<div style="left:860px;top:57px;width:164px;height:505px;background:#262626;"></div>
<div style="left:860px;top:57px;width:164px;height:1px;background:#4f83b0;"></div>
<div style="left:860px;top:58px;width:164px;height:15px;background:#2e2d2d;"></div>
<div id="t37" class="tx" style="left:912.0px;transform:scaleX(0.915);top:61.8px;font-size:9px;line-height:9px;color:#cfcfcf;font-weight:normal;white-space:nowrap;">Reference</div>
<svg style="left:1001px;top:61px" width="9" height="9"><path d="M4 1H1V8H8V5" fill="none" stroke="#bbb" stroke-width="1.1"/><path d="M4.5 4.5L8.5 0.5M5.5 0.5H8.5V3.5" fill="none" stroke="#bbb" stroke-width="1.1"/></svg>
<svg style="left:1013px;top:61px" width="9" height="9"><path d="M1 1L8 8M8 1L1 8" stroke="#e0e0e0" stroke-width="2"/></svg>
<div style="left:860px;top:73px;width:164px;height:22px;background:#222;"></div>
<div style="left:865px;top:75px;width:15px;height:15px;background:#404040;border:1px solid #4a4a4a;border-radius:3px"></div>
<svg style="left:865px;top:75px" width="17" height="17" viewBox="0 0 17 17"><path d="M4.5 10a2.6 2.6 0 0 1 0-5.2 3.8 3.8 0 0 1 7.4-.8 2.9 2.9 0 0 1 1 6z" fill="#f2f2f2"/><path d="M7.3 8.5h2.4v3h2L8.5 14.5 5.3 11.5h2z" fill="#ddd"/><path d="M7.3 8.5h2.4v3h2L8.5 14.5 5.3 11.5h2z" fill="none" stroke="#444" stroke-width="0.8" stroke-linecap="round" stroke-linejoin="round"/></svg>
<div style="left:886px;top:75px;width:15px;height:15px;background:#404040;border:1px solid #4a4a4a;border-radius:3px"></div>
<svg style="left:886px;top:75px" width="17" height="17" viewBox="0 0 17 17"><path d="M3 5h4l1 1.3h6V13H3z" fill="#e0e0e0"/></svg>
<div style="left:906px;top:75px;width:15px;height:15px;background:#404040;border:1px solid #4a4a4a;border-radius:3px"></div>
<svg style="left:906px;top:75px" width="17" height="17" viewBox="0 0 17 17"><path d="M5.5 5.5L11.5 11.5M11.5 5.5L5.5 11.5" fill="none" stroke="#e0e0e0" stroke-width="1.6" stroke-linecap="round" stroke-linejoin="round"/></svg>
<div style="left:927px;top:79px;width:1px;height:9px;background:#555;"></div>
<div style="left:931px;top:75px;width:15px;height:15px;background:#404040;border:1px solid #4a4a4a;border-radius:3px"></div>
<svg style="left:931px;top:75px" width="17" height="17" viewBox="0 0 17 17"><path d="M7.5 11.5a4 4 0 1 0 0-8 4 4 0 1 0 0 8zM10.5 10.5L14 14M5.5 7.5h4M7.5 5.5v4" fill="none" stroke="#f2f2f2" stroke-width="1.3" stroke-linecap="round" stroke-linejoin="round"/></svg>
<div style="left:952px;top:75px;width:15px;height:15px;background:#404040;border:1px solid #4a4a4a;border-radius:3px"></div>
<svg style="left:952px;top:75px" width="17" height="17" viewBox="0 0 17 17"><path d="M3.5 3.5H13.5V13.5H3.5Z" fill="none" stroke="#f2f2f2" stroke-width="1" stroke-linecap="round" stroke-linejoin="round"/><path d="M4.5 4.5L7 7M12.5 4.5L10 7M4.5 12.5L7 10M12.5 12.5L10 10" fill="none" stroke="#f2f2f2" stroke-width="1" stroke-linecap="round" stroke-linejoin="round"/></svg>
<div style="left:972px;top:75px;width:15px;height:15px;background:#404040;border:1px solid #4a4a4a;border-radius:3px"></div>
<svg style="left:972px;top:75px" width="17" height="17" viewBox="0 0 17 17"><path d="M7.5 11.5a4 4 0 1 0 0-8 4 4 0 1 0 0 8zM10.5 10.5L14 14M5.5 7.5h4" fill="none" stroke="#f2f2f2" stroke-width="1.3" stroke-linecap="round" stroke-linejoin="round"/></svg>
<div style="left:998px;top:79px;width:1px;height:9px;background:#555;"></div>
<div style="left:1015px;top:76px;width:5px;height:16px;background:#4a4a4a;border-radius:2px"></div>
<div style="left:860px;top:95px;width:164px;height:40px;background:#fff;background-image:linear-gradient(45deg,#eee 25%,transparent 25%,transparent 75%,#eee 75%),linear-gradient(45deg,#eee 25%,transparent 25%,transparent 75%,#eee 75%);background-size:8px 8px;background-position:0 0,4px 4px"></div>
<div style="left:860px;top:95px;width:40px;height:40px;background:#ffffff;"></div>
<div id="t38" class="tx" style="transform:scaleX(1.103);left:870.6px;top:99.1px;font-size:7px;line-height:7px;color:#e07070;font-weight:bold;white-space:nowrap;font-family:Liberation Serif,serif;font-style:italic">Anage</div>
<div id="t39" class="tx" style="transform:scaleX(0.579);left:865px;top:106.7px;font-size:6px;line-height:6px;color:#222;font-weight:bold;white-space:nowrap;font-family:Liberation Serif,serif;font-style:italic">Aa Bb Cc Dd Ee Ff Gg</div>
<div id="t40" class="tx" style="transform:scaleX(0.593);left:865px;top:113.5px;font-size:6px;line-height:6px;color:#222;font-weight:bold;white-space:nowrap;font-family:Liberation Serif,serif;font-style:italic">Hh Ii Jj Kk Ll Mm Nn</div>
<div id="t41" class="tx" style="transform:scaleX(0.596);left:865px;top:119.8px;font-size:6px;line-height:6px;color:#222;font-weight:bold;white-space:nowrap;font-family:Liberation Serif,serif;font-style:italic">Oo Pp Qq Rr Ss Tt Uu</div>
<div id="t42" class="tx" style="transform:scaleX(0.632);left:868px;top:125.5px;font-size:6px;line-height:6px;color:#222;font-weight:bold;white-space:nowrap;font-family:Liberation Serif,serif;font-style:italic">Vv Ww Xx Yy Zz</div>
<div style="left:860px;top:135px;width:164px;height:4px;background:#1d1d1d;"></div>
<div style="left:860px;top:139px;width:164px;height:1px;background:#4f83b0;"></div>
<div style="left:860px;top:140px;width:164px;height:15px;background:#2e2d2d;"></div>
<div id="t43" class="tx" style="left:907.5px;transform:scaleX(0.856);top:143.8px;font-size:9px;line-height:9px;color:#cfcfcf;font-weight:normal;white-space:nowrap;">Xem trước cọ</div>
<svg style="left:1001px;top:143px" width="9" height="9"><path d="M4 1H1V8H8V5" fill="none" stroke="#bbb" stroke-width="1.1"/><path d="M4.5 4.5L8.5 0.5M5.5 0.5H8.5V3.5" fill="none" stroke="#bbb" stroke-width="1.1"/></svg>
<svg style="left:1013px;top:143px" width="9" height="9"><path d="M1 1L8 8M8 1L1 8" stroke="#e0e0e0" stroke-width="2"/></svg>
<div style="left:860px;top:155px;width:164px;height:38px;background:#fff;background-image:linear-gradient(45deg,#eee 25%,transparent 25%,transparent 75%,#eee 75%),linear-gradient(45deg,#eee 25%,transparent 25%,transparent 75%,#eee 75%);background-size:8px 8px;background-position:0 0,4px 4px"></div>
<div style="left:861px;top:155px;width:39px;height:38px;background:#ffffff;"></div>
<div style="left:862px;top:155px;width:38px;height:38px;border-radius:50%;background:#404040"></div>
<div id="t44" class="tx" style="transform:scaleX(0.913);left:867px;top:157.9px;font-size:10px;line-height:10px;color:#6a9fd0;font-weight:normal;white-space:nowrap;">7.26mm</div>
<svg style="left:860px;top:155px" width="164" height="38"><path d="M47.8 18.7C55 14 62 10 69.3 8S84 4.4 89 4.4C97 4.4 102 6 107.2 8S120 12.5 127 14.6 140 17 143.5 17 153 18.5 156.7 19.6C152 22 148 24 143.5 26.2S132 32 127 33C120 33 115 30 110.5 27.8S99 19 94 16.25 83 14.6 77.5 14.6 66 15.5 61 16.25 52 18 47.8 18.7Z" fill="#000"/></svg>
<div style="left:860px;top:193px;width:164px;height:5px;background:#1d1d1d;"></div>
<div style="left:860px;top:198px;width:164px;height:1px;background:#4f83b0;"></div>
<div style="left:860px;top:199px;width:164px;height:15px;background:#2e2d2d;"></div>
<div id="t45" class="tx" style="left:924.5px;transform:scaleX(0.816);top:202.8px;font-size:9px;line-height:9px;color:#cfcfcf;font-weight:normal;white-space:nowrap;">Lớp</div>
<svg style="left:1001px;top:202px" width="9" height="9"><path d="M4 1H1V8H8V5" fill="none" stroke="#bbb" stroke-width="1.1"/><path d="M4.5 4.5L8.5 0.5M5.5 0.5H8.5V3.5" fill="none" stroke="#bbb" stroke-width="1.1"/></svg>
<svg style="left:1013px;top:202px" width="9" height="9"><path d="M1 1L8 8M8 1L1 8" stroke="#e0e0e0" stroke-width="2"/></svg>
<div style="left:860px;top:214px;width:164px;height:170px;background:#2a2a2a;"></div>
<div id="t46" class="tx" style="transform:scaleX(0.927);left:866px;top:221.8px;font-size:9px;line-height:9px;color:#cfcfcf;font-weight:normal;white-space:nowrap;">Độ trong</div>
<div style="left:905px;top:219px;width:86px;height:11px;background:linear-gradient(to right,#58a8e8,#3f8cd0)"></div>
<div id="t47" class="tx" style="transform:scaleX(0.901);left:996px;top:221.8px;font-size:9px;line-height:9px;color:#cfcfcf;font-weight:normal;white-space:nowrap;">100 %</div>
<div id="t48" class="tx" style="transform:scaleX(0.940);left:866px;top:239.8px;font-size:9px;line-height:9px;color:#cfcfcf;font-weight:normal;white-space:nowrap;">Pha trộn</div>
<div style="left:908px;top:236px;width:111px;height:15px;background:#404040;border-radius:2px"></div>
<div id="t49" class="tx" style="transform:scaleX(0.872);left:910px;top:239.8px;font-size:9px;line-height:9px;color:#cfcfcf;font-weight:normal;white-space:nowrap;">Bình thường</div>
<svg style="left:1010px;top:242px" width="6" height="4"><path d="M0 0H6L3 4Z" fill="#aaa"/></svg>
<svg style="left:867px;top:258px" width="10" height="10"><path d="M0.5 0.5H9.5V9.5H0.5Z" fill="none" stroke="#d0d0d0"/><path d="M3 3L7 7M7 3L3 7" stroke="#d0d0d0" stroke-width="1.2"/></svg>
<div id="t50" class="tx" style="transform:scaleX(0.894);left:880px;top:259.3px;font-size:9px;line-height:9px;color:#cfcfcf;font-weight:normal;white-space:nowrap;">Bảo vệ alpha</div>
<div style="left:936px;top:258px;width:8px;height:8px;border:1px solid #cfcfcf"></div>
<div id="t51" class="tx" style="transform:scaleX(0.877);left:949px;top:259.3px;font-size:9px;line-height:9px;color:#cfcfcf;font-weight:normal;white-space:nowrap;">Xén bớt</div>
<div style="left:986px;top:258px;width:8px;height:8px;border:1px solid #cfcfcf"></div>
<div id="t52" class="tx" style="transform:scaleX(0.903);left:998px;top:259.3px;font-size:9px;line-height:9px;color:#cfcfcf;font-weight:normal;white-space:nowrap;">Khóa</div>
<div style="left:863px;top:273px;width:145px;height:86px;background:#484848;"></div>
<div style="left:863px;top:273px;width:14px;height:30px;background:#555555;"></div>
<div style="left:877px;top:273px;width:131px;height:30px;background:#4a98d8;"></div>
<div style="left:863px;top:304px;width:145px;height:29px;background:#555555;"></div>
<div style="left:863px;top:303px;width:145px;height:1px;background:#3a3a3a;"></div>
<div style="left:863px;top:333px;width:145px;height:1px;background:#3a3a3a;"></div>
<div style="left:866px;top:285px;width:6px;height:6px;border-radius:50%;background:#d0d0d0;border:1px solid #999"></div>
<div style="left:866px;top:315px;width:6px;height:6px;border-radius:50%;background:#d0d0d0;border:1px solid #999"></div>
<div style="left:889px;top:278px;width:26px;height:20px;background:#fff;background-image:linear-gradient(45deg,#e8e8e8 25%,transparent 25%,transparent 75%,#e8e8e8 75%),linear-gradient(45deg,#e8e8e8 25%,transparent 25%,transparent 75%,#e8e8e8 75%);background-size:4px 4px;background-position:0 0,2px 2px"></div>
<div style="left:889px;top:308px;width:26px;height:19px;background:#ffffff;"></div>
<div id="t53" class="tx" style="transform:scaleX(0.974);left:891px;top:285.1px;font-size:7px;line-height:7px;color:#d86a3a;font-weight:normal;white-space:nowrap;font-style:italic">fighting</div>
<div id="t54" class="tx" style="transform:scaleX(0.974);left:891px;top:315.1px;font-size:7px;line-height:7px;color:#f3c0a5;font-weight:normal;white-space:nowrap;font-style:italic">fighting</div>
<div id="t55" class="tx" style="transform:scaleX(1.026);left:928px;top:284.8px;font-size:9px;line-height:9px;color:#ffffff;font-weight:bold;white-space:nowrap;">Lớp2</div>
<div id="t56" class="tx" style="transform:scaleX(1.099);left:928px;top:314.3px;font-size:9px;line-height:9px;color:#e6e6e6;font-weight:normal;white-space:nowrap;">Lớp1</div>
<svg style="left:990px;top:281px" width="14" height="14"><g fill="#fff"><circle cx="7" cy="7" r="4.5"/><path d="M6 0H8V14H6Z M0 6H14V8H0Z M2 3.4L3.4 2 12 10.6 10.6 12Z M12 3.4L10.6 2 2 10.6 3.4 12Z"/></g><circle cx="7" cy="7" r="2" fill="#4a98d8"/></svg>
<div style="left:1008px;top:273px;width:14px;height:86px;background:#333;"></div>
<svg style="left:1011px;top:275px" width="8" height="6"><path d="M0 6L4 0L8 6Z" fill="#aaa"/></svg>
<svg style="left:1011px;top:352px" width="8" height="6"><path d="M0 0L4 6L8 0Z" fill="#aaa"/></svg>
<div style="left:1009px;top:282px;width:12px;height:68px;background:#666;border-radius:5px"></div>
<div style="left:860px;top:359px;width:164px;height:25px;background:#222;"></div>
<div style="left:866px;top:362px;width:15px;height:15px;background:#404040;border:1px solid #4a4a4a;border-radius:3px"></div>
<svg style="left:866px;top:362px" width="17" height="17" viewBox="0 0 17 17"><path d="M5 3.5H9.5L12 6V13.5H5Z" fill="none" stroke="#f2f2f2" stroke-width="1.1" stroke-linecap="round" stroke-linejoin="round"/></svg>
<div style="left:886px;top:362px;width:15px;height:15px;background:#404040;border:1px solid #4a4a4a;border-radius:3px"></div>
<svg style="left:886px;top:362px" width="17" height="17" viewBox="0 0 17 17"><path d="M5 3.5H9.5L12 6V13.5H5Z" fill="none" stroke="#f2f2f2" stroke-width="1.1" stroke-linecap="round" stroke-linejoin="round"/><path d="M8.5 11.5a1.2 1.2 0 1 0 0-2.4 1.2 1.2 0 1 0 0 2.4zM8.5 9.1a1 1 0 1 0 0-2 1 1 0 1 0 0 2z" fill="none" stroke="#f2f2f2" stroke-width="0.9" stroke-linecap="round" stroke-linejoin="round"/></svg>
<div style="left:906px;top:362px;width:15px;height:15px;background:#404040;border:1px solid #4a4a4a;border-radius:3px"></div>
<svg style="left:906px;top:362px" width="17" height="17" viewBox="0 0 17 17"><path d="M5 3.5H9.5L12 6V13.5H5Z" fill="none" stroke="#f2f2f2" stroke-width="1.1" stroke-linecap="round" stroke-linejoin="round"/><path d="M8.5 7V12M7.5 8L8.5 7" fill="none" stroke="#f2f2f2" stroke-width="1" stroke-linecap="round" stroke-linejoin="round"/></svg>
<div style="left:927px;top:362px;width:19px;height:15px;background:#404040;border:1px solid #4a4a4a;border-radius:3px"></div>
<svg style="left:927px;top:362px" width="21" height="17" viewBox="0 0 21 17"><path d="M4 3.5H8.5L11 6V13.5H4Z" fill="none" stroke="#f2f2f2" stroke-width="1.1" stroke-linecap="round" stroke-linejoin="round"/><path d="M10 11.5h4M12 9.5v4" fill="none" stroke="#f2f2f2" stroke-width="1.3" stroke-linecap="round" stroke-linejoin="round"/><path d="M15 8.5h3l-1.5 2z" fill="#f2f2f2"/></svg>
<div style="left:952px;top:362px;width:16px;height:15px;background:#404040;border:1px solid #4a4a4a;border-radius:3px"></div>
<svg style="left:952px;top:362px" width="18" height="17" viewBox="0 0 18 17"><path d="M3 5h4l1 1.3h6V13H3z" fill="#e0e0e0"/></svg>
<div style="left:978px;top:362px;width:15px;height:15px;background:#404040;border:1px solid #4a4a4a;border-radius:3px"></div>
<svg style="left:978px;top:362px" width="17" height="17" viewBox="0 0 17 17"><path d="M5.5 6.5H11.5V13.5H5.5Z" fill="none" stroke="#f2f2f2" stroke-width="1.1" stroke-linecap="round" stroke-linejoin="round"/><path d="M7.5 6.5V4H13.5V11H11.5" fill="none" stroke="#f2f2f2" stroke-width="1.1" stroke-linecap="round" stroke-linejoin="round"/></svg>
<div style="left:974px;top:366px;width:1px;height:9px;background:#555;"></div>
<div style="left:1014px;top:363px;width:6px;height:16px;background:#444;border-radius:2px"></div>
<div style="left:860px;top:384px;width:164px;height:4px;background:#1d1d1d;"></div>
<div style="left:860px;top:388px;width:164px;height:1px;background:#4f83b0;"></div>
<div style="left:860px;top:389px;width:164px;height:15px;background:#2e2d2d;"></div>
<div id="t57" class="tx" style="left:916.5px;transform:scaleX(0.891);top:392.8px;font-size:9px;line-height:9px;color:#cfcfcf;font-weight:normal;white-space:nowrap;">Cọ: Pen</div>
<svg style="left:1001px;top:392px" width="9" height="9"><path d="M4 1H1V8H8V5" fill="none" stroke="#bbb" stroke-width="1.1"/><path d="M4.5 4.5L8.5 0.5M5.5 0.5H8.5V3.5" fill="none" stroke="#bbb" stroke-width="1.1"/></svg>
<svg style="left:1013px;top:392px" width="9" height="9"><path d="M1 1L8 8M8 1L1 8" stroke="#e0e0e0" stroke-width="2"/></svg>
<div style="left:860px;top:404px;width:164px;height:70px;background:#2a2a2a;"></div>
<div style="left:863px;top:405px;width:145px;height:15px;background:#555555;"></div>
<div style="left:863px;top:419px;width:145px;height:1px;background:#3d3d3d;"></div>
<div style="left:864px;top:406px;width:12px;height:12px;background:#333333;"></div>
<div id="t58" class="tx" style="transform:scaleX(0.998);left:880px;top:408.8px;font-size:9px;line-height:9px;color:#e0e0e0;font-weight:normal;white-space:nowrap;">20</div>
<div id="t59" class="tx" style="transform:scaleX(0.979);left:904px;top:408.8px;font-size:9px;line-height:9px;color:#e6e6e6;font-weight:normal;white-space:nowrap;">Pencil</div>
<div style="left:863px;top:420px;width:145px;height:15px;background:#4a98d8;"></div>
<div style="left:863px;top:434px;width:145px;height:1px;background:#3d3d3d;"></div>
<div style="left:864px;top:421px;width:12px;height:12px;background:#333333;"></div>
<div id="t60" class="tx" style="transform:scaleX(0.998);left:880px;top:423.8px;font-size:9px;line-height:9px;color:#f08080;font-weight:normal;white-space:nowrap;">100</div>
<div id="t61" class="tx" style="transform:scaleX(0.969);left:904px;top:423.8px;font-size:9px;line-height:9px;color:#ffffff;font-weight:bold;white-space:nowrap;">Pen</div>
<div style="left:863px;top:435px;width:145px;height:15px;background:#555555;"></div>
<div style="left:863px;top:449px;width:145px;height:1px;background:#3d3d3d;"></div>
<div style="left:864px;top:436px;width:12px;height:12px;background:#333333;"></div>
<div id="t62" class="tx" style="transform:scaleX(0.998);left:880px;top:438.8px;font-size:9px;line-height:9px;color:#e0e0e0;font-weight:normal;white-space:nowrap;">10</div>
<div id="t63" class="tx" style="transform:scaleX(0.927);left:904px;top:438.8px;font-size:9px;line-height:9px;color:#e6e6e6;font-weight:normal;white-space:nowrap;">Pen (Sharp)</div>
<div style="left:863px;top:450px;width:145px;height:15px;background:#555555;"></div>
<div style="left:863px;top:464px;width:145px;height:1px;background:#3d3d3d;"></div>
<div style="left:864px;top:451px;width:12px;height:12px;background:#ee3333;"></div>
<div id="t64" class="tx" style="transform:scaleX(0.998);left:880px;top:453.8px;font-size:9px;line-height:9px;color:#e0e0e0;font-weight:normal;white-space:nowrap;">15</div>
<div id="t65" class="tx" style="transform:scaleX(0.901);left:904px;top:453.8px;font-size:9px;line-height:9px;color:#e6e6e6;font-weight:normal;white-space:nowrap;">G Pen</div>
<div style="left:863px;top:465px;width:145px;height:6px;background:#555555;"></div>
<div style="left:864px;top:466px;width:12px;height:5px;background:#ee3333;"></div>
<svg style="left:993px;top:421px" width="13" height="13"><g fill="#fff"><circle cx="6.5" cy="6.5" r="4"/><path d="M5.5 0H7.5V13H5.5Z M0 5.5H13V7.5H0Z M1.8 3.2L3.2 1.8 11.2 9.8 9.8 11.2Z M11.2 3.2L9.8 1.8 1.8 9.8 3.2 11.2Z"/></g><circle cx="6.5" cy="6.5" r="1.8" fill="#4a98d8"/></svg>
<div style="left:1008px;top:405px;width:14px;height:66px;background:#333;"></div>
<svg style="left:1011px;top:407px" width="8" height="6"><path d="M0 6L4 0L8 6Z" fill="#aaa"/></svg>
<svg style="left:1011px;top:464px" width="8" height="6"><path d="M0 0L4 6L8 0Z" fill="#aaa"/></svg>
<div style="left:1009px;top:413px;width:12px;height:10px;background:#666;border-radius:4px"></div>
<div style="left:860px;top:471px;width:164px;height:26px;background:#222;"></div>
<div style="left:866px;top:475px;width:15px;height:15px;background:#404040;border:1px solid #4a4a4a;border-radius:3px"></div>
<svg style="left:866px;top:475px" width="17" height="17" viewBox="0 0 17 17"><path d="M4.5 10a2.6 2.6 0 0 1 0-5.2 3.8 3.8 0 0 1 7.4-.8 2.9 2.9 0 0 1 1 6z" fill="#f2f2f2"/><path d="M7.3 8.5h2.4v3h2L8.5 14.5 5.3 11.5h2z" fill="#ddd"/><path d="M7.3 8.5h2.4v3h2L8.5 14.5 5.3 11.5h2z" fill="none" stroke="#444" stroke-width="0.8" stroke-linecap="round" stroke-linejoin="round"/></svg>
<div style="left:886px;top:475px;width:16px;height:15px;background:#404040;border:1px solid #4a4a4a;border-radius:3px"></div>
<svg style="left:886px;top:475px" width="18" height="17" viewBox="0 0 18 17"><path d="M5 3.5H9.5L12 6V13.5H5Z" fill="none" stroke="#f2f2f2" stroke-width="1.1" stroke-linecap="round" stroke-linejoin="round"/></svg>
<div style="left:907px;top:475px;width:19px;height:15px;background:#404040;border:1px solid #4a4a4a;border-radius:3px"></div>
<svg style="left:907px;top:475px" width="21" height="17" viewBox="0 0 21 17"><path d="M4.5 4h5l2 2v7.5h-7z" fill="#e8e8e8"/><path d="M6 8h2.5v2.5H6z" fill="#555"/><path d="M13 8.5h3l-1.5 2z" fill="#f2f2f2"/></svg>
<div style="left:932px;top:475px;width:16px;height:15px;background:#404040;border:1px solid #4a4a4a;border-radius:3px"></div>
<svg style="left:932px;top:475px" width="18" height="17" viewBox="0 0 18 17"><path d="M5 3.5H9.5L12 6V13.5H5Z" fill="none" stroke="#f2f2f2" stroke-width="1.1" stroke-linecap="round" stroke-linejoin="round"/><path d="M10 8C9.5 7.3 7.2 7.3 7.2 8.5S10 9.5 10 10.8 7.5 11.8 7 11" fill="none" stroke="#f2f2f2" stroke-width="1" stroke-linecap="round" stroke-linejoin="round"/></svg>
<div style="left:952px;top:475px;width:16px;height:15px;background:#404040;border:1px solid #4a4a4a;border-radius:3px"></div>
<svg style="left:952px;top:475px" width="18" height="17" viewBox="0 0 18 17"><path d="M3 5h4l1 1.3h6V13H3z" fill="#e0e0e0"/></svg>
<div style="left:973px;top:475px;width:15px;height:15px;background:#404040;border:1px solid #4a4a4a;border-radius:3px"></div>
<svg style="left:973px;top:475px" width="17" height="17" viewBox="0 0 17 17"><path d="M5.5 6.5H11.5V13.5H5.5Z" fill="none" stroke="#f2f2f2" stroke-width="1.1" stroke-linecap="round" stroke-linejoin="round"/><path d="M7.5 6.5V4H13.5V11H11.5" fill="none" stroke="#f2f2f2" stroke-width="1.1" stroke-linecap="round" stroke-linejoin="round"/></svg>
<div style="left:999px;top:475px;width:15px;height:15px;background:#404040;border:1px solid #4a4a4a;border-radius:3px"></div>
<svg style="left:999px;top:475px" width="17" height="17" viewBox="0 0 17 17"><path d="M4.5 5.5H12.5M6.5 5.5V4H10.5V5.5M5.5 6.5H11.5V13.5H5.5ZM7.5 7.5V12.5M9.5 7.5V12.5" fill="none" stroke="#f2f2f2" stroke-width="1.1" stroke-linecap="round" stroke-linejoin="round"/></svg>
<div style="left:994px;top:479px;width:1px;height:9px;background:#555;"></div>
<div style="left:860px;top:497px;width:164px;height:3px;background:#1d1d1d;"></div>
<div style="left:860px;top:500px;width:164px;height:1px;background:#4f83b0;"></div>
<div style="left:860px;top:501px;width:164px;height:15px;background:#2e2d2d;"></div>
<div id="t66" class="tx" style="left:912.5px;transform:scaleX(0.850);top:504.8px;font-size:9px;line-height:9px;color:#cfcfcf;font-weight:normal;white-space:nowrap;">Brush Size</div>
<svg style="left:1001px;top:504px" width="9" height="9"><path d="M4 1H1V8H8V5" fill="none" stroke="#bbb" stroke-width="1.1"/><path d="M4.5 4.5L8.5 0.5M5.5 0.5H8.5V3.5" fill="none" stroke="#bbb" stroke-width="1.1"/></svg>
<svg style="left:1013px;top:504px" width="9" height="9"><path d="M1 1L8 8M8 1L1 8" stroke="#e0e0e0" stroke-width="2"/></svg>
<div style="left:860px;top:515px;width:149px;height:47px;background:#4a4a4a;overflow:hidden"><div style="position:absolute;left:2px;top:0;width:29px;height:22px;background:#575757"></div><div style="position:absolute;left:2px;top:23px;width:29px;height:24px;background:#575757"></div><div style="position:absolute;left:7px;top:-9px;width:19px;height:19px;border-radius:50%;background:#eee"></div><div style="position:absolute;left:7px;top:28px;width:19px;height:19px;border-radius:50%;background:#eee"></div><div style="position:absolute;left:32px;top:0;width:29px;height:22px;background:#575757"></div><div style="position:absolute;left:32px;top:23px;width:29px;height:24px;background:#575757"></div><div style="position:absolute;left:37px;top:-9px;width:19px;height:19px;border-radius:50%;background:#eee"></div><div style="position:absolute;left:37px;top:28px;width:19px;height:19px;border-radius:50%;background:#eee"></div><div style="position:absolute;left:61px;top:0;width:29px;height:22px;background:#575757"></div><div style="position:absolute;left:61px;top:23px;width:29px;height:24px;background:#575757"></div><div style="position:absolute;left:66px;top:-9px;width:19px;height:19px;border-radius:50%;background:#eee"></div><div style="position:absolute;left:66px;top:28px;width:19px;height:19px;border-radius:50%;background:#eee"></div><div style="position:absolute;left:91px;top:0;width:29px;height:22px;background:#575757"></div><div style="position:absolute;left:91px;top:23px;width:29px;height:24px;background:#575757"></div><div style="position:absolute;left:96px;top:-9px;width:19px;height:19px;border-radius:50%;background:#eee"></div><div style="position:absolute;left:96px;top:28px;width:19px;height:19px;border-radius:50%;background:#eee"></div></div>
<div id="t67" class="tx" style="left:872.0px;transform:scaleX(0.899);top:529.3px;font-size:9px;line-height:9px;color:#e0e0e0;font-weight:normal;white-space:nowrap;">30</div>
<div id="t68" class="tx" style="left:902.0px;transform:scaleX(0.899);top:529.3px;font-size:9px;line-height:9px;color:#e0e0e0;font-weight:normal;white-space:nowrap;">40</div>
<div id="t69" class="tx" style="left:931.0px;transform:scaleX(0.899);top:529.3px;font-size:9px;line-height:9px;color:#e0e0e0;font-weight:normal;white-space:nowrap;">50</div>
<div id="t70" class="tx" style="left:961.0px;transform:scaleX(0.899);top:529.3px;font-size:9px;line-height:9px;color:#e0e0e0;font-weight:normal;white-space:nowrap;">70</div>
<div style="left:1009px;top:515px;width:15px;height:47px;background:#333;"></div>
<svg style="left:1012px;top:517px" width="9" height="7"><path d="M0 7L4.5 0L9 7Z" fill="#aaa"/></svg>
<svg style="left:1012px;top:553px" width="9" height="7"><path d="M0 0L4.5 7L9 0Z" fill="#aaa"/></svg>
<div style="left:1009px;top:541px;width:15px;height:6px;background:#666;"></div>
</body></html>
